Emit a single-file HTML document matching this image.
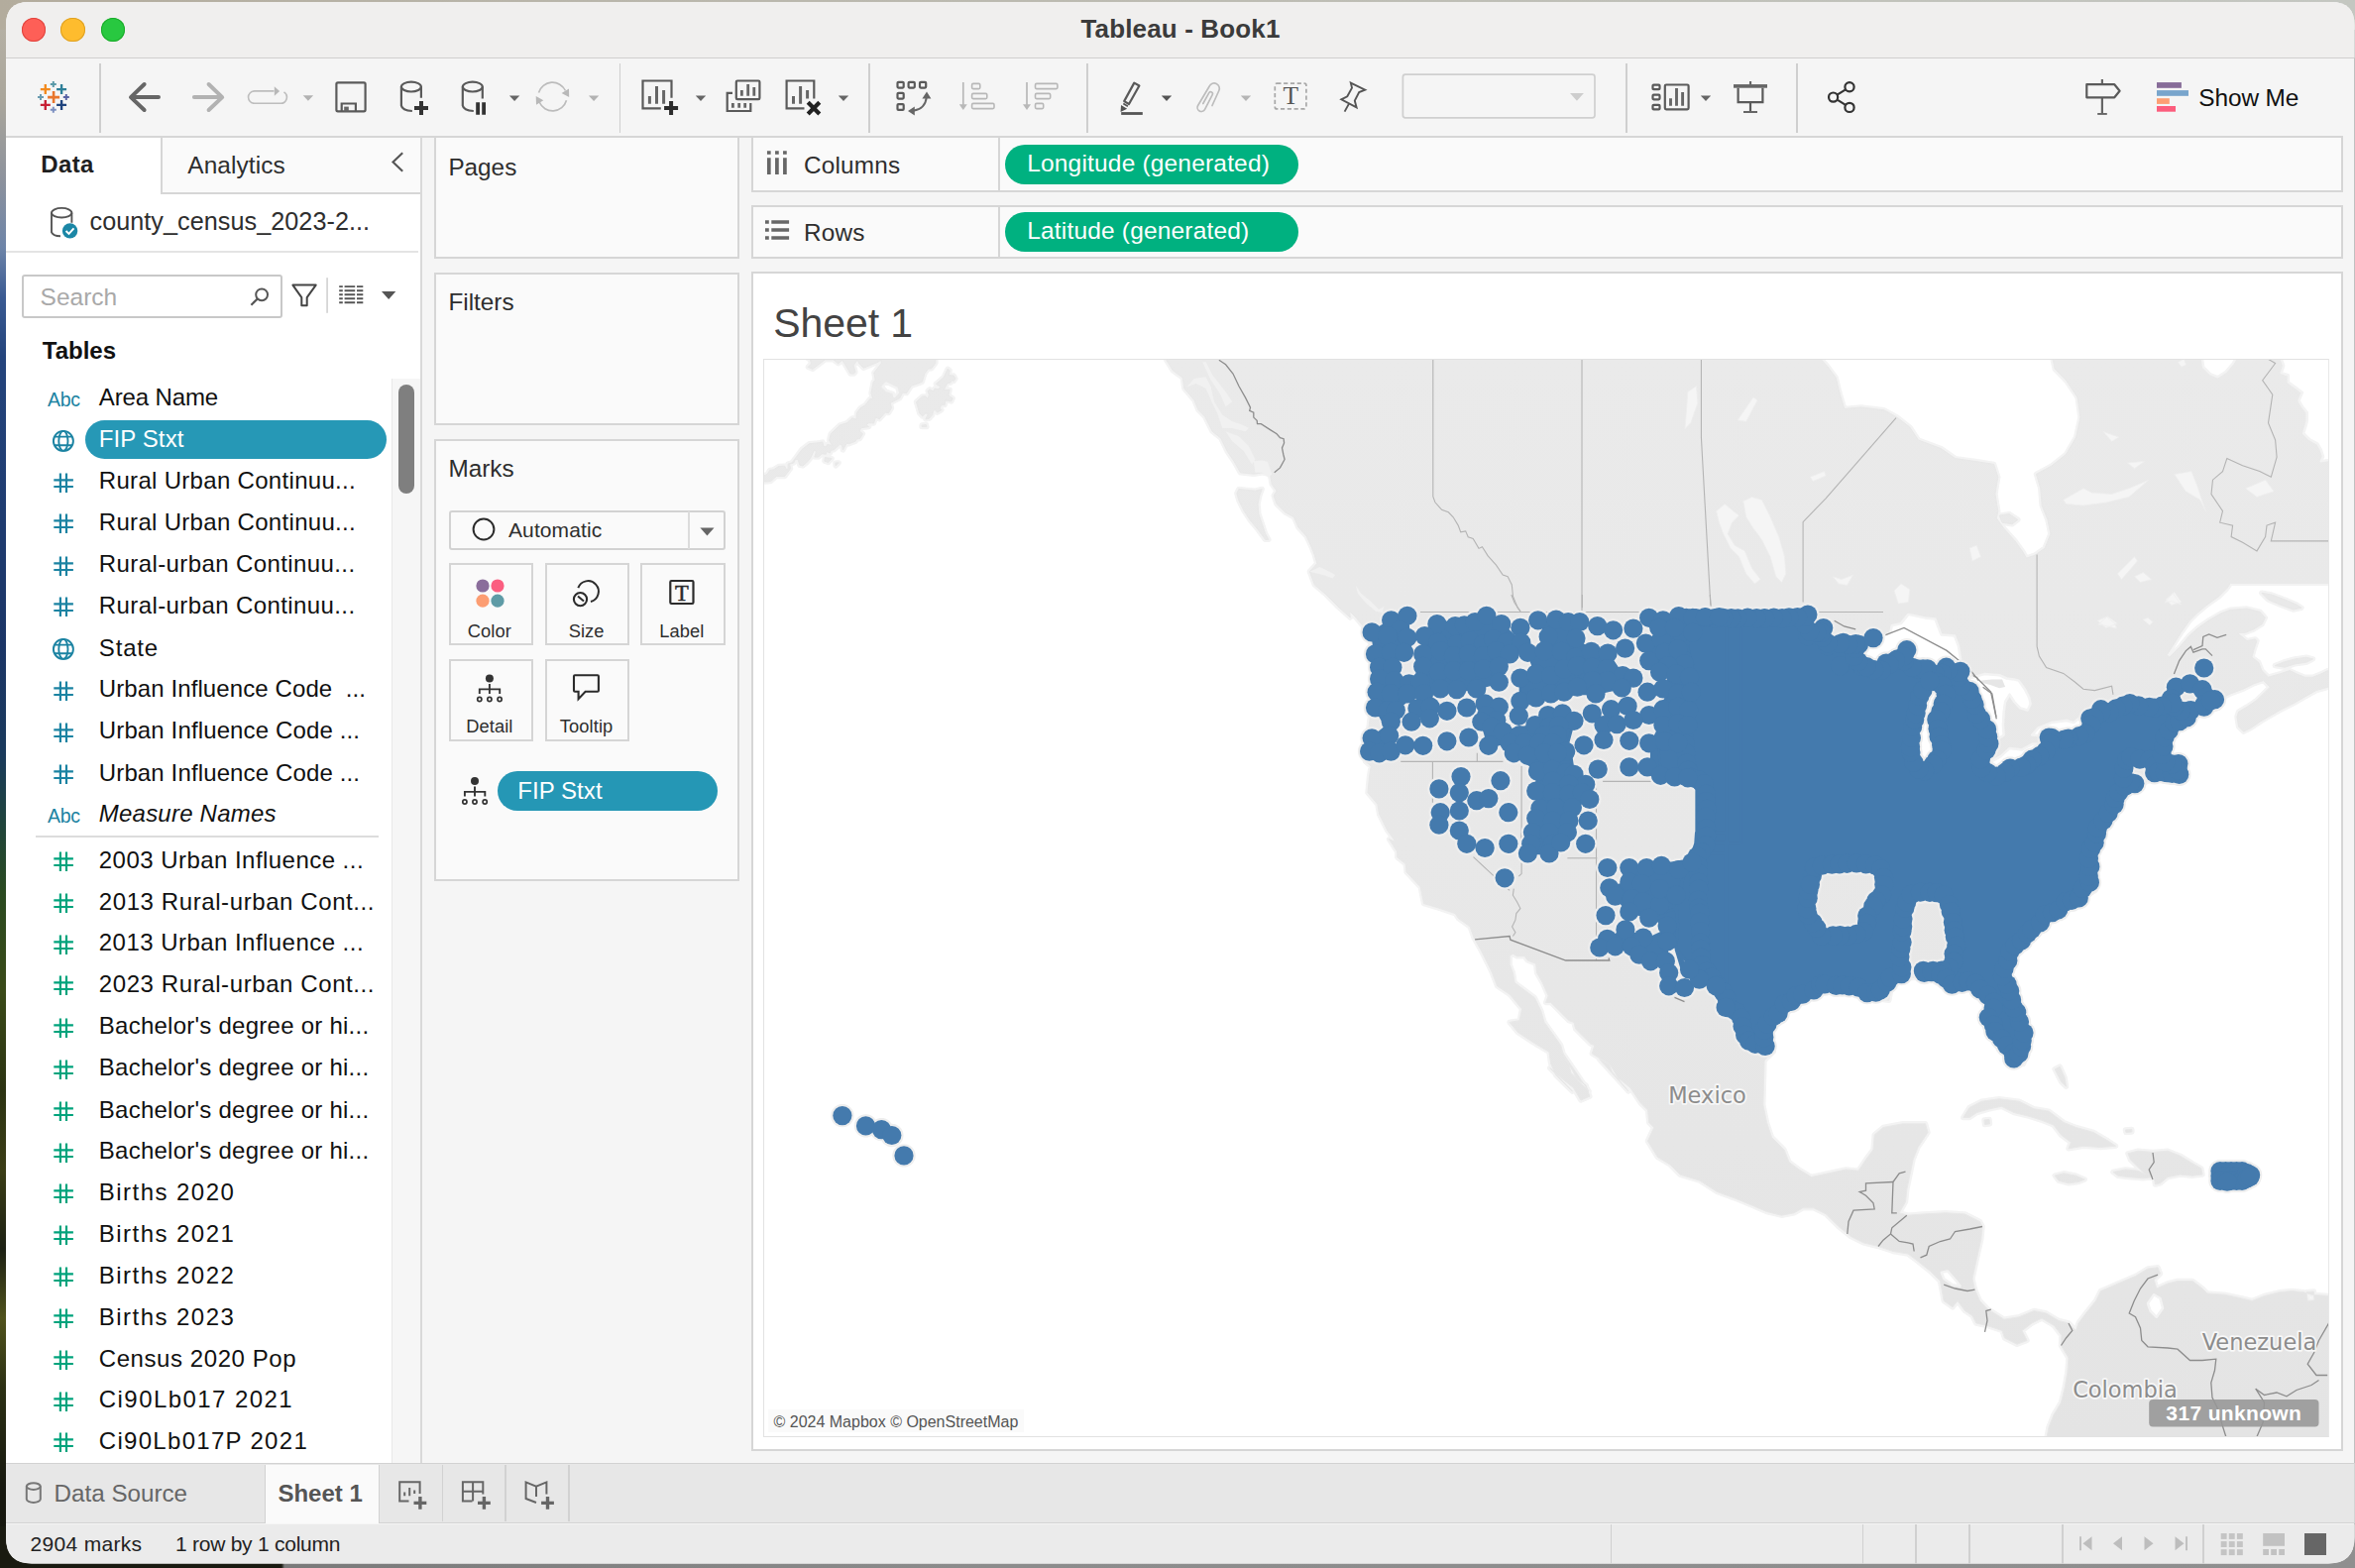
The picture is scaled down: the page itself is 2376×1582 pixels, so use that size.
<!DOCTYPE html>
<html lang="en">
<head>
<meta charset="utf-8">
<title>Tableau - Book1</title>
<style>
*{box-sizing:border-box;margin:0;padding:0}
html,body{width:2376px;height:1582px;overflow:hidden}
body{position:relative;font-family:"Liberation Sans",sans-serif;font-size:24px;color:#2e2e2e;background:#8a8a8a}
.abs,#win div,#win span{position:absolute}
#desk-left{left:0;top:0;width:40px;height:1582px;background:linear-gradient(to bottom,#b9b4a8 0px,#aaa69b 100px,#8d929c 180px,#6d84a8 250px,#3a5a92 300px,#24447c 360px,#1f3c70 520px,#1b3566 650px,#1a3a5c 760px,#20443c 830px,#2a4a20 900px,#3a4a18 1000px,#2c3312 1100px,#3b3d16 1180px,#1d2114 1260px,#50521c 1330px,#2c3014 1400px,#17180f 1500px,#15150e 1582px)}
#desk-top{left:0;top:0;width:2376px;height:30px;background:linear-gradient(to right,#b3ac9d 0,#b9b6ab 600px,#c4c7c1 2376px)}
#desk-bot{left:0;top:1540px;width:2376px;height:42px;background:linear-gradient(to right,#191a10 0,#191a10 284px,#7a7a7a 287px,#8c8c8c 1000px,#8f8f8f 2376px)}
#win{left:0;top:0;width:2376px;height:1582px;background:#f5f5f5;clip-path:path("M6 25 Q6 2 29 2 L2352 2 Q2375.5 2 2375.5 25 L2375.5 1551 Q2375.5 1577.5 2349 1577.5 L32 1577.5 Q6 1577.5 6 1551 Z")}
#titlebar{left:0;top:0;width:2376px;height:57.5px;background:#f0efee}
#tbline{left:0;top:57.5px;width:2376px;height:1.6px;background:#d0cfce}
#title{left:6px;top:2px;width:2370px;text-align:center;font-weight:bold;font-size:26px;line-height:55px;color:#3b3b3b;letter-spacing:.15px}
.tl{width:24.6px;height:24.6px;border-radius:50%;top:17.9px}
#tool-line{left:0;top:137px;width:2364px;height:1.8px;background:#d6d6d6}
.tsep{top:64px;width:1.6px;height:70px;background:#cfcfcf}
svg{position:absolute;overflow:visible}
.ic{fill:none;stroke:#5a5a5a;stroke-width:2.2}
.icl{fill:none;stroke:#b9b9b9;stroke-width:2.2}
.card{background:#fafafa;border:2px solid #d6d6d6}
.lbl{white-space:nowrap;line-height:30px}
.row{left:6px;width:388px;height:42px;line-height:42px;white-space:nowrap}
.row .t{left:93.8px;top:-.3px;letter-spacing:.16px;white-space:pre}
.row svg{left:40px;top:9px}
.row .abc{left:42px;top:1px;font-size:19.5px;color:#1b86a6;letter-spacing:-.3px}
.mbtn{background:#fafafa;border:2px solid #d5d5d5;width:85.5px;height:82.6px}
.mbtn .l{left:-1.2px;width:100%;text-align:center;top:51.2px;font-size:18.3px;line-height:30px;letter-spacing:.1px}
</style>
</head>
<body>
<div id="desk-left" class="abs"></div>
<div id="desk-top" class="abs"></div>
<div id="desk-bot" class="abs"></div>
<div id="win" class="abs">
<div id="titlebar"></div><div id="tbline"></div>
<div class="tl" style="left:21.7px;background:#fe5f57;box-shadow:inset 0 0 0 1px #e0443e"></div>
<div class="tl" style="left:61.4px;background:#febc2e;box-shadow:inset 0 0 0 1px #dea123"></div>
<div class="tl" style="left:101.5px;background:#28c840;box-shadow:inset 0 0 0 1px #1aab29"></div>
<div id="title">Tableau - Book1</div>
<div id="tool-line"></div>
<div class="tsep" style="left:100.4px"></div>
<div class="tsep" style="left:624.5px"></div>
<div class="tsep" style="left:876.4px"></div>
<div class="tsep" style="left:1096.4px"></div>
<div class="tsep" style="left:1640.4px"></div>
<div class="tsep" style="left:1812.0px"></div>
<svg width="2376" height="140" style="left:0;top:0" viewBox="0 0 2376 140">
<path d="M48.1 98.1h12M54.1 92.1v12" stroke="#e8762d" stroke-width="2.6" fill="none"/>
<path d="M40.8 90.1h10M45.8 85.1v10" stroke="#f28a1e" stroke-width="2.4" fill="none"/>
<path d="M57.1 90.1h10M62.1 85.1v10" stroke="#2e7f98" stroke-width="2.4" fill="none"/>
<path d="M40.8 105.9h10M45.8 100.9v10" stroke="#c72035" stroke-width="2.4" fill="none"/>
<path d="M57.1 105.9h10M62.1 100.9v10" stroke="#1f447e" stroke-width="2.4" fill="none"/>
<path d="M50.8 85h6M53.8 82v6" stroke="#5b9aa8" stroke-width="2" fill="none"/>
<path d="M50.8 110.8h6M53.8 107.8v6" stroke="#7b8fc0" stroke-width="2" fill="none"/>
<path d="M38 98.1h6M41 95.1v6" stroke="#6a9bb0" stroke-width="2" fill="none"/>
<path d="M63.8 98.1h6M66.8 95.1v6" stroke="#5a63a5" stroke-width="2" fill="none"/>
<path d="M160 98.1H132.5M145.6 85L132 98.1L145.6 111" fill="none" stroke="#666" stroke-width="4" stroke-linecap="round" stroke-linejoin="round"/>
<path d="M195.9 98.1H223.7M210.6 85L224.2 98.1L210.6 111" fill="none" stroke="#b2b2b2" stroke-width="4" stroke-linecap="round" stroke-linejoin="round"/>
<path d="M276.5 91.9H256.7a6.2 6.2 0 0 0 0 12.4H283a6.2 6.2 0 0 0 3.5-11.4" fill="none" stroke="#bdbdbd" stroke-width="1.6"/>
<path d="M276.8 87.2l5.3 4.7-5.3 4.9z" fill="#b8b8b8"/>
<path d="M305.7 96.2 h10.4 l-5.2 5.6z" fill="#b2b2b2"/>
<rect x="339.4" y="83.3" width="29.2" height="29" rx="1.5" class="ic" stroke="#666"/>
<path d="M344.7 112V104.5h14.2V112" class="ic" stroke="#666"/><rect x="347.2" y="107.6" width="4.6" height="5" fill="#666"/>
<ellipse cx="414.9" cy="87.6" rx="10" ry="4.9" class="ic" stroke="#666"/><path d="M404.9 87.6V106.5q1 5 11 5.5M424.9 87.6V98.8" class="ic" stroke="#666"/>
<path d="M418 109.1h14M425 102.1v14" stroke="#333" stroke-width="4" fill="none"/>
<ellipse cx="476.8" cy="87.6" rx="10" ry="4.9" class="ic" stroke="#666"/><path d="M466.8 87.6V106.5q1 5 11 5.5M486.8 87.6V99.5" class="ic" stroke="#666"/>
<path d="M482.1 103.2v12.6M488.1 103.2v12.6" stroke="#333" stroke-width="3.8" fill="none"/>
<path d="M513.9 96.4 h10.4 l-5.2 5.6z" fill="#666"/>
<path d="M543.5 93.5A14.5 14.5 0 0 1 570.5 91.5M571.5 101.3A14.5 14.5 0 0 1 544.2 103" fill="none" stroke="#bcbcbc" stroke-width="1.7"/>
<path d="M574 89.5l.2 8.6-7.6-4z M541 105.8l-.3-8.8 7.6 4.2z" fill="#b8b8b8"/>
<path d="M593.9 96.4 h10.4 l-5.2 5.6z" fill="#b2b2b2"/>
<path d="M677.5 98.8V81.5h-29V109.3H666.8" class="ic" stroke="#666"/>
<path d="M655.4 97v7.8M662.5 87.1v17.7M669.6 91v13.8" stroke="#666" stroke-width="3" fill="none"/>
<path d="M670.1 109.1h14M677.1 102.1v14" stroke="#2b2b2b" stroke-width="4" fill="none"/>
<path d="M701.8 96.4 h10.4 l-5.2 5.6z" fill="#666"/>
<rect x="742.8" y="81.5" width="23.6" height="18.6" rx="1.2" class="ic" stroke="#666"/>
<path d="M748.4 91v5.8M754.7 85.1v11.7M760.8 88.1v8.7" stroke="#666" stroke-width="2.8" fill="none"/>
<path d="M739 93.9h-5.3V112h23.6V104" class="ic" stroke="#666"/>
<path d="M739.4 104.1v4.7M745.7 104.1v4.7M751.7 104.1v4.7" stroke="#666" stroke-width="2.8" fill="none"/>
<path d="M821.3 99.5V81.5h-27.7V109.3H811.5" class="ic" stroke="#666"/>
<path d="M800.5 97v7.8M807.6 87.1v17.7M814.6 91v8.4" stroke="#666" stroke-width="3" fill="none"/>
<path d="M815.2 103.3l11.6 11.6M826.8 103.3l-11.6 11.6" stroke="#222" stroke-width="4.2" fill="none"/>
<path d="M845.8 96.4 h10.4 l-5.2 5.6z" fill="#666"/>
<rect x="905.5" y="82.8" width="6.2" height="5.8" rx="1" class="ic" stroke="#666" stroke-width="2"/>
<rect x="916.6" y="82.8" width="6.2" height="5.8" rx="1" class="ic" stroke="#666" stroke-width="2"/>
<rect x="928" y="82.8" width="6.2" height="5.8" rx="1" class="ic" stroke="#666" stroke-width="2"/>
<rect x="905.5" y="93.8" width="6.2" height="5.8" rx="1" class="ic" stroke="#666" stroke-width="2"/>
<rect x="905.5" y="105.1" width="6.2" height="5.8" rx="1" class="ic" stroke="#666" stroke-width="2"/>
<path d="M921.5 111.8Q933.5 110 934.8 98" fill="none" stroke="#666" stroke-width="2"/>
<path d="M930.4 99.6l4.6-7 4.4 7z M922.8 107.5l-6.8 4.4 6.8 4.6z" fill="#666"/>
<path d="M971.8 83.1V106" stroke="#b8b8b8" stroke-width="1.7" fill="none"/><path d="M967.8 105.3h8l-4 5.6z" fill="#b8b8b8"/><rect x="980.6" y="84.4" width="8.2" height="5.2" rx="1.3" fill="none" stroke="#b8b8b8" stroke-width="1.6"/><rect x="980.6" y="94.4" width="15.2" height="5.2" rx="1.3" fill="none" stroke="#b8b8b8" stroke-width="1.6"/><rect x="980.6" y="104.4" width="22.4" height="5.2" rx="1.3" fill="none" stroke="#b8b8b8" stroke-width="1.6"/>
<path d="M1036 83.1V106" stroke="#b8b8b8" stroke-width="1.7" fill="none"/><path d="M1032 105.3h8l-4 5.6z" fill="#b8b8b8"/><rect x="1044.5" y="84.4" width="22.4" height="5.2" rx="1.3" fill="none" stroke="#b8b8b8" stroke-width="1.6"/><rect x="1044.5" y="94.4" width="15.2" height="5.2" rx="1.3" fill="none" stroke="#b8b8b8" stroke-width="1.6"/><rect x="1044.5" y="104.4" width="8.2" height="5.2" rx="1.3" fill="none" stroke="#b8b8b8" stroke-width="1.6"/>
<path d="M1144.3 83.6L1149.4 86.5L1139 105L1134.2 102.1Z" class="ic" stroke="#555" stroke-width="1.9" stroke-linejoin="round"/>
<path d="M1133.3 104.5l4.6 2.7M1131.8 107.4l3.6 2.2-3.9 1.9z" stroke="#555" stroke-width="1.7" fill="#555"/>
<rect x="1131.2" y="113.1" width="21.6" height="2.8" fill="#555"/>
<path d="M1171.8 96.4 h10.4 l-5.2 5.6z" fill="#555"/>
<path d="M1223 106.5L1229.8 91.5A5.2 5.2 0 0 0 1220.2 87L1208.6 106.5A4 4 0 0 0 1215.6 110.4L1223.3 95.5A2 2 0 0 0 1219.8 93.6L1213.8 104.5" fill="none" stroke="#bdbdbd" stroke-width="1.7" stroke-linecap="round"/>
<path d="M1251.8 96.4 h10.4 l-5.2 5.6z" fill="#b5b5b5"/>
<rect x="1286.3" y="84.1" width="31.6" height="25.8" rx="2" fill="none" stroke="#a8a8a8" stroke-width="1.7" stroke-dasharray="4.2 2.6"/>
<text x="1302.2" y="105.3" text-anchor="middle" font-family="Liberation Serif,serif" font-size="25.5" fill="#555">T</text>
<path d="M1362.8 83.6L1377.2 90.6L1371.2 93L1366.8 101.6L1368.6 108.4L1353.3 100.3L1359.3 97.3L1364 88.6Z M1361 104.6L1356.6 112.6" fill="none" stroke="#555" stroke-width="1.9" stroke-linejoin="miter"/>
<rect x="1415.4" y="75.2" width="193.6" height="43.6" rx="2.5" fill="none" stroke="#cfcfcf" stroke-width="1.7"/>
<path d="M1584 94.1h13.9l-6.95 7.7z" fill="#cdcdcd"/>
<rect x="1667.5" y="85.6" width="7" height="4.6" rx="1" class="ic" stroke="#666" stroke-width="1.9"/>
<rect x="1667.5" y="95.7" width="7" height="4.6" rx="1" class="ic" stroke="#666" stroke-width="1.9"/>
<rect x="1667.5" y="105.8" width="7" height="4.6" rx="1" class="ic" stroke="#666" stroke-width="1.9"/>
<rect x="1679.8" y="85.5" width="23.8" height="24.8" rx="1.3" class="ic" stroke="#666" stroke-width="2.1"/>
<path d="M1685.5 99.2v7.6M1691.5 89v17.8M1697.6 93v13.8" stroke="#666" stroke-width="2.9" fill="none"/>
<path d="M1715.8 96.4 h10.4 l-5.2 5.6z" fill="#666"/>
<rect x="1749" y="85.1" width="34" height="3.6" fill="#666"/><rect x="1765" y="82" width="2.1" height="3.5" fill="#666"/>
<path d="M1753.6 88.7V103.1H1778.4V88.7M1766 103.1V112.8" class="ic" stroke="#666" stroke-width="2.1"/><rect x="1759" y="112" width="14" height="2" fill="#666"/>
<path d="M1854 95.4L1861.6 90.6M1854 100.9L1861.6 105.6" stroke="#333" stroke-width="2.2"/>
<circle cx="1866" cy="87.8" r="4.6" fill="none" stroke="#333" stroke-width="2.2"/>
<circle cx="1849.6" cy="98.1" r="4.6" fill="none" stroke="#333" stroke-width="2.2"/>
<circle cx="1866" cy="108.4" r="4.6" fill="none" stroke="#333" stroke-width="2.2"/>
<path d="M2120.9 80V84.7M2120.9 98.8V114.5" stroke="#666" stroke-width="2.2" fill="none"/>
<path d="M2105.3 85.2H2133.3L2138.6 91.8L2133.3 98.3H2105.3Z" class="ic" stroke="#666" stroke-width="2.1" stroke-linejoin="round"/>
<rect x="2116.2" y="114" width="9.6" height="1.9" fill="#666"/>
<rect x="2176" y="83.1" width="24.9" height="5.7" fill="#876c98"/>
<rect x="2176" y="91.1" width="32" height="5.7" fill="#78a5cc"/>
<rect x="2176" y="99.2" width="12.8" height="5.7" fill="#fd9e73"/>
<rect x="2176" y="107" width="19" height="5.7" fill="#fc5d7d"/>
</svg>
<div class="lbl" style="left:2218.3px;top:83.6px;font-size:24.4px;color:#111;letter-spacing:-.1px">Show Me</div>
<div style="left:6px;top:139px;width:418px;height:1338px;background:#fff"></div>
<div style="left:424px;top:139px;width:2px;height:1338px;background:#d9d9d9"></div>
<div style="left:162px;top:139px;width:262px;height:56.5px;background:#fafafa;border-left:2px solid #d6d6d6;border-bottom:2px solid #d6d6d6"></div>
<div class="lbl" style="left:41.3px;top:150.6px;font-weight:bold;color:#1f1f1f;font-size:24px;letter-spacing:.35px">Data</div>
<div class="lbl" style="left:189.3px;top:152px;font-size:24.4px;letter-spacing:.1px">Analytics</div>
<svg width="20" height="24" style="left:394px;top:152px"><path d="M12.2 2.2L2.5 11.5L12.2 20.8" fill="none" stroke="#555" stroke-width="2.1"/></svg>
<svg width="40" height="40" style="left:46px;top:204px"><ellipse cx="16.2" cy="10.7" rx="10.2" ry="4.8" fill="none" stroke="#555" stroke-width="1.9"/><path d="M6 10.7V30.3q1.5 3.6 9 4M26.4 10.7V20.8" fill="none" stroke="#555" stroke-width="1.9"/><circle cx="24.6" cy="28.9" r="7.7" fill="#1b87a6"/><path d="M20.6 29l2.9 2.9 5-5.6" fill="none" stroke="#fff" stroke-width="2"/></svg>
<div class="lbl" style="left:90.5px;top:208.3px;font-size:25.2px;letter-spacing:.05px">county_census_2023-2...</div>
<div style="left:6px;top:253px;width:416px;height:2px;background:#e4e4e4"></div>
<div style="left:22.4px;top:276.6px;width:263px;height:44.8px;border:2px solid #c8c8c8;border-radius:3px;background:#fff"></div>
<div class="lbl" style="left:40.6px;top:284.5px;color:#a9a9a9;font-size:24.5px">Search</div>
<svg width="420" height="60" style="left:0;top:270px" viewBox="0 270 420 60"><circle cx="264.1" cy="297.3" r="5.9" fill="none" stroke="#555" stroke-width="2"/><path d="M259.8 301.5L253.4 307.7" stroke="#555" stroke-width="2.2" fill="none"/><path d="M295.4 287.6H318.7L309.7 300.2V308.2H304.3V300.2Z" fill="none" stroke="#444" stroke-width="2" stroke-linejoin="round"/><rect x="329.2" y="280.2" width="1.8" height="35.6" fill="#d6d6d6"/><path d="M342.2 289.1h3.6M347.6 289.1h10.6M360 289.1h6.3" stroke="#555" stroke-width="1.9"/><path d="M342.2 293.3h3.6M347.6 293.3h10.6M360 293.3h6.3" stroke="#555" stroke-width="1.9"/><path d="M342.2 297.3h3.6M347.6 297.3h10.6M360 297.3h6.3" stroke="#555" stroke-width="1.9"/><path d="M342.2 301.3h3.6M347.6 301.3h10.6M360 301.3h6.3" stroke="#555" stroke-width="1.9"/><path d="M342.2 305.3h3.6M347.6 305.3h10.6M360 305.3h6.3" stroke="#555" stroke-width="1.9"/><path d="M385.0 294.1 h14.3 l-7.15 8z" fill="#555"/></svg>
<div class="lbl" style="left:42.8px;top:339px;font-weight:bold;color:#111;font-size:24px;letter-spacing:0px">Tables</div>
<div style="left:394.5px;top:382px;width:29.5px;height:1095px;background:#f6f6f6;border-left:1.5px solid #e9e9e9"></div>
<div style="left:402.3px;top:388.3px;width:15.4px;height:109.4px;border-radius:8px;background:#7f7f7f"></div>
<div class="row" style="top:380.6px"><span class="abc" style="color:#1b83a2">Abc</span><span class="t" style="letter-spacing:-0.12px;color:#111;">Area Name</span></div>
<div style="left:85.9px;top:423.8px;width:304.3px;height:39.7px;border-radius:20px;background:#2698b6"></div>
<div class="row" style="top:422.6px"><svg width="24" height="24"><g fill="none" stroke="#1b83a2" stroke-width="1.9"><circle cx="17.9" cy="12.9" r="10"/><ellipse cx="17.9" cy="12.9" rx="4.6" ry="10"/><path d="M9 8.6H26.8M9 17.2H26.8"/></g></svg><span class="t" style="letter-spacing:.1px;color:#fff;">FIP Stxt</span></div>
<div class="row" style="top:464.6px"><svg width="24" height="24"><path d="M14.9 3.6V23M21 3.6V23M8.3 10.3H27.9M8.3 17H27.9" stroke="#1b83a2" stroke-width="2.2" fill="none"/></svg><span class="t" style="letter-spacing:0.31px;color:#111;">Rural Urban Continuu...</span></div>
<div class="row" style="top:506.4px"><svg width="24" height="24"><path d="M14.9 3.6V23M21 3.6V23M8.3 10.3H27.9M8.3 17H27.9" stroke="#1b83a2" stroke-width="2.2" fill="none"/></svg><span class="t" style="letter-spacing:0.31px;color:#111;">Rural Urban Continuu...</span></div>
<div class="row" style="top:548.6px"><svg width="24" height="24"><path d="M14.9 3.6V23M21 3.6V23M8.3 10.3H27.9M8.3 17H27.9" stroke="#1b83a2" stroke-width="2.2" fill="none"/></svg><span class="t" style="letter-spacing:0.4px;color:#111;">Rural-urban Continuu...</span></div>
<div class="row" style="top:590.4px"><svg width="24" height="24"><path d="M14.9 3.6V23M21 3.6V23M8.3 10.3H27.9M8.3 17H27.9" stroke="#1b83a2" stroke-width="2.2" fill="none"/></svg><span class="t" style="letter-spacing:0.4px;color:#111;">Rural-urban Continuu...</span></div>
<div class="row" style="top:633.0px"><svg width="24" height="24"><g fill="none" stroke="#1b83a2" stroke-width="1.9"><circle cx="17.9" cy="12.9" r="10"/><ellipse cx="17.9" cy="12.9" rx="4.6" ry="10"/><path d="M9 8.6H26.8M9 17.2H26.8"/></g></svg><span class="t" style="letter-spacing:0.84px;color:#111;">State</span></div>
<div class="row" style="top:674.7px"><svg width="24" height="24"><path d="M14.9 3.6V23M21 3.6V23M8.3 10.3H27.9M8.3 17H27.9" stroke="#1b83a2" stroke-width="2.2" fill="none"/></svg><span class="t" style="letter-spacing:0.1px;color:#111;">Urban Influence Code  ...</span></div>
<div class="row" style="top:716.7px"><svg width="24" height="24"><path d="M14.9 3.6V23M21 3.6V23M8.3 10.3H27.9M8.3 17H27.9" stroke="#1b83a2" stroke-width="2.2" fill="none"/></svg><span class="t" style="letter-spacing:0.13px;color:#111;">Urban Influence Code ...</span></div>
<div class="row" style="top:758.8px"><svg width="24" height="24"><path d="M14.9 3.6V23M21 3.6V23M8.3 10.3H27.9M8.3 17H27.9" stroke="#1b83a2" stroke-width="2.2" fill="none"/></svg><span class="t" style="letter-spacing:0.13px;color:#111;">Urban Influence Code ...</span></div>
<div class="row" style="top:800.6px"><span class="abc" style="color:#1b83a2">Abc</span><span class="t" style="font-style:italic;letter-spacing:0.22px;color:#111;">Measure Names</span></div>
<div class="row" style="top:847.3px"><svg width="24" height="24"><path d="M14.9 3.6V23M21 3.6V23M8.3 10.3H27.9M8.3 17H27.9" stroke="#00a37c" stroke-width="2.2" fill="none"/></svg><span class="t" style="letter-spacing:0.46px;color:#111;">2003 Urban Influence ...</span></div>
<div class="row" style="top:889.0px"><svg width="24" height="24"><path d="M14.9 3.6V23M21 3.6V23M8.3 10.3H27.9M8.3 17H27.9" stroke="#00a37c" stroke-width="2.2" fill="none"/></svg><span class="t" style="letter-spacing:0.59px;color:#111;">2013 Rural-urban Cont...</span></div>
<div class="row" style="top:930.7px"><svg width="24" height="24"><path d="M14.9 3.6V23M21 3.6V23M8.3 10.3H27.9M8.3 17H27.9" stroke="#00a37c" stroke-width="2.2" fill="none"/></svg><span class="t" style="letter-spacing:0.46px;color:#111;">2013 Urban Influence ...</span></div>
<div class="row" style="top:972.4px"><svg width="24" height="24"><path d="M14.9 3.6V23M21 3.6V23M8.3 10.3H27.9M8.3 17H27.9" stroke="#00a37c" stroke-width="2.2" fill="none"/></svg><span class="t" style="letter-spacing:0.59px;color:#111;">2023 Rural-urban Cont...</span></div>
<div class="row" style="top:1014.6px"><svg width="24" height="24"><path d="M14.9 3.6V23M21 3.6V23M8.3 10.3H27.9M8.3 17H27.9" stroke="#00a37c" stroke-width="2.2" fill="none"/></svg><span class="t" style="letter-spacing:0.25px;color:#111;">Bachelor's degree or hi...</span></div>
<div class="row" style="top:1056.6px"><svg width="24" height="24"><path d="M14.9 3.6V23M21 3.6V23M8.3 10.3H27.9M8.3 17H27.9" stroke="#00a37c" stroke-width="2.2" fill="none"/></svg><span class="t" style="letter-spacing:0.25px;color:#111;">Bachelor's degree or hi...</span></div>
<div class="row" style="top:1098.8px"><svg width="24" height="24"><path d="M14.9 3.6V23M21 3.6V23M8.3 10.3H27.9M8.3 17H27.9" stroke="#00a37c" stroke-width="2.2" fill="none"/></svg><span class="t" style="letter-spacing:0.25px;color:#111;">Bachelor's degree or hi...</span></div>
<div class="row" style="top:1140.6px"><svg width="24" height="24"><path d="M14.9 3.6V23M21 3.6V23M8.3 10.3H27.9M8.3 17H27.9" stroke="#00a37c" stroke-width="2.2" fill="none"/></svg><span class="t" style="letter-spacing:0.25px;color:#111;">Bachelor's degree or hi...</span></div>
<div class="row" style="top:1182.4px"><svg width="24" height="24"><path d="M14.9 3.6V23M21 3.6V23M8.3 10.3H27.9M8.3 17H27.9" stroke="#00a37c" stroke-width="2.2" fill="none"/></svg><span class="t" style="letter-spacing:1.46px;color:#111;">Births 2020</span></div>
<div class="row" style="top:1224.2px"><svg width="24" height="24"><path d="M14.9 3.6V23M21 3.6V23M8.3 10.3H27.9M8.3 17H27.9" stroke="#00a37c" stroke-width="2.2" fill="none"/></svg><span class="t" style="letter-spacing:1.46px;color:#111;">Births 2021</span></div>
<div class="row" style="top:1266.0px"><svg width="24" height="24"><path d="M14.9 3.6V23M21 3.6V23M8.3 10.3H27.9M8.3 17H27.9" stroke="#00a37c" stroke-width="2.2" fill="none"/></svg><span class="t" style="letter-spacing:1.46px;color:#111;">Births 2022</span></div>
<div class="row" style="top:1308.0px"><svg width="24" height="24"><path d="M14.9 3.6V23M21 3.6V23M8.3 10.3H27.9M8.3 17H27.9" stroke="#00a37c" stroke-width="2.2" fill="none"/></svg><span class="t" style="letter-spacing:1.46px;color:#111;">Births 2023</span></div>
<div class="row" style="top:1349.8px"><svg width="24" height="24"><path d="M14.9 3.6V23M21 3.6V23M8.3 10.3H27.9M8.3 17H27.9" stroke="#00a37c" stroke-width="2.2" fill="none"/></svg><span class="t" style="letter-spacing:0.57px;color:#111;">Census 2020 Pop</span></div>
<div class="row" style="top:1391.6px"><svg width="24" height="24"><path d="M14.9 3.6V23M21 3.6V23M8.3 10.3H27.9M8.3 17H27.9" stroke="#00a37c" stroke-width="2.2" fill="none"/></svg><span class="t" style="letter-spacing:1.44px;color:#111;">Ci90Lb017 2021</span></div>
<div class="row" style="top:1433.4px"><svg width="24" height="24"><path d="M14.9 3.6V23M21 3.6V23M8.3 10.3H27.9M8.3 17H27.9" stroke="#00a37c" stroke-width="2.2" fill="none"/></svg><span class="t" style="letter-spacing:1.3px;color:#111;">Ci90Lb017P 2021</span></div>
<div style="left:36px;top:843.4px;width:346px;height:2px;background:#dcdcdc"></div>
<div class="card" style="left:438.4px;top:137.4px;width:307.4px;height:124px"></div>
<div class="lbl" style="left:452.4px;top:154px;font-size:24.3px">Pages</div>
<div class="card" style="left:438.4px;top:275px;width:307.4px;height:154.4px"></div>
<div class="lbl" style="left:452.4px;top:289.5px;font-size:24.3px">Filters</div>
<div class="card" style="left:438.4px;top:442.8px;width:307.4px;height:446px"></div>
<div class="lbl" style="left:452.4px;top:457.5px;font-size:24.3px">Marks</div>
<div style="left:452.5px;top:514.5px;width:279.2px;height:40.8px;border:2px solid #d2d2d2;border-radius:3px;background:#fafafa"></div>
<div style="left:694px;top:516px;width:2px;height:38px;background:#dcdcdc"></div>
<svg width="40" height="40" style="left:470px;top:516px"><circle cx="18" cy="18" r="10.4" fill="none" stroke="#2b2b2b" stroke-width="2"/></svg>
<div class="lbl" style="left:513px;top:520.4px;font-size:21px;letter-spacing:.1px">Automatic</div>
<svg width="20" height="12" style="left:705.5px;top:531.5px"><path d="M.4 .5h14.1l-7.05 7.9z" fill="#666"/></svg>
<div class="mbtn" style="left:452.5px;top:568.4px;width:85px;height:83px"><svg width="40" height="40" style="left:22.2px;top:10.5px"><circle cx="10" cy="10" r="6.6" fill="#8a6d9b"/><circle cx="25" cy="10" r="6.6" fill="#fb5e80"/><circle cx="10" cy="25.2" r="6.6" fill="#fc9d72"/><circle cx="25" cy="25.2" r="6.6" fill="#5e9ba6"/></svg><span class="l">Color</span></div>
<div class="mbtn" style="left:550.3px;top:568.4px;width:85px;height:83px"><svg width="40" height="40" style="left:22.2px;top:10.5px"><path d="M9.3 12.2A10.6 10.6 0 1 1 22 26" fill="none" stroke="#2b2b2b" stroke-width="2"/><circle cx="11.5" cy="23.6" r="6.6" fill="none" stroke="#2b2b2b" stroke-width="2.1"/><path d="M9 20.6l6 4.9" stroke="#2b2b2b" stroke-width="2"/></svg><span class="l">Size</span></div>
<div class="mbtn" style="left:646.4px;top:568.4px;width:85.3px;height:83px"><svg width="40" height="40" style="left:22.2px;top:10.5px"><rect x="5.3" y="5" width="23.2" height="23" rx="1.2" fill="none" stroke="#2b2b2b" stroke-width="2.2"/><text x="16.9" y="24.6" text-anchor="middle" font-family="Liberation Serif,serif" font-size="22.5" stroke="#2b2b2b" stroke-width=".5" fill="#2b2b2b">T</text></svg><span class="l">Label</span></div>
<div class="mbtn" style="left:452.5px;top:664.5px;width:85px;height:83px"><svg width="60" height="50" style="left:-2px;top:-1.5px"><circle cx="40.9" cy="19.4" r="4" fill="#333"/><path d="M40.9 24.9V34.9M30.799999999999997 34.9V30.4H51.2V34.9" fill="none" stroke="#333" stroke-width="1.9"/><circle cx="30.799999999999997" cy="40.5" r="2.1" fill="none" stroke="#333" stroke-width="1.7"/><circle cx="40.9" cy="40.5" r="2.1" fill="none" stroke="#333" stroke-width="1.7"/><circle cx="51.099999999999994" cy="40.5" r="2.1" fill="none" stroke="#333" stroke-width="1.7"/></svg><span class="l">Detail</span></div>
<div class="mbtn" style="left:550.3px;top:664.5px;width:85px;height:83px"><svg width="60" height="50" style="left:-2.2px;top:-1.6px"><path d="M30 16.2H52.9a1 1 0 0 1 1 1V31.8a1 1 0 0 1-1 1H40.6L33.6 40.2V32.8H30a1 1 0 0 1-1-1V17.2a1 1 0 0 1 1-1Z" fill="none" stroke="#2b2b2b" stroke-width="2.1" stroke-linejoin="miter"/></svg><span class="l">Tooltip</span></div>
<svg width="40" height="40" style="left:460px;top:770px"><circle cx="19" cy="17.9" r="4" fill="#333"/><path d="M19 23.4V33.4M8.9 33.4V28.9H29.3V33.4" fill="none" stroke="#333" stroke-width="1.9"/><circle cx="8.9" cy="39.0" r="2.1" fill="none" stroke="#333" stroke-width="1.7"/><circle cx="19" cy="39.0" r="2.1" fill="none" stroke="#333" stroke-width="1.7"/><circle cx="29.2" cy="39.0" r="2.1" fill="none" stroke="#333" stroke-width="1.7"/></svg>
<div style="left:501.9px;top:778.1px;width:222.2px;height:39.6px;border-radius:20px;background:#2597b5"></div>
<div class="lbl" style="left:522.3px;top:782.6px;color:#fff;letter-spacing:.05px">FIP Stxt</div>
<div class="card" style="left:758.2px;top:137.4px;width:1606.2px;height:56.2px"></div>
<div style="left:1006.7px;top:139.4px;width:2px;height:52.2px;background:#d6d6d6"></div>
<div class="lbl" style="left:811px;top:151.8px;font-size:24.3px;letter-spacing:.2px">Columns</div>
<div style="left:1013.9px;top:145.8px;width:296.4px;height:40.2px;border-radius:20.1px;background:#00b180"></div>
<div class="lbl" style="left:1036.2px;top:150.2px;color:#fff;font-size:24.5px;letter-spacing:.18px">Longitude (generated)</div>
<div class="card" style="left:758.2px;top:206.7px;width:1606.2px;height:54.8px"></div>
<div style="left:1006.7px;top:208.7px;width:2px;height:50.8px;background:#d6d6d6"></div>
<div class="lbl" style="left:811px;top:219.9px;font-size:24.3px;letter-spacing:.2px">Rows</div>
<div style="left:1013.9px;top:213.9px;width:296.4px;height:40.2px;border-radius:20.1px;background:#00b180"></div>
<div class="lbl" style="left:1036.2px;top:218.3px;color:#fff;font-size:24.5px;letter-spacing:.18px">Latitude (generated)</div>
<svg width="30" height="30" style="left:770px;top:150px"><path d="M5.8 2.2v3.5M13.9 2.2v3.5M21.9 2.2v3.5M5.8 9.3v16.6M13.9 9.3v16.6M21.9 9.3v16.6" stroke="#666" stroke-width="3.7" fill="none"/></svg>
<svg width="30" height="30" style="left:770px;top:218px"><path d="M2 5.9h3.8M8.3 5.9h17.8M2 14.1h3.8M8.3 14.1h17.8M2 22.1h3.8M8.3 22.1h17.8" stroke="#666" stroke-width="3.5" fill="none"/></svg>
<div style="left:758.2px;top:274.2px;width:1606.2px;height:1189.6px;background:#fff;border:2px solid #d6d6d6"></div>
<div class="lbl" style="left:780.3px;top:302px;font-size:41px;line-height:48px;color:#434343;letter-spacing:-.1px">Sheet 1</div>
<svg width="1580" height="1088" viewBox="770 362 1580 1088" style="left:770px;top:362px;overflow:hidden;background:#fff">
<defs><filter id="sb" x="-5%" y="-5%" width="110%" height="110%"><feGaussianBlur stdDeviation="0.7"/></filter><linearGradient id="lg" gradientUnits="userSpaceOnUse" x1="0" y1="362" x2="0" y2="1450"><stop offset="0" stop-color="#eaeaea"/><stop offset=".45" stop-color="#e8e8e8"/><stop offset="1" stop-color="#e4e4e4"/></linearGradient></defs>
<g filter="url(#sb)"><path d="M813.3 360.3L943.9 360.3L943.9 366.2L939.8 371.7L936.4 372.0L932.8 377.0L930.3 385.3L919.5 389.1L914.5 396.6L910.6 396.1L907.8 401.6L898.2 406.6L899.5 411.6L896.5 416.6L893.2 416.1L887.3 422.8L883.5 421.1L881.5 426.9L876.5 426.6L874.0 428.6L876.5 430.6L869.0 431.6L867.0 434.9L870.4 437.7L867.4 442.7L864.5 442.7L863.2 445.2L856.6 447.7L854.1 447.2L850.4 453.9L849.6 449.4L847.4 448.2L841.6 453.5L838.2 454.4L837.4 456.9L834.1 455.5L833.2 458.2L829.1 457.7L825.8 461.0L821.9 461.0L823.6 455.2L821.3 454.4L817.4 462.7L813.6 466.9L809.9 469.9L807.0 469.4L805.0 463.5L802.5 463.5L800.8 466.9L796.6 468.2L797.5 472.7L791.6 480.5L783.3 480.5L777.5 485.5L772.5 486.0L768.3 484.3L768.3 481.0L774.2 478.5L776.7 474.4L780.3 473.9L785.8 470.5L791.6 470.2L793.6 473.9L795.0 473.2L795.0 468.2L799.1 466.9L804.1 460.2L809.1 453.5L816.6 447.7L824.9 446.9L829.9 446.1L830.8 450.2L833.2 451.0L834.6 448.6L839.6 449.4L836.6 444.4L838.2 437.7L847.4 429.1L854.9 426.6L859.9 421.9L864.0 423.3L864.5 416.6L868.2 411.6L872.9 408.9L877.9 402.4L880.7 402.8L879.0 396.6L881.2 385.3L883.2 383.6L881.9 376.1L889.5 366.2L888.5 362.8L886.5 365.0L871.2 371.2L866.5 366.2L865.2 362.8L861.2 368.7L862.9 375.3L861.5 377.0L858.2 377.0L849.9 363.3L845.7 366.7L840.7 362.8L832.4 362.8L819.9 372.3L815.3 370.3L818.6 367.0L817.4 362.8ZM924.5 405.6L930.6 399.9L933.9 399.9L936.1 402.8L937.3 398.3L936.1 394.5L938.1 392.8L941.4 395.0L943.1 392.0L946.4 392.8L948.9 390.3L944.4 387.3L952.3 380.6L956.1 372.3L958.1 373.7L957.3 378.6L962.2 379.0L963.9 382.0L962.2 384.5L960.6 383.6L958.9 386.1L955.6 386.6L952.3 393.6L958.1 393.3L956.8 399.0L961.1 401.9L959.7 404.9L953.9 403.9L953.1 408.6L949.8 408.3L948.1 411.9L949.8 413.6L945.6 416.1L943.1 413.3L941.4 414.9L940.6 418.6L937.3 422.3L933.9 422.8L936.4 417.8L933.9 416.9L930.6 419.9L927.8 416.9ZM832.4 461.5L839.1 462.7L835.7 466.5L831.9 465.2ZM842.9 467.2L846.2 466.9L843.2 469.9ZM930.1 429.1L934.4 428.6L934.8 430.6L930.1 430.6ZM1249.9 493.5L1256.5 494.3L1266.5 495.2L1273.2 493.5L1270.7 500.1L1269.0 508.5L1269.8 518.5L1273.2 528.4L1276.5 538.4L1279.8 544.3L1276.5 544.3L1269.8 535.1L1261.5 525.1L1254.9 515.1L1249.9 505.1L1247.9 497.7ZM1175.0 360.3L1183.3 373.7L1193.3 381.1L1194.9 392.0L1204.9 403.6L1209.1 413.6L1215.7 420.3L1223.2 435.2L1231.6 441.9L1238.2 455.2L1244.9 465.2L1251.5 476.8L1264.8 478.2L1274.0 476.8L1281.5 478.5L1283.2 488.5L1288.1 495.2L1285.2 500.1L1288.1 508.5L1296.5 516.8L1305.6 521.8L1309.8 531.8L1318.1 540.9L1323.1 551.7L1326.4 560.1L1328.9 568.4L1321.4 576.7L1326.4 590.0L1338.1 600.0L1349.7 611.7L1362.2 623.0L1361.7 616.6L1368.3 623.3L1376.6 633.3L1383.3 649.9L1385.0 683.2L1383.3 716.5L1380.0 741.5L1376.6 759.8L1377.5 768.1L1383.3 773.1L1381.6 783.1L1380.0 799.7L1389.9 811.4L1391.6 821.4L1399.9 838.0L1408.3 849.7L1410.8 861.0L1401.6 846.7L1409.1 850.0L1409.9 865.0L1418.2 871.6L1419.1 879.9L1433.2 894.9L1436.6 911.6L1453.2 916.6L1468.2 921.6L1471.5 926.6L1483.2 934.9L1487.3 946.5L1494.8 959.8L1504.8 979.8L1510.6 994.8L1523.1 1003.1L1535.6 1018.1L1533.1 1029.7L1523.1 1031.4L1531.4 1041.4L1546.4 1051.4L1563.0 1061.4L1564.7 1073.0L1569.7 1084.7L1586.4 1101.0L1563.8 1077.5L1575.0 1087.5L1587.5 1097.5L1595.0 1110.0L1603.8 1106.2L1600.0 1095.0L1592.5 1090.0L1585.0 1082.5L1582.5 1072.5L1575.0 1060.0L1603.0 1101.0L1591.3 1089.7L1586.4 1079.7L1578.0 1066.4L1574.7 1054.7L1566.4 1043.1L1558.1 1031.4L1554.7 1019.8L1548.1 1006.4L1541.4 1001.5L1528.1 991.5L1526.4 981.5L1523.1 973.2L1523.1 964.0L1526.4 962.3L1530.6 964.8L1538.1 964.5L1541.4 969.0L1549.7 972.3L1550.6 981.5L1556.4 991.5L1562.2 1004.8L1559.7 1011.4L1564.7 1011.4L1583.0 1029.7L1588.0 1031.4L1589.7 1038.1L1604.7 1053.0L1608.8 1054.7L1606.3 1063.0L1623.0 1073.0L1626.3 1081.3L1642.9 1101.0L1613.8 1068.8L1625.0 1075.0L1632.5 1087.5L1645.0 1097.5L1655.0 1112.5L1662.5 1120.0L1663.8 1132.5L1668.8 1137.5L1662.5 1151.2L1672.5 1167.5L1685.0 1175.0L1695.0 1185.0L1715.0 1191.2L1732.5 1202.5L1750.0 1208.8L1765.0 1215.0L1782.5 1222.5L1797.5 1226.2L1810.0 1223.8L1818.8 1218.8L1830.0 1218.8L1842.5 1225.0L1855.0 1237.5L1867.5 1247.5L1880.0 1253.8L1895.0 1257.5L1910.0 1262.5L1925.0 1265.0L1935.0 1272.5L1947.5 1282.5L1957.5 1292.5L1961.2 1312.5L1970.0 1318.8L1975.0 1312.5L1982.5 1322.5L1990.0 1327.5L1993.8 1335.0L2005.0 1337.5L2020.0 1342.5L2022.5 1350.0L2035.0 1356.2L2045.0 1352.5L2040.0 1342.5L2050.0 1335.0L2060.0 1330.0L2072.5 1337.5L2080.0 1347.5L2079.5 1357.5L2087.0 1370.0L2085.8 1385.0L2083.2 1400.0L2079.5 1415.0L2072.0 1427.5L2067.0 1440.0L2063.2 1460.0L2362.0 1460.0L2362.0 1310.0L2350.0 1307.5L2332.0 1306.2L2324.5 1303.8L2312.0 1302.5L2299.5 1303.8L2284.5 1307.5L2272.0 1312.5L2262.0 1310.0L2244.5 1306.2L2227.0 1305.0L2222.0 1300.0L2212.0 1292.5L2197.0 1292.5L2187.0 1295.0L2175.8 1300.0L2173.2 1291.2L2179.5 1285.0L2177.0 1278.8L2167.0 1280.0L2154.5 1287.5L2137.0 1295.0L2119.5 1302.5L2114.5 1312.5L2104.5 1325.0L2097.0 1335.0L2094.5 1342.5L2087.0 1335.0L2077.0 1332.5L2064.5 1325.0L2052.0 1322.5L2037.0 1328.8L2022.0 1331.2L2004.5 1320.0L1997.5 1312.5L1992.5 1301.2L1990.0 1290.0L1993.8 1272.5L1998.8 1250.0L2000.0 1237.5L1997.5 1232.5L1982.5 1225.0L1962.5 1223.8L1940.0 1225.0L1925.0 1226.2L1916.2 1223.8L1922.5 1212.5L1923.8 1200.0L1927.5 1182.5L1930.0 1170.0L1935.0 1157.5L1945.0 1142.5L1942.5 1133.8L1920.0 1133.8L1900.0 1137.5L1891.2 1145.0L1890.0 1160.0L1882.5 1170.0L1875.0 1181.2L1862.5 1180.0L1845.0 1183.8L1827.5 1187.5L1815.0 1180.0L1805.0 1172.5L1800.0 1160.0L1787.5 1147.5L1782.5 1132.5L1778.8 1115.0L1780.0 1070.0L1789.3 1061.1L1787.0 1043.4L1788.5 1031.6L1800.5 1019.6L1818.6 1009.3L1826.1 1002.5L1838.9 997.3L1857.7 999.0L1869.7 1000.7L1878.8 1005.9L1892.3 1007.6L1905.8 1009.3L1907.3 1000.7L1901.3 990.3L1908.8 986.0L1925.4 986.8L1938.9 986.0L1954.0 985.1L1966.0 997.3L1982.5 991.2L1993.1 997.3L2005.1 1009.3L2005.8 1028.2L2014.1 1046.8L2020.1 1058.5L2030.7 1074.4L2041.2 1073.6L2045.7 1063.6L2046.4 1046.8L2038.2 1019.6L2029.2 997.3L2026.1 979.9L2030.7 962.3L2035.2 955.2L2048.7 944.5L2062.2 930.1L2077.3 922.9L2096.8 908.3L2114.1 898.3L2108.9 875.1L2107.4 866.6L2101.3 860.0L2102.8 846.7L2099.8 829.4L2105.9 819.7L2108.9 837.1L2108.9 856.2L2113.4 848.6L2120.9 839.1L2120.9 831.4L2114.9 819.7L2123.9 828.5L2135.9 811.9L2137.4 799.1L2140.4 796.2L2160.0 791.2L2169.0 787.2L2160.0 788.2L2145.0 787.2L2167.5 782.2L2175.0 780.2L2181.1 778.2L2187.8 777.2L2197.6 775.2L2198.4 769.2L2194.6 767.1L2196.8 772.2L2190.1 772.2L2187.1 764.1L2182.6 761.0L2188.6 754.9L2185.6 750.8L2188.6 745.7L2194.6 734.3L2208.1 728.1L2218.7 720.7L2238.2 714.4L2242.7 709.1L2243.7 703.2L2250.3 699.9L2263.6 694.9L2273.6 689.9L2283.6 686.5L2290.3 693.2L2283.6 699.9L2276.9 706.5L2267.0 713.2L2258.6 718.2L2257.0 723.2L2258.6 733.1L2263.6 738.1L2270.3 734.8L2280.3 728.1L2288.6 723.2L2300.2 716.5L2313.6 709.8L2325.2 703.2L2336.9 696.5L2366.8 688.2L2366.8 676.6L2348.5 676.6L2341.9 679.9L2333.5 683.2L2325.2 683.2L2316.9 679.9L2310.2 676.6L2300.2 679.9L2288.6 683.2L2281.9 676.6L2278.6 668.2L2271.9 663.2L2273.6 656.6L2276.9 646.6L2275.3 644.9L2267.0 646.6L2257.0 638.3L2265.3 638.3L2273.6 634.9L2281.9 629.9L2285.3 623.3L2280.3 617.5L2267.0 614.1L2250.3 615.3L2240.3 619.1L2228.7 625.8L2217.0 634.1L2208.7 641.6L2198.7 653.2L2188.7 663.2L2186.2 660.7L2192.1 651.6L2200.4 638.3L2208.7 626.6L2217.0 618.3L2227.0 610.0L2238.7 601.7L2247.0 593.3L2250.3 588.3L2366.8 588.3L2380.0 340.0L2068.9 352.1L2073.2 372.2L2084.6 383.7L2096.1 400.9L2099.0 421.0L2094.7 441.1L2084.6 458.3L2070.3 469.8L2054.5 478.4L2058.8 492.8L2060.2 510.0L2066.0 524.4L2068.9 538.7L2063.1 553.1L2053.1 560.2L2044.5 563.1L2040.2 555.9L2033.0 545.9L2021.5 533.0L2014.3 522.9L2015.8 515.7L2012.9 498.5L2015.8 481.3L2011.5 468.4L1992.8 465.5L1972.7 462.6L1958.3 452.6L1935.4 444.0L1926.8 431.1L1913.9 421.0L1900.9 413.8L1878.0 411.0L1860.7 412.4L1856.4 398.1L1852.1 380.8L1843.5 369.4L1827.7 352.1ZM2295.3 671.6L2303.6 668.2L2315.2 664.9L2326.9 663.2L2333.5 664.9L2326.9 668.2L2315.2 669.9L2305.2 673.2ZM2281.9 598.3L2291.9 600.0L2305.2 605.0L2316.9 610.0L2321.9 613.3L2313.6 615.0L2300.2 610.0L2288.6 605.0ZM2017.2 520.1L2027.2 518.6L2035.8 524.4L2030.1 528.7L2020.1 527.2ZM1980.8 1127.5L1987.0 1117.5L1999.5 1111.2L2017.0 1108.8L2037.0 1111.2L2052.0 1118.8L2067.0 1121.2L2082.0 1132.5L2094.5 1137.5L2112.0 1142.5L2127.0 1151.2L2134.5 1156.2L2119.5 1157.5L2102.0 1156.2L2087.0 1158.8L2089.5 1152.5L2079.5 1145.0L2072.0 1135.0L2059.5 1130.0L2047.0 1126.2L2032.0 1122.5L2019.5 1116.2L2007.0 1118.8L1994.5 1122.5L1987.0 1127.5ZM2002.0 1130.0L2007.0 1129.5L2007.5 1133.8L2002.5 1134.5ZM2073.2 1186.2L2082.0 1183.8L2094.5 1186.2L2103.2 1190.0L2097.0 1192.5L2087.0 1193.8L2077.0 1191.2ZM2132.0 1182.5L2144.5 1180.0L2157.0 1181.2L2164.5 1185.0L2157.0 1177.5L2149.5 1170.0L2147.0 1163.8L2157.0 1161.2L2172.0 1162.5L2187.0 1161.2L2199.5 1166.2L2212.0 1173.8L2220.8 1178.8L2222.0 1185.0L2212.0 1186.2L2199.5 1185.0L2187.0 1187.5L2179.5 1193.8L2174.5 1195.0L2173.2 1187.5L2162.0 1188.8L2147.0 1187.5L2137.0 1186.2ZM2232.0 1177.5L2249.5 1175.5L2269.5 1177.0L2278.2 1182.5L2274.5 1190.0L2257.0 1195.0L2237.0 1193.8L2230.8 1186.2ZM2073.2 1078.8L2078.2 1076.2L2083.2 1087.5L2084.5 1096.2L2079.5 1091.2ZM2144.5 1140.0L2150.8 1139.5L2150.8 1142.0L2145.0 1142.5ZM2327.0 1303.8L2334.5 1303.0L2335.0 1312.0L2328.2 1312.5ZM1999.1 686.6L2009.6 685.5L2020.1 685.5L2023.1 693.1L2017.1 694.2L2008.1 690.9L1999.1 688.8Z" fill="#f3f3f3" stroke="#f3f3f3" stroke-width="5.5" stroke-linejoin="round"/>
<path d="M813.3 360.3L943.9 360.3L943.9 366.2L939.8 371.7L936.4 372.0L932.8 377.0L930.3 385.3L919.5 389.1L914.5 396.6L910.6 396.1L907.8 401.6L898.2 406.6L899.5 411.6L896.5 416.6L893.2 416.1L887.3 422.8L883.5 421.1L881.5 426.9L876.5 426.6L874.0 428.6L876.5 430.6L869.0 431.6L867.0 434.9L870.4 437.7L867.4 442.7L864.5 442.7L863.2 445.2L856.6 447.7L854.1 447.2L850.4 453.9L849.6 449.4L847.4 448.2L841.6 453.5L838.2 454.4L837.4 456.9L834.1 455.5L833.2 458.2L829.1 457.7L825.8 461.0L821.9 461.0L823.6 455.2L821.3 454.4L817.4 462.7L813.6 466.9L809.9 469.9L807.0 469.4L805.0 463.5L802.5 463.5L800.8 466.9L796.6 468.2L797.5 472.7L791.6 480.5L783.3 480.5L777.5 485.5L772.5 486.0L768.3 484.3L768.3 481.0L774.2 478.5L776.7 474.4L780.3 473.9L785.8 470.5L791.6 470.2L793.6 473.9L795.0 473.2L795.0 468.2L799.1 466.9L804.1 460.2L809.1 453.5L816.6 447.7L824.9 446.9L829.9 446.1L830.8 450.2L833.2 451.0L834.6 448.6L839.6 449.4L836.6 444.4L838.2 437.7L847.4 429.1L854.9 426.6L859.9 421.9L864.0 423.3L864.5 416.6L868.2 411.6L872.9 408.9L877.9 402.4L880.7 402.8L879.0 396.6L881.2 385.3L883.2 383.6L881.9 376.1L889.5 366.2L888.5 362.8L886.5 365.0L871.2 371.2L866.5 366.2L865.2 362.8L861.2 368.7L862.9 375.3L861.5 377.0L858.2 377.0L849.9 363.3L845.7 366.7L840.7 362.8L832.4 362.8L819.9 372.3L815.3 370.3L818.6 367.0L817.4 362.8ZM924.5 405.6L930.6 399.9L933.9 399.9L936.1 402.8L937.3 398.3L936.1 394.5L938.1 392.8L941.4 395.0L943.1 392.0L946.4 392.8L948.9 390.3L944.4 387.3L952.3 380.6L956.1 372.3L958.1 373.7L957.3 378.6L962.2 379.0L963.9 382.0L962.2 384.5L960.6 383.6L958.9 386.1L955.6 386.6L952.3 393.6L958.1 393.3L956.8 399.0L961.1 401.9L959.7 404.9L953.9 403.9L953.1 408.6L949.8 408.3L948.1 411.9L949.8 413.6L945.6 416.1L943.1 413.3L941.4 414.9L940.6 418.6L937.3 422.3L933.9 422.8L936.4 417.8L933.9 416.9L930.6 419.9L927.8 416.9ZM832.4 461.5L839.1 462.7L835.7 466.5L831.9 465.2ZM842.9 467.2L846.2 466.9L843.2 469.9ZM930.1 429.1L934.4 428.6L934.8 430.6L930.1 430.6ZM1249.9 493.5L1256.5 494.3L1266.5 495.2L1273.2 493.5L1270.7 500.1L1269.0 508.5L1269.8 518.5L1273.2 528.4L1276.5 538.4L1279.8 544.3L1276.5 544.3L1269.8 535.1L1261.5 525.1L1254.9 515.1L1249.9 505.1L1247.9 497.7ZM1175.0 360.3L1183.3 373.7L1193.3 381.1L1194.9 392.0L1204.9 403.6L1209.1 413.6L1215.7 420.3L1223.2 435.2L1231.6 441.9L1238.2 455.2L1244.9 465.2L1251.5 476.8L1264.8 478.2L1274.0 476.8L1281.5 478.5L1283.2 488.5L1288.1 495.2L1285.2 500.1L1288.1 508.5L1296.5 516.8L1305.6 521.8L1309.8 531.8L1318.1 540.9L1323.1 551.7L1326.4 560.1L1328.9 568.4L1321.4 576.7L1326.4 590.0L1338.1 600.0L1349.7 611.7L1362.2 623.0L1361.7 616.6L1368.3 623.3L1376.6 633.3L1383.3 649.9L1385.0 683.2L1383.3 716.5L1380.0 741.5L1376.6 759.8L1377.5 768.1L1383.3 773.1L1381.6 783.1L1380.0 799.7L1389.9 811.4L1391.6 821.4L1399.9 838.0L1408.3 849.7L1410.8 861.0L1401.6 846.7L1409.1 850.0L1409.9 865.0L1418.2 871.6L1419.1 879.9L1433.2 894.9L1436.6 911.6L1453.2 916.6L1468.2 921.6L1471.5 926.6L1483.2 934.9L1487.3 946.5L1494.8 959.8L1504.8 979.8L1510.6 994.8L1523.1 1003.1L1535.6 1018.1L1533.1 1029.7L1523.1 1031.4L1531.4 1041.4L1546.4 1051.4L1563.0 1061.4L1564.7 1073.0L1569.7 1084.7L1586.4 1101.0L1563.8 1077.5L1575.0 1087.5L1587.5 1097.5L1595.0 1110.0L1603.8 1106.2L1600.0 1095.0L1592.5 1090.0L1585.0 1082.5L1582.5 1072.5L1575.0 1060.0L1603.0 1101.0L1591.3 1089.7L1586.4 1079.7L1578.0 1066.4L1574.7 1054.7L1566.4 1043.1L1558.1 1031.4L1554.7 1019.8L1548.1 1006.4L1541.4 1001.5L1528.1 991.5L1526.4 981.5L1523.1 973.2L1523.1 964.0L1526.4 962.3L1530.6 964.8L1538.1 964.5L1541.4 969.0L1549.7 972.3L1550.6 981.5L1556.4 991.5L1562.2 1004.8L1559.7 1011.4L1564.7 1011.4L1583.0 1029.7L1588.0 1031.4L1589.7 1038.1L1604.7 1053.0L1608.8 1054.7L1606.3 1063.0L1623.0 1073.0L1626.3 1081.3L1642.9 1101.0L1613.8 1068.8L1625.0 1075.0L1632.5 1087.5L1645.0 1097.5L1655.0 1112.5L1662.5 1120.0L1663.8 1132.5L1668.8 1137.5L1662.5 1151.2L1672.5 1167.5L1685.0 1175.0L1695.0 1185.0L1715.0 1191.2L1732.5 1202.5L1750.0 1208.8L1765.0 1215.0L1782.5 1222.5L1797.5 1226.2L1810.0 1223.8L1818.8 1218.8L1830.0 1218.8L1842.5 1225.0L1855.0 1237.5L1867.5 1247.5L1880.0 1253.8L1895.0 1257.5L1910.0 1262.5L1925.0 1265.0L1935.0 1272.5L1947.5 1282.5L1957.5 1292.5L1961.2 1312.5L1970.0 1318.8L1975.0 1312.5L1982.5 1322.5L1990.0 1327.5L1993.8 1335.0L2005.0 1337.5L2020.0 1342.5L2022.5 1350.0L2035.0 1356.2L2045.0 1352.5L2040.0 1342.5L2050.0 1335.0L2060.0 1330.0L2072.5 1337.5L2080.0 1347.5L2079.5 1357.5L2087.0 1370.0L2085.8 1385.0L2083.2 1400.0L2079.5 1415.0L2072.0 1427.5L2067.0 1440.0L2063.2 1460.0L2362.0 1460.0L2362.0 1310.0L2350.0 1307.5L2332.0 1306.2L2324.5 1303.8L2312.0 1302.5L2299.5 1303.8L2284.5 1307.5L2272.0 1312.5L2262.0 1310.0L2244.5 1306.2L2227.0 1305.0L2222.0 1300.0L2212.0 1292.5L2197.0 1292.5L2187.0 1295.0L2175.8 1300.0L2173.2 1291.2L2179.5 1285.0L2177.0 1278.8L2167.0 1280.0L2154.5 1287.5L2137.0 1295.0L2119.5 1302.5L2114.5 1312.5L2104.5 1325.0L2097.0 1335.0L2094.5 1342.5L2087.0 1335.0L2077.0 1332.5L2064.5 1325.0L2052.0 1322.5L2037.0 1328.8L2022.0 1331.2L2004.5 1320.0L1997.5 1312.5L1992.5 1301.2L1990.0 1290.0L1993.8 1272.5L1998.8 1250.0L2000.0 1237.5L1997.5 1232.5L1982.5 1225.0L1962.5 1223.8L1940.0 1225.0L1925.0 1226.2L1916.2 1223.8L1922.5 1212.5L1923.8 1200.0L1927.5 1182.5L1930.0 1170.0L1935.0 1157.5L1945.0 1142.5L1942.5 1133.8L1920.0 1133.8L1900.0 1137.5L1891.2 1145.0L1890.0 1160.0L1882.5 1170.0L1875.0 1181.2L1862.5 1180.0L1845.0 1183.8L1827.5 1187.5L1815.0 1180.0L1805.0 1172.5L1800.0 1160.0L1787.5 1147.5L1782.5 1132.5L1778.8 1115.0L1780.0 1070.0L1789.3 1061.1L1787.0 1043.4L1788.5 1031.6L1800.5 1019.6L1818.6 1009.3L1826.1 1002.5L1838.9 997.3L1857.7 999.0L1869.7 1000.7L1878.8 1005.9L1892.3 1007.6L1905.8 1009.3L1907.3 1000.7L1901.3 990.3L1908.8 986.0L1925.4 986.8L1938.9 986.0L1954.0 985.1L1966.0 997.3L1982.5 991.2L1993.1 997.3L2005.1 1009.3L2005.8 1028.2L2014.1 1046.8L2020.1 1058.5L2030.7 1074.4L2041.2 1073.6L2045.7 1063.6L2046.4 1046.8L2038.2 1019.6L2029.2 997.3L2026.1 979.9L2030.7 962.3L2035.2 955.2L2048.7 944.5L2062.2 930.1L2077.3 922.9L2096.8 908.3L2114.1 898.3L2108.9 875.1L2107.4 866.6L2101.3 860.0L2102.8 846.7L2099.8 829.4L2105.9 819.7L2108.9 837.1L2108.9 856.2L2113.4 848.6L2120.9 839.1L2120.9 831.4L2114.9 819.7L2123.9 828.5L2135.9 811.9L2137.4 799.1L2140.4 796.2L2160.0 791.2L2169.0 787.2L2160.0 788.2L2145.0 787.2L2167.5 782.2L2175.0 780.2L2181.1 778.2L2187.8 777.2L2197.6 775.2L2198.4 769.2L2194.6 767.1L2196.8 772.2L2190.1 772.2L2187.1 764.1L2182.6 761.0L2188.6 754.9L2185.6 750.8L2188.6 745.7L2194.6 734.3L2208.1 728.1L2218.7 720.7L2238.2 714.4L2242.7 709.1L2243.7 703.2L2250.3 699.9L2263.6 694.9L2273.6 689.9L2283.6 686.5L2290.3 693.2L2283.6 699.9L2276.9 706.5L2267.0 713.2L2258.6 718.2L2257.0 723.2L2258.6 733.1L2263.6 738.1L2270.3 734.8L2280.3 728.1L2288.6 723.2L2300.2 716.5L2313.6 709.8L2325.2 703.2L2336.9 696.5L2366.8 688.2L2366.8 676.6L2348.5 676.6L2341.9 679.9L2333.5 683.2L2325.2 683.2L2316.9 679.9L2310.2 676.6L2300.2 679.9L2288.6 683.2L2281.9 676.6L2278.6 668.2L2271.9 663.2L2273.6 656.6L2276.9 646.6L2275.3 644.9L2267.0 646.6L2257.0 638.3L2265.3 638.3L2273.6 634.9L2281.9 629.9L2285.3 623.3L2280.3 617.5L2267.0 614.1L2250.3 615.3L2240.3 619.1L2228.7 625.8L2217.0 634.1L2208.7 641.6L2198.7 653.2L2188.7 663.2L2186.2 660.7L2192.1 651.6L2200.4 638.3L2208.7 626.6L2217.0 618.3L2227.0 610.0L2238.7 601.7L2247.0 593.3L2250.3 588.3L2366.8 588.3L2380.0 340.0L2068.9 352.1L2073.2 372.2L2084.6 383.7L2096.1 400.9L2099.0 421.0L2094.7 441.1L2084.6 458.3L2070.3 469.8L2054.5 478.4L2058.8 492.8L2060.2 510.0L2066.0 524.4L2068.9 538.7L2063.1 553.1L2053.1 560.2L2044.5 563.1L2040.2 555.9L2033.0 545.9L2021.5 533.0L2014.3 522.9L2015.8 515.7L2012.9 498.5L2015.8 481.3L2011.5 468.4L1992.8 465.5L1972.7 462.6L1958.3 452.6L1935.4 444.0L1926.8 431.1L1913.9 421.0L1900.9 413.8L1878.0 411.0L1860.7 412.4L1856.4 398.1L1852.1 380.8L1843.5 369.4L1827.7 352.1ZM2295.3 671.6L2303.6 668.2L2315.2 664.9L2326.9 663.2L2333.5 664.9L2326.9 668.2L2315.2 669.9L2305.2 673.2ZM2281.9 598.3L2291.9 600.0L2305.2 605.0L2316.9 610.0L2321.9 613.3L2313.6 615.0L2300.2 610.0L2288.6 605.0ZM2017.2 520.1L2027.2 518.6L2035.8 524.4L2030.1 528.7L2020.1 527.2ZM1980.8 1127.5L1987.0 1117.5L1999.5 1111.2L2017.0 1108.8L2037.0 1111.2L2052.0 1118.8L2067.0 1121.2L2082.0 1132.5L2094.5 1137.5L2112.0 1142.5L2127.0 1151.2L2134.5 1156.2L2119.5 1157.5L2102.0 1156.2L2087.0 1158.8L2089.5 1152.5L2079.5 1145.0L2072.0 1135.0L2059.5 1130.0L2047.0 1126.2L2032.0 1122.5L2019.5 1116.2L2007.0 1118.8L1994.5 1122.5L1987.0 1127.5ZM2002.0 1130.0L2007.0 1129.5L2007.5 1133.8L2002.5 1134.5ZM2073.2 1186.2L2082.0 1183.8L2094.5 1186.2L2103.2 1190.0L2097.0 1192.5L2087.0 1193.8L2077.0 1191.2ZM2132.0 1182.5L2144.5 1180.0L2157.0 1181.2L2164.5 1185.0L2157.0 1177.5L2149.5 1170.0L2147.0 1163.8L2157.0 1161.2L2172.0 1162.5L2187.0 1161.2L2199.5 1166.2L2212.0 1173.8L2220.8 1178.8L2222.0 1185.0L2212.0 1186.2L2199.5 1185.0L2187.0 1187.5L2179.5 1193.8L2174.5 1195.0L2173.2 1187.5L2162.0 1188.8L2147.0 1187.5L2137.0 1186.2ZM2232.0 1177.5L2249.5 1175.5L2269.5 1177.0L2278.2 1182.5L2274.5 1190.0L2257.0 1195.0L2237.0 1193.8L2230.8 1186.2ZM2073.2 1078.8L2078.2 1076.2L2083.2 1087.5L2084.5 1096.2L2079.5 1091.2ZM2144.5 1140.0L2150.8 1139.5L2150.8 1142.0L2145.0 1142.5ZM2327.0 1303.8L2334.5 1303.0L2335.0 1312.0L2328.2 1312.5ZM1999.1 686.6L2009.6 685.5L2020.1 685.5L2023.1 693.1L2017.1 694.2L2008.1 690.9L1999.1 688.8Z" fill="url(#lg)" stroke="#e8e8e8" stroke-width="1" stroke-linejoin="round"/>
<path d="M1368.0 590.9L1373.0 598.4L1383.0 606.7L1391.3 615.0L1396.3 611.7L1394.7 618.3L1388.0 616.7L1378.0 608.3L1369.7 598.4ZM1321.4 576.7L1331.4 572.1L1341.4 576.7L1347.2 580.0L1344.7 583.4L1334.8 580.0ZM1197.4 390.3L1204.9 382.0L1216.6 380.3L1221.6 390.3L1224.9 405.3L1233.2 418.6L1243.2 425.2L1253.2 428.6L1259.9 431.9L1256.5 435.2L1243.2 431.9L1233.2 431.9L1228.2 416.9L1223.2 406.9L1216.6 392.0L1206.6 387.0ZM1216.6 365.3L1223.2 378.6L1236.6 395.3L1243.2 405.3L1236.6 410.3L1231.6 398.6L1221.6 383.6L1213.2 365.3ZM1264.8 465.2L1273.2 464.4L1279.0 466.0L1283.2 478.5L1279.8 481.8L1273.2 476.8L1266.5 476.8ZM1236.6 435.2L1249.9 440.2L1259.9 450.2L1266.5 463.5L1263.2 468.5L1254.9 455.2L1243.2 445.2Z" fill="#f1f1f1"/>
<path d="M890.7 390.0L894.0 386.6L904.5 391.6L905.7 396.1L902.3 399.9L901.5 396.1L894.8 394.0ZM1958.8 1283.8L1965.0 1282.5L1973.8 1292.5L1977.5 1297.5L1970.0 1296.2L1961.2 1290.0ZM2167.0 1315.0L2173.2 1306.2L2179.5 1310.0L2182.0 1320.0L2175.8 1328.8L2169.5 1322.5ZM1865.2 669.2L1883.3 663.7L1889.3 671.4L1899.8 667.0L1913.3 662.6L1920.9 654.9L1928.4 652.6L1923.9 658.2L1920.1 663.7L1932.9 665.9L1935.9 673.6L1947.9 674.7L1958.5 669.2L1972.0 668.1L1973.5 673.6L1979.5 673.6L1978.0 664.8L1975.8 651.5L1972.0 641.5L1958.5 640.4L1952.4 624.5L1941.9 623.4L1925.4 619.9L1917.9 629.1L1908.8 631.3L1907.3 638.1L1902.8 640.4L1890.8 647.1L1878.8 656.0ZM1976.5 688.8L1987.0 684.5L1994.6 682.3L2002.1 680.1L2017.1 681.2L2024.6 684.5L2032.2 685.5L2036.7 686.6L2042.7 695.2L2047.2 703.8L2048.7 710.2L2045.7 716.5L2038.2 714.4L2032.2 708.0L2027.6 700.6L2023.1 708.0L2021.6 718.6L2020.9 731.2L2021.6 741.6L2015.6 745.7L2011.1 747.7L2009.6 739.5L2008.1 729.1L2002.1 726.0L1996.1 729.1L1988.5 734.3L1991.6 727.0L1997.6 720.7L1997.6 708.0L1995.3 699.5L1985.5 694.2ZM1937.4 775.2L1944.9 772.2L1952.4 760.0L1954.0 747.7L1949.4 733.3L1950.2 722.8L1954.0 712.3L1963.0 705.9L1966.0 699.5L1972.0 690.9L1975.0 688.8L1964.5 683.4L1952.4 686.6L1944.9 688.8L1941.9 690.9L1932.9 703.8L1926.9 715.5L1934.4 709.1L1941.9 699.5L1936.7 710.2L1934.4 718.6L1931.4 729.1L1928.4 743.6L1929.9 755.9L1929.9 764.1L1932.9 771.2L1934.4 775.2ZM1994.6 774.2L2000.6 767.1L2009.6 768.1L2018.6 763.1L2027.6 754.9L2039.7 756.6L2050.2 750.8L2062.2 750.8L2060.7 753.9L2050.2 763.1L2039.7 768.5L2027.6 773.2L2021.6 778.2L2009.6 780.2L2002.1 779.2ZM2050.2 741.6L2056.2 734.7L2069.8 729.1L2084.8 727.0L2092.3 729.1L2099.8 722.8L2104.4 729.1L2104.4 736.4L2095.3 741.6L2083.3 742.6L2069.8 740.1L2060.7 742.6ZM2299.5 355.0L2304.2 369.1L2301.9 376.1L2308.9 378.5L2308.9 385.5L2317.1 391.4L2323.0 396.1L2319.5 404.3L2323.0 410.2L2327.7 416.0L2327.7 425.4L2324.2 437.2L2330.0 443.0L2338.3 447.7L2341.8 453.6L2344.1 460.6L2341.8 465.3L2370.0 460.6L2370.0 355.0ZM2220.9 355.0L2223.2 370.3L2230.3 377.3L2237.3 380.2L2245.5 375.0L2252.6 366.7L2259.6 355.0Z" fill="#fff" stroke="#f3f3f3" stroke-width="2.5" stroke-linejoin="round"/>
<path d="M2197.4 365.6L2203.3 362.0L2205.6 367.9L2200.9 370.3ZM1758.8 505.7L1767.5 501.4L1777.5 504.3L1786.1 521.5L1794.7 541.6L1800.5 561.7L1801.9 578.9L1797.6 587.5L1791.9 581.8L1786.1 561.7L1777.5 544.5L1768.9 533.0L1761.7 521.5ZM1731.6 515.7L1740.2 508.6L1748.8 515.7L1754.5 520.1L1747.4 527.2L1743.1 538.7L1750.2 550.2L1760.3 555.9L1767.5 573.2L1776.1 584.6L1770.3 588.9L1761.7 578.9L1754.5 561.7L1745.9 553.1L1738.8 538.7L1734.4 527.2ZM1911.0 596.1L1918.2 588.9L1926.8 594.7L1925.3 607.6L1915.3 609.0ZM1702.9 395.2L1711.5 389.4L1712.9 406.7L1705.7 426.8L1700.0 432.5ZM1753.1 423.9L1768.9 400.9L1773.2 403.8L1761.7 425.3ZM1826.3 481.3L1840.7 475.6L1842.1 479.9L1829.2 485.6ZM2081.8 504.3L2101.9 492.8L2110.5 497.1L2130.6 498.5L2147.8 492.8L2167.9 484.2L2147.8 501.4L2124.8 507.1L2101.9 510.0L2084.6 508.6ZM2193.7 478.4L2211.0 475.6L2216.7 489.9L2225.3 515.7L2219.6 504.3L2205.2 495.7ZM2265.5 492.8L2285.6 484.2L2294.2 495.7L2277.0 501.4ZM2136.3 578.9L2153.5 561.7L2156.4 566.0L2140.6 584.6ZM2146.4 466.9L2163.6 465.5L2153.5 472.7ZM2122.0 435.4L2137.8 441.1L2130.6 445.4ZM1849.3 581.8L1857.9 584.6L1869.4 580.3L1863.6 590.4L1855.0 588.9ZM1987.1 553.1L1994.2 550.2L1998.5 561.7L1989.9 566.0ZM2116.2 626.3L2126.3 622.0L2136.3 629.1L2124.8 633.4ZM2185.1 604.7L2193.7 597.6L2200.9 607.6L2190.9 610.5ZM2153.5 581.8L2162.2 577.5L2170.8 584.6L2159.3 587.5ZM2117.2 629.9L2125.5 622.5L2133.8 629.1L2135.5 634.1L2125.5 631.6ZM2162.1 625.0L2167.1 623.3L2172.1 627.5L2168.8 630.8ZM2183.7 608.3L2192.1 598.3L2200.4 610.0L2190.4 606.6Z" fill="#f5f5f5" stroke="#eeeeee" stroke-width=".8" stroke-linejoin="round"/>
<path d="M1999.1 686.6L2009.6 685.5L2020.1 685.5L2023.1 693.1L2017.1 694.2L2008.1 690.9L1999.1 688.8Z" fill="#e6e6e6"/></g>
<g fill="none" stroke="#b4b4b4" stroke-width="1.1"><path d="M1445.8 361.2L1445.8 501.0L1447.9 506.8L1454.6 514.3L1461.3 516.8L1466.2 521.8L1471.2 530.1L1473.7 536.8L1478.7 535.9L1481.2 541.8L1486.2 543.4L1492.0 553.4L1495.4 551.7L1501.2 560.9L1509.5 570.1L1516.2 580.0L1521.2 581.7L1525.3 590.0L1526.5 601.7L1531.2 613.3L1534.5 617.5"/><path d="M1433.0 617.5L1900.0 617.5"/><path d="M1596.0 355.0L1596.0 617.5"/><path d="M1716.4 353.6L1716.4 441.1L1725.8 610.5"/><path d="M1913.0 421.6L1842.1 502.8L1819.1 526.7L1819.1 607.6"/><path d="M2055.1 559.4L2055.1 652.1L2057.4 662.1L2064.6 673.6L2081.8 679.4L2093.3 688.0L2101.9 695.2L2113.4 696.6L2130.6 692.3L2132.0 700.9"/><path d="M2285.6 360.7L2295.6 366.5L2282.7 383.7L2292.8 398.1L2288.5 426.8L2295.6 444.0L2297.1 461.2L2291.3 481.3L2279.8 475.6L2262.6 469.8L2246.8 462.6L2242.5 475.6L2232.5 484.2L2231.0 498.5L2242.5 515.7L2239.7 527.2L2252.6 530.1L2251.1 541.6L2262.6 547.3L2277.0 555.9L2285.6 541.6L2287.0 530.1L2295.6 527.2L2291.3 545.9L2351.6 545.9"/><path d="M1413.2 768.4L1516.4 768.4"/><path d="M1445.4 768.4L1445.4 809.7"/><path d="M1490.3 759.8L1490.3 768.4"/><path d="M1535.1 773.1L1535.1 861.0"/><path d="M1617.1 788.4L1712.8 788.4"/><path d="M1610.5 788.4L1610.5 861.0"/><path d="M1596.3 600.0L1596.3 613.3"/><path d="M1725.3 600.0L1726.2 611.7"/><path d="M1524.8 600.0L1528.1 608.3L1533.9 616.6"/><path d="M1486.5 864.6L1505.6 882.4L1523.1 898.3"/><path d="M1527.3 896.6L1526.4 903.2L1530.6 909.9L1533.9 916.6L1529.8 921.6L1528.9 928.2L1525.6 934.9L1528.9 940.7L1526.4 944.5"/><path d="M1535.1 840.0L1535.1 881.6L1532.3 884.1"/><path d="M1610.5 840.0L1610.5 969.0"/><path d="M1581.4 865.8L1611.3 865.8"/></g>
<g fill="none" stroke="#8d8d8d" stroke-width="1.3"><path d="M1229.9 363.3L1236.6 367.8L1244.0 377.0L1249.9 389.5L1256.5 401.1L1261.5 411.1L1260.7 414.4L1264.8 416.1L1264.8 421.1L1268.2 424.4L1268.5 427.7L1272.3 427.7L1281.5 433.6L1288.1 437.7L1291.5 441.6L1295.1 442.7L1295.6 446.9L1293.5 451.9L1294.8 458.5L1296.1 463.5L1291.5 471.9L1285.7 476.8"/><path d="M1850.7 626.3L1860.7 632.0L1872.2 634.9"/><path d="M1902.4 640.6L1921.0 633.4L1964.1 656.4L1987.1 675.1L1992.8 682.2L2008.6 698.0L2014.3 725.3"/><path d="M2193.4 679.9L2198.7 666.6L2205.4 656.6L2210.4 652.4L2212.9 658.2L2222.0 654.9L2225.3 654.9L2232.0 661.6"/><path d="M2212.9 655.7L2222.0 651.6L2222.8 642.4L2228.7 639.9L2237.0 643.3L2246.2 640.3"/><path d="M1990.7 681.5L1994.8 684.0L1995.7 686.5"/><path d="M2000.6 693.2L2009.8 699.9L2014.0 723.2"/><path d="M1488.1 947.9L1523.1 944.5L1523.9 948.2L1579.7 969.0L1623.8 969.0L1623.0 966.5"/><path d="M1689.5 1006.4L1699.5 1010.6"/><path d="M1863.8 1245.0L1865.0 1232.5L1870.0 1221.2L1891.2 1220.0L1890.0 1213.8L1882.5 1206.2L1876.2 1202.5L1882.5 1201.2L1882.5 1193.8L1910.0 1192.5"/><path d="M1910.0 1192.5L1908.8 1223.8L1913.8 1223.8"/><path d="M1910.0 1192.5L1916.2 1183.8L1922.5 1182.0"/><path d="M1923.8 1226.2L1908.8 1238.8L1907.5 1245.0L1900.0 1251.2L1895.0 1257.5"/><path d="M1907.5 1245.0L1916.2 1252.5L1925.0 1253.8L1930.0 1255.0L1931.2 1262.5"/><path d="M1937.5 1268.8L1943.8 1266.2L1946.2 1257.5L1957.5 1252.5L1967.5 1250.0L1972.5 1242.5L1987.5 1240.0L2000.0 1237.5"/><path d="M1961.2 1296.2L1972.5 1300.0L1985.0 1302.5L1992.5 1301.2"/><path d="M2008.8 1321.2L2003.8 1322.5L2005.0 1332.5L2002.5 1343.8"/><path d="M2087.0 1335.0L2090.8 1342.5L2084.5 1350.0L2079.5 1357.5"/><path d="M2177.0 1286.2L2167.0 1290.0L2159.5 1300.0L2153.2 1312.5L2148.2 1325.0L2154.5 1328.8L2159.5 1340.0L2160.8 1352.5L2167.0 1358.8L2187.0 1360.0L2197.0 1361.2L2209.5 1372.5L2222.0 1372.5L2235.8 1371.2L2234.5 1382.5L2230.8 1395.0L2232.0 1410.0L2237.0 1420.0L2242.0 1437.5L2245.8 1449.5"/><path d="M2349.5 1335.0L2339.5 1352.5L2334.5 1365.0L2328.2 1376.2L2337.0 1387.5L2348.2 1387.5"/><path d="M2275.8 1401.2L2284.5 1407.5L2297.0 1405.0L2307.0 1408.8L2317.0 1402.5L2332.0 1397.5L2339.5 1392.5"/><path d="M2275.8 1401.2L2284.5 1415.0L2283.2 1435.0L2277.0 1449.5"/><path d="M2172.0 1163.0L2173.2 1172.5L2168.2 1180.0L2172.0 1190.0"/></g>
<text x="1722.5" y="1113" text-anchor="middle" font-family="DejaVu Sans,Liberation Sans,sans-serif" font-size="22.5" fill="#8c8c8c" stroke="#f7f7f7" stroke-width="3.5" paint-order="stroke" stroke-linejoin="round">Mexico</text>
<text x="2279.5" y="1362" text-anchor="middle" font-family="DejaVu Sans,Liberation Sans,sans-serif" font-size="22.5" fill="#8c8c8c" stroke="#f7f7f7" stroke-width="3.5" paint-order="stroke" stroke-linejoin="round">Venezuela</text>
<text x="2144" y="1409.5" text-anchor="middle" font-family="DejaVu Sans,Liberation Sans,sans-serif" font-size="22.5" fill="#8c8c8c" stroke="#f7f7f7" stroke-width="3.5" paint-order="stroke" stroke-linejoin="round">Colombia</text>
<path d="M2228.6 1184.0L2228.5 1184.2L2228.5 1184.4L2228.3 1186.3L2228.3 1186.5L2228.3 1186.7L2228.5 1188.6L2228.5 1188.8L2228.6 1189.0L2228.5 1189.1L2228.5 1189.3L2228.3 1191.2L2228.3 1191.4L2228.3 1191.6L2228.5 1193.5L2228.5 1193.7L2228.6 1193.9L2229.1 1195.7L2229.2 1195.9L2229.3 1196.1L2230.2 1197.7L2230.3 1197.9L2230.4 1198.1L2231.6 1199.5L2231.7 1199.7L2231.9 1199.8L2233.3 1201.0L2233.5 1201.1L2233.7 1201.2L2235.3 1202.1L2235.5 1202.2L2235.7 1202.3L2237.5 1202.8L2237.7 1202.9L2237.9 1202.9L2239.8 1203.1L2240.0 1203.1L2240.2 1203.1L2242.1 1202.9L2242.3 1202.9L2242.3 1202.9L2242.5 1203.0L2242.7 1203.1L2244.5 1203.6L2244.7 1203.7L2244.9 1203.7L2246.8 1203.9L2247.0 1203.9L2247.2 1203.9L2249.1 1203.7L2249.3 1203.7L2249.5 1203.6L2251.3 1203.1L2253.1 1202.9L2253.3 1202.9L2253.5 1202.8L2253.8 1202.7L2254.0 1202.8L2254.2 1202.9L2254.4 1202.9L2256.3 1203.1L2256.5 1203.1L2256.7 1203.1L2258.6 1202.9L2258.8 1202.9L2259.0 1202.8L2259.2 1202.7L2259.5 1202.8L2259.7 1202.9L2259.9 1202.9L2261.8 1203.1L2262.0 1203.1L2262.2 1203.1L2264.1 1202.9L2264.3 1202.9L2264.5 1202.8L2266.3 1202.3L2266.5 1202.2L2266.7 1202.1L2268.3 1201.2L2268.5 1201.1L2268.7 1201.0L2269.3 1200.5L2269.5 1200.4L2271.3 1199.9L2271.5 1199.8L2271.7 1199.7L2273.3 1198.8L2273.5 1198.7L2273.7 1198.6L2273.7 1198.5L2274.3 1198.4L2274.5 1198.3L2274.7 1198.2L2276.3 1197.3L2276.5 1197.2L2276.7 1197.1L2278.1 1195.9L2278.3 1195.8L2278.4 1195.6L2279.6 1194.2L2279.7 1194.0L2279.8 1193.8L2280.7 1192.2L2280.8 1192.0L2280.9 1191.8L2281.4 1190.0L2281.5 1189.8L2281.5 1189.8L2282.0 1188.0L2282.1 1187.8L2282.1 1187.6L2282.3 1185.7L2282.3 1185.5L2282.3 1185.3L2282.1 1183.4L2282.1 1183.2L2282.0 1183.0L2281.5 1181.2L2281.4 1181.0L2281.3 1180.8L2280.4 1179.2L2280.3 1179.0L2280.2 1178.8L2279.0 1177.4L2278.9 1177.2L2278.7 1177.1L2277.3 1175.9L2277.1 1175.8L2276.9 1175.7L2275.3 1174.8L2275.1 1174.7L2274.9 1174.6L2274.4 1174.5L2273.7 1173.9L2273.5 1173.8L2273.3 1173.7L2271.7 1172.8L2271.5 1172.7L2271.3 1172.6L2269.5 1172.1L2269.3 1172.0L2269.1 1172.0L2268.6 1171.9L2268.5 1171.9L2268.3 1171.8L2266.7 1170.9L2266.5 1170.8L2266.3 1170.7L2264.5 1170.2L2264.3 1170.1L2264.1 1170.1L2262.2 1169.9L2262.0 1169.9L2261.8 1169.9L2259.9 1170.1L2259.7 1170.1L2259.5 1170.2L2259.2 1170.3L2259.0 1170.2L2258.8 1170.1L2258.6 1170.1L2256.7 1169.9L2256.5 1169.9L2256.3 1169.9L2254.4 1170.1L2254.2 1170.1L2254.0 1170.2L2253.8 1170.3L2253.5 1170.2L2253.3 1170.1L2253.1 1170.1L2251.2 1169.9L2251.0 1169.9L2250.8 1169.9L2248.9 1170.1L2248.7 1170.1L2248.5 1170.2L2248.2 1170.3L2248.0 1170.2L2247.8 1170.1L2247.6 1170.1L2245.7 1169.9L2245.5 1169.9L2245.3 1169.9L2243.4 1170.1L2243.2 1170.1L2243.0 1170.2L2242.8 1170.3L2242.5 1170.2L2242.3 1170.1L2242.1 1170.1L2240.2 1169.9L2240.0 1169.9L2239.8 1169.9L2237.9 1170.1L2237.7 1170.1L2237.5 1170.2L2235.7 1170.7L2235.5 1170.8L2235.3 1170.9L2233.7 1171.8L2233.5 1171.9L2233.3 1172.0L2231.9 1173.2L2231.7 1173.3L2231.6 1173.5L2230.4 1174.9L2230.3 1175.1L2230.2 1175.3L2229.3 1176.9L2229.2 1177.1L2229.1 1177.3L2228.6 1179.1L2228.5 1179.3L2228.5 1179.5L2228.3 1181.4L2228.3 1181.6L2228.3 1181.8L2228.5 1183.7L2228.5 1183.9ZM1373.5 749.7L1373.5 749.7L1373.4 749.8L1373.2 750.0L1372.0 751.5L1371.9 751.6L1371.8 751.8L1370.9 753.5L1370.8 753.6L1370.7 753.8L1370.2 755.6L1370.1 755.8L1370.1 756.0L1369.9 757.9L1369.9 758.1L1369.9 758.3L1370.1 760.2L1370.1 760.4L1370.2 760.6L1370.7 762.4L1370.8 762.6L1370.9 762.8L1371.8 764.4L1371.9 764.6L1372.0 764.8L1373.2 766.2L1373.4 766.4L1373.5 766.5L1375.0 767.7L1375.1 767.9L1375.3 768.0L1377.0 768.8L1377.1 768.9L1377.3 769.0L1379.1 769.5L1379.3 769.6L1379.5 769.6L1381.4 769.8L1381.6 769.8L1381.8 769.8L1383.7 769.6L1383.9 769.6L1384.1 769.5L1384.9 769.3L1384.9 769.4L1385.1 769.5L1385.3 769.6L1386.9 770.5L1387.1 770.6L1387.3 770.7L1389.1 771.2L1389.3 771.3L1389.5 771.3L1391.4 771.5L1391.6 771.5L1391.8 771.5L1393.7 771.3L1393.9 771.3L1394.1 771.2L1395.9 770.7L1396.1 770.6L1396.3 770.5L1397.9 769.6L1398.1 769.5L1398.3 769.4L1398.8 768.9L1399.0 769.0L1400.8 769.5L1401.0 769.6L1401.2 769.6L1403.1 769.8L1403.3 769.8L1403.5 769.8L1405.3 769.6L1405.5 769.6L1405.7 769.5L1407.5 769.0L1407.7 768.9L1407.9 768.8L1409.6 768.0L1409.8 767.9L1409.9 767.7L1411.4 766.5L1411.5 766.4L1411.7 766.2L1412.9 764.8L1413.0 764.6L1413.1 764.4L1414.0 762.8L1414.0 762.8L1415.4 763.2L1415.6 763.3L1415.8 763.3L1417.7 763.5L1417.9 763.5L1418.1 763.5L1420.0 763.3L1420.2 763.3L1420.4 763.2L1422.2 762.7L1422.4 762.6L1422.6 762.5L1424.2 761.6L1424.4 761.5L1424.6 761.4L1426.0 760.2L1426.2 760.1L1426.3 759.9L1426.6 759.6L1427.3 760.4L1427.4 760.6L1427.6 760.7L1429.1 761.9L1429.2 762.0L1429.4 762.1L1431.1 763.0L1431.2 763.1L1431.4 763.2L1433.2 763.7L1433.4 763.8L1433.6 763.8L1435.5 764.0L1435.7 764.0L1435.9 764.0L1437.8 763.8L1438.0 763.8L1438.2 763.7L1440.0 763.2L1440.2 763.1L1440.4 763.0L1442.0 762.1L1442.2 762.0L1442.4 761.9L1443.8 760.7L1444.0 760.6L1444.1 760.4L1445.3 759.0L1445.4 758.8L1445.6 758.6L1446.4 757.0L1446.5 756.8L1446.6 756.6L1447.1 754.8L1447.2 754.6L1447.2 754.4L1447.4 752.5L1447.4 752.3L1447.4 752.1L1447.2 750.2L1447.2 750.0L1447.1 749.8L1446.6 748.0L1446.5 747.8L1446.4 747.6L1445.6 746.0L1445.4 745.8L1445.3 745.6L1444.1 744.2L1444.0 744.0L1443.8 743.9L1442.4 742.7L1442.2 742.6L1442.0 742.5L1440.4 741.6L1440.2 741.5L1440.0 741.4L1438.2 740.9L1438.0 740.8L1437.8 740.8L1435.9 740.6L1435.7 740.6L1435.5 740.6L1433.6 740.8L1433.4 740.8L1433.2 740.9L1431.4 741.4L1431.2 741.5L1431.1 741.6L1429.4 742.5L1429.2 742.6L1429.1 742.7L1427.6 743.9L1427.4 744.0L1427.3 744.2L1427.0 744.5L1426.3 743.7L1426.2 743.5L1426.0 743.4L1424.6 742.2L1424.4 742.1L1424.2 742.0L1422.6 741.1L1422.4 741.0L1422.2 740.9L1420.4 740.4L1420.2 740.3L1420.0 740.3L1418.1 740.1L1417.9 740.1L1417.7 740.1L1415.8 740.3L1415.6 740.3L1415.4 740.4L1413.6 740.9L1413.4 741.0L1413.2 741.1L1413.2 741.1L1413.1 740.2L1413.1 740.0L1413.0 739.8L1412.5 738.0L1412.4 737.8L1412.3 737.6L1411.6 736.3L1411.7 736.3L1412.9 734.8L1413.0 734.7L1413.1 734.5L1413.7 733.4L1414.2 734.5L1414.3 734.7L1414.5 734.8L1415.7 736.3L1415.8 736.4L1415.9 736.6L1417.4 737.8L1417.6 737.9L1417.7 738.0L1419.4 738.9L1419.6 739.0L1419.8 739.0L1421.6 739.6L1421.8 739.6L1422.0 739.7L1423.9 739.9L1424.1 739.9L1424.3 739.9L1426.1 739.7L1426.4 739.6L1426.6 739.6L1428.4 739.0L1428.5 739.0L1428.7 738.9L1430.4 738.0L1430.6 737.9L1430.7 737.8L1432.2 736.6L1432.3 736.4L1432.5 736.3L1433.7 734.8L1433.8 734.7L1433.9 734.5L1434.5 733.4L1435.7 734.4L1435.9 734.6L1436.1 734.7L1437.7 735.6L1437.9 735.6L1438.1 735.7L1439.9 736.3L1440.1 736.3L1440.3 736.3L1442.2 736.5L1442.4 736.5L1442.6 736.5L1444.5 736.3L1444.7 736.3L1444.9 736.3L1446.7 735.7L1446.9 735.6L1447.0 735.6L1448.7 734.7L1448.9 734.6L1449.0 734.4L1450.5 733.2L1450.6 733.1L1450.8 733.0L1452.0 731.5L1452.1 731.3L1452.2 731.2L1453.1 729.5L1453.2 729.3L1453.3 729.1L1453.8 727.3L1455.2 728.1L1455.4 728.2L1455.6 728.2L1457.4 728.8L1457.6 728.8L1457.8 728.8L1459.6 729.0L1459.9 729.0L1460.1 729.0L1461.9 728.8L1462.1 728.8L1462.3 728.8L1464.1 728.2L1464.3 728.2L1464.5 728.1L1466.2 727.2L1466.4 727.1L1466.5 726.9L1468.0 725.8L1468.1 725.6L1468.3 725.5L1469.5 724.0L1469.6 723.8L1469.7 723.7L1470.6 722.0L1470.7 721.8L1470.7 721.6L1470.8 721.4L1471.4 722.1L1471.6 722.3L1471.7 722.4L1473.2 723.6L1473.3 723.7L1473.5 723.8L1475.2 724.7L1475.3 724.8L1475.5 724.9L1477.3 725.4L1477.5 725.5L1477.7 725.5L1479.6 725.7L1479.8 725.7L1480.0 725.7L1481.9 725.5L1482.1 725.5L1482.3 725.4L1483.6 725.1L1483.4 725.7L1483.3 725.9L1483.3 726.1L1483.1 728.0L1483.1 728.2L1483.1 728.4L1483.3 730.2L1483.3 730.4L1483.4 730.6L1483.9 732.4L1483.9 732.5L1483.9 732.5L1482.0 732.3L1481.8 732.3L1481.6 732.3L1479.7 732.5L1479.5 732.5L1479.3 732.5L1477.5 733.1L1477.3 733.2L1477.2 733.3L1475.5 734.1L1475.3 734.2L1475.2 734.4L1473.7 735.6L1473.6 735.7L1473.4 735.9L1472.2 737.3L1472.1 737.5L1472.0 737.7L1471.1 739.3L1471.0 739.5L1470.9 739.7L1470.4 741.5L1470.3 741.7L1470.3 741.9L1470.3 742.5L1469.7 741.5L1469.6 741.3L1469.5 741.1L1468.3 739.7L1468.1 739.5L1468.0 739.4L1466.5 738.2L1466.4 738.1L1466.2 738.0L1464.5 737.1L1464.3 737.0L1464.1 736.9L1462.3 736.4L1462.1 736.3L1461.9 736.3L1460.1 736.1L1459.9 736.1L1459.6 736.1L1457.8 736.3L1457.6 736.3L1457.4 736.4L1455.6 736.9L1455.4 737.0L1455.2 737.1L1453.5 738.0L1453.4 738.1L1453.2 738.2L1451.7 739.4L1451.6 739.5L1451.4 739.7L1450.2 741.1L1450.1 741.3L1450.0 741.5L1449.1 743.1L1449.0 743.3L1449.0 743.5L1448.4 745.3L1448.4 745.5L1448.3 745.7L1448.2 747.6L1448.2 747.8L1448.2 748.0L1448.3 749.9L1448.4 750.1L1448.4 750.3L1449.0 752.1L1449.0 752.3L1449.1 752.5L1450.0 754.1L1450.1 754.3L1450.2 754.5L1451.4 755.9L1451.6 756.1L1451.7 756.2L1453.2 757.4L1453.4 757.5L1453.5 757.6L1455.2 758.5L1455.4 758.6L1455.6 758.7L1457.4 759.2L1457.6 759.3L1457.8 759.3L1459.6 759.5L1459.9 759.5L1460.1 759.5L1461.9 759.3L1462.1 759.3L1462.3 759.2L1464.1 758.7L1464.3 758.6L1464.5 758.5L1466.2 757.6L1466.4 757.5L1466.5 757.4L1468.0 756.2L1468.1 756.1L1468.3 755.9L1469.5 754.5L1469.6 754.3L1469.7 754.1L1470.6 752.5L1470.7 752.3L1470.7 752.1L1471.3 750.3L1471.3 750.1L1471.4 749.9L1471.4 749.2L1472.0 750.3L1472.1 750.5L1472.2 750.6L1473.4 752.1L1473.6 752.2L1473.7 752.4L1475.2 753.6L1475.3 753.7L1475.5 753.8L1477.2 754.7L1477.3 754.8L1477.5 754.9L1479.3 755.4L1479.5 755.4L1479.7 755.5L1481.6 755.7L1481.8 755.7L1482.0 755.7L1483.9 755.5L1484.1 755.4L1484.3 755.4L1486.1 754.9L1486.3 754.8L1486.5 754.7L1488.1 753.8L1488.3 753.7L1488.5 753.6L1489.9 752.4L1490.1 752.2L1490.1 752.2L1490.1 752.3L1490.1 752.5L1490.3 754.4L1490.3 754.6L1490.4 754.8L1490.9 756.6L1491.0 756.8L1491.1 757.0L1492.0 758.6L1492.1 758.8L1492.2 759.0L1493.4 760.4L1493.5 760.6L1493.7 760.7L1495.1 761.9L1495.3 762.0L1495.5 762.1L1497.1 763.0L1497.3 763.1L1497.5 763.2L1499.3 763.7L1499.5 763.8L1499.7 763.8L1501.6 764.0L1501.8 764.0L1502.0 764.0L1503.9 763.8L1504.1 763.8L1504.3 763.7L1506.1 763.2L1506.3 763.1L1506.5 763.0L1508.1 762.1L1508.3 762.0L1508.5 761.9L1509.9 760.7L1510.1 760.6L1510.2 760.4L1511.4 759.0L1511.5 758.8L1511.6 758.6L1512.5 757.0L1512.6 756.8L1512.7 756.6L1513.0 755.6L1513.3 756.1L1513.4 756.3L1513.5 756.5L1514.7 757.9L1514.8 758.1L1515.0 758.2L1515.7 758.8L1515.6 759.6L1515.6 759.8L1515.6 760.0L1515.8 761.9L1515.8 762.1L1515.8 762.3L1516.4 764.1L1516.5 764.3L1516.5 764.5L1517.4 766.1L1517.5 766.3L1517.7 766.5L1518.9 767.9L1519.0 768.1L1519.1 768.2L1520.6 769.4L1520.8 769.5L1520.9 769.6L1522.6 770.5L1522.8 770.6L1523.0 770.7L1524.8 771.2L1525.0 771.3L1525.2 771.3L1527.1 771.5L1527.3 771.5L1527.5 771.5L1529.3 771.3L1529.5 771.3L1529.7 771.2L1531.5 770.7L1531.7 770.6L1531.9 770.5L1532.7 770.1L1533.0 770.4L1533.1 770.6L1533.3 770.7L1534.7 771.9L1534.9 772.0L1535.1 772.1L1536.7 773.0L1536.9 773.1L1537.1 773.2L1538.9 773.7L1539.1 773.8L1539.3 773.8L1540.5 773.9L1540.0 775.6L1539.9 775.8L1539.9 776.0L1539.7 777.9L1539.7 778.1L1539.7 778.3L1539.9 780.2L1539.9 780.4L1540.0 780.6L1540.5 782.4L1540.6 782.6L1540.7 782.8L1541.6 784.4L1541.7 784.6L1541.8 784.8L1543.0 786.2L1543.1 786.4L1543.3 786.5L1544.6 787.6L1543.4 788.2L1543.2 788.3L1543.1 788.5L1541.6 789.7L1541.5 789.8L1541.3 789.9L1540.1 791.4L1540.0 791.6L1539.9 791.7L1539.0 793.4L1538.9 793.6L1538.9 793.8L1538.3 795.6L1538.3 795.8L1538.2 796.0L1538.0 797.9L1538.0 798.1L1538.0 798.3L1538.2 800.1L1538.3 800.4L1538.3 800.6L1538.9 802.4L1538.9 802.5L1539.0 802.7L1539.9 804.4L1540.0 804.6L1540.1 804.7L1541.3 806.2L1541.5 806.3L1541.6 806.5L1543.1 807.7L1543.2 807.8L1543.4 807.9L1544.6 808.5L1544.3 808.9L1544.2 809.0L1544.1 809.2L1543.2 810.9L1543.1 811.1L1543.0 811.3L1542.5 813.1L1542.4 813.3L1542.4 813.5L1542.2 815.3L1542.2 815.5L1542.2 815.8L1542.3 816.6L1541.6 817.1L1541.5 817.3L1541.3 817.4L1540.1 818.9L1540.0 819.0L1539.9 819.2L1539.0 820.9L1538.9 821.1L1538.9 821.2L1538.3 823.1L1538.3 823.3L1538.2 823.5L1538.0 825.3L1538.0 825.5L1538.0 825.7L1538.2 827.6L1538.3 827.8L1538.3 828.0L1538.9 829.8L1538.9 830.0L1539.0 830.2L1539.2 830.5L1538.3 831.3L1538.1 831.4L1538.0 831.6L1536.8 833.0L1536.7 833.2L1536.6 833.4L1535.7 835.0L1535.6 835.2L1535.5 835.4L1535.0 837.2L1534.9 837.4L1534.9 837.6L1534.7 839.5L1534.7 839.7L1534.7 839.9L1534.9 841.8L1534.9 842.0L1535.0 842.2L1535.5 844.0L1535.6 844.1L1535.1 844.7L1535.0 844.8L1534.9 845.0L1534.0 846.7L1533.9 846.9L1533.9 847.0L1533.3 848.8L1533.3 849.0L1533.3 849.1L1533.2 849.0L1533.2 848.8L1532.6 847.0L1532.6 846.9L1532.5 846.7L1531.6 845.0L1531.5 844.8L1531.4 844.7L1530.2 843.2L1530.0 843.1L1529.9 842.9L1528.4 841.7L1528.3 841.6L1528.1 841.5L1526.4 840.6L1526.2 840.5L1526.1 840.5L1524.3 839.9L1524.1 839.9L1523.8 839.8L1522.0 839.6L1521.8 839.6L1521.6 839.6L1519.7 839.8L1519.5 839.9L1519.3 839.9L1517.5 840.5L1517.3 840.5L1517.1 840.6L1515.4 841.5L1515.3 841.6L1515.1 841.7L1513.7 842.9L1513.5 843.1L1513.4 843.2L1512.2 844.7L1512.0 844.8L1511.9 845.0L1511.0 846.7L1511.0 846.9L1510.9 847.0L1510.3 848.8L1510.3 849.0L1510.3 849.3L1510.1 851.1L1510.1 851.3L1510.1 851.5L1510.3 853.4L1510.3 853.6L1510.3 853.8L1510.9 855.6L1511.0 855.8L1511.0 856.0L1511.9 857.7L1512.0 857.8L1512.2 858.0L1513.4 859.5L1513.5 859.6L1513.7 859.7L1515.1 860.9L1515.3 861.1L1515.4 861.2L1517.1 862.1L1517.3 862.1L1517.5 862.2L1519.3 862.8L1519.5 862.8L1519.7 862.8L1521.6 863.0L1521.8 863.0L1522.0 863.0L1523.8 862.8L1524.1 862.8L1524.3 862.8L1526.1 862.2L1526.2 862.1L1526.4 862.1L1528.1 861.2L1528.3 861.1L1528.4 860.9L1529.8 859.8L1529.7 860.8L1529.7 861.0L1529.7 861.2L1529.9 863.1L1529.9 863.3L1530.0 863.5L1530.5 865.3L1530.6 865.5L1530.7 865.6L1531.6 867.3L1531.7 867.5L1531.8 867.7L1533.0 869.1L1533.1 869.3L1533.3 869.4L1534.7 870.6L1534.9 870.7L1535.1 870.8L1536.7 871.7L1536.9 871.8L1537.1 871.9L1538.9 872.4L1539.1 872.5L1539.3 872.5L1541.2 872.7L1541.4 872.7L1541.6 872.7L1543.5 872.5L1543.7 872.5L1543.9 872.4L1545.7 871.9L1545.9 871.8L1546.1 871.7L1547.7 870.8L1547.9 870.7L1548.1 870.6L1549.5 869.4L1549.7 869.3L1549.8 869.1L1551.0 867.7L1551.1 867.5L1551.2 867.3L1552.1 865.6L1552.2 865.5L1552.2 865.4L1552.2 865.5L1552.3 865.6L1553.2 867.3L1553.3 867.5L1553.4 867.7L1554.6 869.1L1554.8 869.3L1554.9 869.4L1556.4 870.6L1556.5 870.7L1556.7 870.8L1558.4 871.7L1558.6 871.8L1558.8 871.9L1560.6 872.4L1560.8 872.5L1561.0 872.5L1562.8 872.7L1563.0 872.7L1563.3 872.7L1565.1 872.5L1565.3 872.5L1565.5 872.4L1567.3 871.9L1567.5 871.8L1567.7 871.7L1569.4 870.8L1569.5 870.7L1569.7 870.6L1571.2 869.4L1571.3 869.3L1571.5 869.1L1572.7 867.7L1572.8 867.5L1572.9 867.3L1573.8 865.6L1573.9 865.5L1573.9 865.3L1574.5 863.5L1574.5 863.3L1574.6 863.1L1574.7 861.7L1574.7 861.7L1574.9 861.7L1576.8 861.5L1577.0 861.5L1577.2 861.4L1579.0 860.9L1579.2 860.8L1579.4 860.7L1581.0 859.8L1581.2 859.7L1581.4 859.6L1582.8 858.4L1583.0 858.3L1583.1 858.1L1584.3 856.7L1584.4 856.5L1584.5 856.3L1585.4 854.7L1585.5 854.5L1585.6 854.3L1586.1 852.5L1586.2 852.3L1586.2 852.1L1586.4 850.2L1587.7 849.5L1587.9 849.4L1588.0 849.3L1588.2 849.2L1588.2 849.3L1588.0 851.1L1588.0 851.3L1588.0 851.5L1588.2 853.4L1588.2 853.6L1588.2 853.8L1588.8 855.6L1588.9 855.8L1588.9 856.0L1589.8 857.7L1589.9 857.8L1590.1 858.0L1591.3 859.5L1591.4 859.6L1591.5 859.7L1593.0 860.9L1593.2 861.1L1593.3 861.2L1595.0 862.1L1595.2 862.1L1595.4 862.2L1597.2 862.8L1597.4 862.8L1597.6 862.8L1599.5 863.0L1599.7 863.0L1599.9 863.0L1601.7 862.8L1601.9 862.8L1602.1 862.8L1604.0 862.2L1604.1 862.1L1604.3 862.1L1606.0 861.2L1606.2 861.1L1606.3 860.9L1607.8 859.7L1607.9 859.6L1608.1 859.5L1609.3 858.0L1609.4 857.8L1609.5 857.7L1610.4 856.0L1610.5 855.8L1610.5 855.6L1611.1 853.8L1611.1 853.6L1611.2 853.4L1611.4 851.5L1611.4 851.3L1611.4 851.1L1611.2 849.3L1611.1 849.0L1611.1 848.8L1610.5 847.0L1610.5 846.9L1610.4 846.7L1609.5 845.0L1609.4 844.8L1609.3 844.7L1608.1 843.2L1607.9 843.1L1607.8 842.9L1606.3 841.7L1606.2 841.6L1606.0 841.5L1604.3 840.6L1604.1 840.5L1604.0 840.5L1602.1 839.9L1601.9 839.9L1601.7 839.8L1599.9 839.6L1599.7 839.6L1599.5 839.6L1597.6 839.8L1597.4 839.9L1597.2 839.9L1595.4 840.5L1595.2 840.5L1595.0 840.6L1593.3 841.5L1593.2 841.6L1593.0 841.7L1592.9 841.9L1592.9 841.8L1593.0 839.9L1593.1 839.7L1593.0 839.5L1592.9 837.6L1592.8 837.4L1592.8 837.2L1592.2 835.4L1592.2 835.2L1592.6 834.7L1593.8 836.1L1593.9 836.3L1594.0 836.4L1595.5 837.6L1595.7 837.8L1595.8 837.9L1597.5 838.8L1597.7 838.8L1597.9 838.9L1599.7 839.5L1599.9 839.5L1600.1 839.5L1602.0 839.7L1602.2 839.7L1602.4 839.7L1604.2 839.5L1604.4 839.5L1604.6 839.5L1606.4 838.9L1606.6 838.8L1606.8 838.8L1608.5 837.9L1608.7 837.8L1608.8 837.6L1610.3 836.4L1610.4 836.3L1610.6 836.1L1611.8 834.7L1611.9 834.5L1612.0 834.4L1612.9 832.7L1613.0 832.5L1613.0 832.3L1613.6 830.5L1613.6 830.3L1613.7 830.1L1613.9 828.2L1613.9 828.0L1613.9 827.8L1613.7 826.0L1613.6 825.7L1613.6 825.5L1613.0 823.7L1613.0 823.6L1612.9 823.4L1612.0 821.7L1611.9 821.5L1611.8 821.4L1610.6 819.9L1610.4 819.8L1610.3 819.6L1608.8 818.4L1608.7 818.3L1608.5 818.2L1607.2 817.5L1608.1 817.3L1608.3 817.2L1608.5 817.1L1610.2 816.2L1610.3 816.1L1610.5 816.0L1611.9 814.8L1612.1 814.7L1612.2 814.5L1613.4 813.1L1613.6 812.9L1613.7 812.7L1614.5 811.1L1614.6 810.9L1614.7 810.7L1615.3 808.9L1615.3 808.7L1615.3 808.5L1615.5 806.6L1615.5 806.4L1615.5 806.2L1615.3 804.3L1615.3 804.1L1615.3 803.9L1614.7 802.1L1614.6 801.9L1614.5 801.7L1613.7 800.1L1613.6 799.9L1613.4 799.7L1612.2 798.3L1612.1 798.1L1611.9 798.0L1610.5 796.8L1610.3 796.7L1610.2 796.6L1610.1 796.5L1610.4 796.1L1610.5 795.9L1610.5 795.7L1611.1 793.9L1611.1 793.7L1611.2 793.5L1611.4 791.6L1611.4 791.4L1611.4 791.2L1611.2 789.3L1611.1 789.1L1611.1 788.9L1610.7 787.7L1611.9 787.8L1612.2 787.8L1612.4 787.8L1614.2 787.6L1614.4 787.6L1614.6 787.5L1616.4 787.0L1616.6 786.9L1616.8 786.8L1618.5 785.9L1618.7 785.8L1618.8 785.7L1620.3 784.5L1620.4 784.4L1620.6 784.2L1621.8 782.8L1621.9 782.6L1622.0 782.4L1622.9 780.8L1623.0 780.6L1623.0 780.4L1623.6 778.6L1623.6 778.4L1623.7 778.2L1623.8 776.3L1623.9 776.1L1623.8 775.9L1623.7 774.0L1623.6 773.8L1623.6 773.6L1623.0 771.8L1623.0 771.6L1622.9 771.4L1622.0 769.8L1621.9 769.6L1621.8 769.4L1620.6 768.0L1620.4 767.8L1620.3 767.7L1618.8 766.5L1618.7 766.4L1618.5 766.3L1616.8 765.4L1616.6 765.3L1616.4 765.2L1614.6 764.7L1614.4 764.6L1614.2 764.6L1612.4 764.4L1612.2 764.4L1611.9 764.4L1610.1 764.6L1609.9 764.6L1609.7 764.7L1607.9 765.2L1607.7 765.3L1607.5 765.4L1605.8 766.3L1605.7 766.4L1605.5 766.5L1604.0 767.7L1603.9 767.8L1603.7 768.0L1602.5 769.4L1602.4 769.6L1602.3 769.8L1601.4 771.4L1601.3 771.6L1601.3 771.8L1600.7 773.6L1600.7 773.8L1600.6 774.0L1600.5 775.9L1600.5 776.1L1600.5 776.3L1600.6 778.2L1600.7 778.4L1600.7 778.6L1601.1 779.8L1599.9 779.7L1599.7 779.7L1599.6 779.7L1599.5 779.3L1599.5 779.1L1599.4 778.9L1598.9 777.1L1598.8 776.9L1598.7 776.8L1597.9 775.1L1597.7 774.9L1597.6 774.8L1596.4 773.3L1596.3 773.2L1596.1 773.0L1594.7 771.8L1594.5 771.7L1594.3 771.6L1592.7 770.7L1592.5 770.6L1592.3 770.5L1590.5 770.0L1590.3 769.9L1590.1 769.9L1588.3 769.7L1587.8 766.5L1588.0 766.4L1588.1 766.2L1589.3 764.8L1589.4 764.6L1589.5 764.4L1590.4 762.8L1590.5 762.6L1590.6 762.4L1591.0 761.1L1591.3 761.4L1591.5 761.5L1591.7 761.6L1593.3 762.5L1593.5 762.6L1593.7 762.7L1595.5 763.2L1595.7 763.3L1595.9 763.3L1597.8 763.5L1598.0 763.5L1598.2 763.5L1600.1 763.3L1600.3 763.3L1600.5 763.2L1602.3 762.7L1602.5 762.6L1602.7 762.5L1604.3 761.6L1604.5 761.5L1604.7 761.4L1606.1 760.2L1606.3 760.1L1606.4 759.9L1607.6 758.5L1607.7 758.3L1607.8 758.1L1608.7 756.5L1608.8 756.3L1608.9 756.1L1609.4 754.4L1609.6 754.6L1609.7 754.7L1609.9 754.9L1611.3 756.1L1611.5 756.2L1611.7 756.3L1613.3 757.2L1613.5 757.3L1613.7 757.4L1615.5 757.9L1615.7 757.9L1615.9 758.0L1617.8 758.2L1618.0 758.2L1618.2 758.2L1620.1 758.0L1620.3 757.9L1620.5 757.9L1622.3 757.4L1622.5 757.3L1622.6 757.2L1624.3 756.3L1624.5 756.2L1624.6 756.1L1626.1 754.9L1626.2 754.7L1626.4 754.6L1627.6 753.1L1627.7 753.0L1627.8 752.8L1628.7 751.1L1628.8 750.9L1628.9 750.8L1629.4 749.0L1629.5 748.8L1629.5 748.6L1629.7 746.7L1629.7 746.5L1629.7 746.3L1629.5 744.4L1629.5 744.2L1629.4 744.0L1628.9 742.2L1628.8 742.1L1629.0 742.1L1629.2 742.2L1631.1 742.3L1631.3 742.4L1631.5 742.3L1633.3 742.2L1633.1 742.6L1633.0 742.8L1632.9 743.0L1632.3 744.8L1632.3 745.0L1632.3 745.2L1632.1 747.1L1632.1 747.3L1632.1 747.5L1632.3 749.4L1632.3 749.6L1632.3 749.8L1632.9 751.6L1633.0 751.8L1633.1 752.0L1633.9 753.6L1634.0 753.8L1634.2 754.0L1635.4 755.4L1635.5 755.6L1635.7 755.7L1637.1 756.9L1637.3 757.0L1637.5 757.1L1639.1 758.0L1639.3 758.1L1639.5 758.2L1641.3 758.7L1641.5 758.8L1641.7 758.8L1643.6 759.0L1643.8 759.0L1644.0 759.0L1645.9 758.8L1646.1 758.8L1646.3 758.7L1648.1 758.2L1648.3 758.1L1648.4 758.0L1650.1 757.1L1650.3 757.0L1650.4 756.9L1651.9 755.7L1652.0 755.6L1652.2 755.4L1653.0 754.4L1653.0 754.5L1653.9 756.1L1654.0 756.3L1654.1 756.5L1655.3 757.9L1655.5 758.1L1655.6 758.2L1657.1 759.4L1657.2 759.5L1657.4 759.6L1659.1 760.5L1659.3 760.6L1659.5 760.7L1661.3 761.2L1661.5 761.3L1661.7 761.3L1663.5 761.5L1663.7 761.5L1664.0 761.5L1664.1 761.5L1664.1 762.4L1662.3 762.2L1662.1 762.2L1661.9 762.2L1660.0 762.4L1659.8 762.5L1659.6 762.5L1657.8 763.1L1657.6 763.1L1657.4 763.2L1655.8 764.1L1655.6 764.2L1655.4 764.3L1654.0 765.5L1653.8 765.7L1653.7 765.8L1652.9 766.7L1652.2 765.8L1652.0 765.7L1651.9 765.5L1650.4 764.3L1650.3 764.2L1650.1 764.1L1648.4 763.2L1648.3 763.1L1648.1 763.1L1646.3 762.5L1646.1 762.5L1645.9 762.4L1644.0 762.2L1643.8 762.2L1643.6 762.2L1641.7 762.4L1641.5 762.5L1641.3 762.5L1639.5 763.1L1639.3 763.1L1639.1 763.2L1637.5 764.1L1637.3 764.2L1637.1 764.3L1635.7 765.5L1635.5 765.7L1635.4 765.8L1634.2 767.3L1634.0 767.4L1633.9 767.6L1633.1 769.3L1633.0 769.5L1632.9 769.7L1632.3 771.5L1632.3 771.7L1632.3 771.9L1632.1 773.7L1632.1 773.9L1632.1 774.1L1632.3 776.0L1632.3 776.2L1632.3 776.4L1632.9 778.2L1633.0 778.4L1633.1 778.6L1633.9 780.3L1634.0 780.4L1634.2 780.6L1635.4 782.1L1635.5 782.2L1635.7 782.3L1637.1 783.5L1637.3 783.7L1637.5 783.8L1639.1 784.7L1639.3 784.7L1639.5 784.8L1641.3 785.4L1641.5 785.4L1641.7 785.4L1643.6 785.6L1643.8 785.6L1644.0 785.6L1645.9 785.4L1646.1 785.4L1646.3 785.4L1648.1 784.8L1648.3 784.7L1648.4 784.7L1650.1 783.8L1650.3 783.7L1650.4 783.5L1651.9 782.3L1652.0 782.2L1652.2 782.1L1652.9 781.1L1653.7 782.1L1653.8 782.2L1654.0 782.3L1655.4 783.5L1655.6 783.7L1655.8 783.8L1657.4 784.7L1657.6 784.7L1657.8 784.8L1659.6 785.4L1659.8 785.4L1660.0 785.4L1661.9 785.6L1662.1 785.6L1662.3 785.6L1664.2 785.4L1664.2 785.4L1664.5 786.5L1664.6 786.7L1664.7 786.9L1665.6 788.6L1665.7 788.8L1665.8 788.9L1667.0 790.4L1667.1 790.5L1667.3 790.7L1668.7 791.9L1668.9 792.0L1669.1 792.1L1670.7 793.0L1670.9 793.1L1671.1 793.1L1672.9 793.7L1673.1 793.7L1673.3 793.8L1675.2 793.9L1675.4 794.0L1675.6 793.9L1677.5 793.8L1677.7 793.7L1677.9 793.7L1679.7 793.1L1679.9 793.1L1680.1 793.0L1681.4 792.3L1681.4 792.3L1682.9 793.5L1683.0 793.6L1683.2 793.8L1684.9 794.6L1685.1 794.7L1685.3 794.8L1687.1 795.3L1687.3 795.4L1687.5 795.4L1689.3 795.6L1689.5 795.6L1689.8 795.6L1691.6 795.4L1691.8 795.4L1692.0 795.3L1693.8 794.8L1694.0 794.7L1694.2 794.6L1695.6 793.9L1696.2 794.4L1696.4 794.5L1696.5 794.6L1698.2 795.5L1698.4 795.6L1698.6 795.6L1700.4 796.2L1700.6 796.2L1700.8 796.3L1702.7 796.4L1702.9 796.5L1703.1 796.4L1704.9 796.3L1705.1 796.2L1705.3 796.2L1705.7 796.1L1706.0 796.1L1706.3 796.1L1706.5 796.1L1706.7 796.1L1707.1 796.5L1707.3 796.6L1707.5 796.7L1709.2 797.6L1709.3 797.7L1709.5 797.7L1709.5 822.6L1709.3 823.9L1709.3 824.1L1709.3 824.3L1709.5 825.6L1709.5 838.8L1709.4 838.9L1709.3 839.1L1709.2 839.2L1709.2 839.4L1709.1 839.7L1709.1 839.9L1708.4 850.8L1708.3 850.9L1708.1 851.1L1708.0 851.2L1707.8 851.3L1706.7 852.8L1706.5 853.0L1706.4 853.1L1705.8 854.3L1705.7 854.4L1705.5 854.5L1704.0 855.7L1703.9 855.9L1703.8 856.0L1702.6 857.5L1702.4 857.6L1702.3 857.8L1701.4 859.5L1701.4 859.7L1701.3 859.8L1700.7 860.1L1700.5 860.2L1700.4 860.4L1698.9 861.5L1698.8 861.7L1698.6 861.8L1697.4 863.3L1697.3 863.5L1697.2 863.6L1696.3 865.3L1696.2 865.5L1696.1 865.7L1696.1 866.0L1696.0 866.0L1695.8 865.9L1693.9 865.8L1693.7 865.8L1693.5 865.8L1691.6 865.9L1691.4 866.0L1691.2 866.0L1689.4 866.6L1689.2 866.6L1689.0 866.7L1687.4 867.6L1687.2 867.7L1687.0 867.8L1686.7 868.1L1686.1 867.0L1686.0 866.8L1685.8 866.6L1684.6 865.2L1684.5 865.0L1684.4 864.9L1682.9 863.7L1682.7 863.6L1682.6 863.5L1680.9 862.6L1680.7 862.5L1680.5 862.4L1678.7 861.9L1678.5 861.8L1678.3 861.8L1676.4 861.6L1676.2 861.6L1676.0 861.6L1674.2 861.8L1673.9 861.8L1673.7 861.9L1671.9 862.4L1671.8 862.5L1671.6 862.6L1669.9 863.5L1669.7 863.6L1669.6 863.7L1668.1 864.9L1668.0 865.0L1667.8 865.2L1667.5 865.6L1665.9 864.7L1665.7 864.6L1665.5 864.6L1663.7 864.0L1663.5 864.0L1663.3 863.9L1661.5 863.8L1661.3 863.8L1661.0 863.8L1659.2 863.9L1659.0 864.0L1658.8 864.0L1657.0 864.6L1656.8 864.6L1656.6 864.7L1654.9 865.6L1654.8 865.7L1654.6 865.8L1653.1 867.0L1653.0 867.2L1652.8 867.3L1652.5 867.7L1652.2 867.3L1652.0 867.2L1651.9 867.0L1650.4 865.8L1650.3 865.7L1650.1 865.6L1648.4 864.7L1648.3 864.6L1648.1 864.6L1646.3 864.0L1646.1 864.0L1645.9 863.9L1644.0 863.8L1643.8 863.8L1643.6 863.8L1641.7 863.9L1641.5 864.0L1641.3 864.0L1639.5 864.6L1639.3 864.6L1639.1 864.7L1637.5 865.6L1637.3 865.7L1637.1 865.8L1635.7 867.0L1635.5 867.2L1635.4 867.3L1634.2 868.8L1634.0 869.0L1633.9 869.1L1633.1 870.8L1633.0 871.0L1632.9 871.2L1632.8 871.5L1632.7 871.2L1632.6 871.0L1632.5 870.8L1631.6 869.1L1631.5 869.0L1631.4 868.8L1630.2 867.3L1630.1 867.2L1629.9 867.0L1628.5 865.8L1628.3 865.7L1628.1 865.6L1626.5 864.7L1626.3 864.6L1626.1 864.6L1624.3 864.0L1624.1 864.0L1623.9 863.9L1622.0 863.8L1621.8 863.8L1621.6 863.8L1619.7 863.9L1619.5 864.0L1619.3 864.0L1617.5 864.6L1617.3 864.6L1617.1 864.7L1615.5 865.6L1615.3 865.7L1615.1 865.8L1613.7 867.0L1613.5 867.2L1613.4 867.3L1612.2 868.8L1612.1 869.0L1612.0 869.1L1611.1 870.8L1611.0 871.0L1610.9 871.2L1610.4 873.0L1610.3 873.2L1610.3 873.4L1610.1 875.2L1610.1 875.5L1610.1 875.7L1610.3 877.5L1610.3 877.7L1610.4 877.9L1610.9 879.7L1611.0 879.9L1611.1 880.1L1612.0 881.8L1612.1 882.0L1612.2 882.1L1613.4 883.6L1613.5 883.7L1613.7 883.9L1615.1 885.1L1615.3 885.2L1615.5 885.3L1617.1 886.2L1615.7 887.3L1615.5 887.5L1615.4 887.6L1614.2 889.1L1614.1 889.3L1614.0 889.4L1613.1 891.1L1613.0 891.3L1612.9 891.5L1612.4 893.3L1612.3 893.5L1612.3 893.7L1612.1 895.6L1612.1 895.8L1612.1 896.0L1612.3 897.8L1612.3 898.0L1612.4 898.2L1612.9 900.0L1613.0 900.2L1613.1 900.4L1614.0 902.1L1614.1 902.3L1614.2 902.4L1615.4 903.9L1615.5 904.0L1615.7 904.2L1617.1 905.4L1617.3 905.5L1617.5 905.6L1618.1 905.9L1618.1 906.2L1618.2 906.4L1618.2 906.6L1618.7 908.4L1618.8 908.6L1618.9 908.7L1619.8 910.4L1619.9 910.6L1620.0 910.7L1621.0 911.9L1620.2 911.9L1620.0 911.9L1619.8 911.9L1617.9 912.0L1617.7 912.1L1617.5 912.1L1615.7 912.7L1615.5 912.7L1615.3 912.8L1613.6 913.7L1613.5 913.8L1613.3 913.9L1611.9 915.1L1611.7 915.3L1611.6 915.4L1610.4 916.9L1610.2 917.1L1610.1 917.2L1609.3 918.9L1609.2 919.1L1609.1 919.3L1608.5 921.1L1608.5 921.3L1608.5 921.5L1608.3 923.3L1608.3 923.6L1608.3 923.8L1608.5 925.6L1608.5 925.8L1608.5 926.0L1609.1 927.8L1609.2 928.0L1609.3 928.2L1610.1 929.9L1610.2 930.1L1610.4 930.2L1611.6 931.7L1611.7 931.8L1611.9 932.0L1613.3 933.2L1613.5 933.3L1613.6 933.4L1615.3 934.3L1615.5 934.4L1615.7 934.4L1617.5 935.0L1617.7 935.0L1617.9 935.1L1619.8 935.2L1620.0 935.3L1620.2 935.2L1622.1 935.1L1622.3 935.0L1622.5 935.0L1624.3 934.4L1624.5 934.4L1624.6 934.3L1626.3 933.4L1626.5 933.3L1626.6 933.2L1628.1 932.0L1628.2 931.8L1628.4 931.7L1629.6 930.2L1629.7 930.1L1629.8 929.9L1630.7 928.2L1630.8 928.0L1630.9 927.8L1631.4 926.0L1631.4 925.8L1631.5 925.6L1631.7 923.8L1631.7 923.6L1631.7 923.3L1631.5 921.5L1631.4 921.3L1631.4 921.1L1630.9 919.3L1630.8 919.1L1630.7 918.9L1629.8 917.2L1629.7 917.1L1629.6 916.9L1628.6 915.7L1629.4 915.8L1629.6 915.8L1629.8 915.8L1631.7 915.6L1631.9 915.6L1632.1 915.5L1633.1 915.2L1633.1 915.2L1633.0 915.4L1632.9 915.6L1632.3 917.4L1632.3 917.6L1632.3 917.8L1632.1 919.7L1632.1 919.9L1632.1 920.1L1632.3 922.0L1632.3 922.2L1632.3 922.4L1632.9 924.2L1633.0 924.4L1633.1 924.6L1633.9 926.2L1634.0 926.4L1634.2 926.6L1634.8 927.4L1633.6 928.0L1633.4 928.1L1633.3 928.3L1631.8 929.5L1631.7 929.6L1631.5 929.7L1630.3 931.2L1630.2 931.4L1630.1 931.5L1629.2 933.2L1629.1 933.4L1629.1 933.6L1628.5 935.4L1628.5 935.6L1628.4 935.8L1628.3 937.7L1628.3 937.7L1628.1 937.6L1628.0 937.5L1626.3 936.6L1626.1 936.5L1625.9 936.5L1624.1 935.9L1623.9 935.9L1623.7 935.9L1621.8 935.7L1621.6 935.7L1621.4 935.7L1619.6 935.9L1619.4 935.9L1619.2 935.9L1617.4 936.5L1617.2 936.5L1617.0 936.6L1615.3 937.5L1615.1 937.6L1615.0 937.8L1613.5 938.9L1613.4 939.1L1613.2 939.2L1612.0 940.7L1611.9 940.9L1611.8 941.0L1610.9 942.7L1610.8 942.9L1610.8 943.1L1610.2 944.9L1610.2 944.9L1609.5 945.1L1609.3 945.2L1609.2 945.3L1607.5 946.2L1607.3 946.3L1607.1 946.4L1605.7 947.6L1605.5 947.7L1605.4 947.9L1604.2 949.3L1604.1 949.5L1604.0 949.7L1603.1 951.3L1603.0 951.5L1602.9 951.7L1602.4 953.5L1602.3 953.7L1602.3 953.9L1602.1 955.8L1602.1 956.0L1602.1 956.2L1602.3 958.1L1602.3 958.3L1602.4 958.5L1602.9 960.3L1603.0 960.5L1603.1 960.7L1604.0 962.3L1604.1 962.5L1604.2 962.7L1605.4 964.1L1605.5 964.3L1605.7 964.4L1607.1 965.6L1607.3 965.7L1607.5 965.8L1609.2 966.7L1609.3 966.8L1609.5 966.9L1611.3 967.4L1611.5 967.5L1611.7 967.5L1613.6 967.7L1613.8 967.7L1614.0 967.7L1615.9 967.5L1616.1 967.5L1616.3 967.4L1618.1 966.9L1618.3 966.8L1618.5 966.7L1620.1 965.8L1620.3 965.7L1620.5 965.6L1621.9 964.4L1622.1 964.3L1622.2 964.1L1622.4 964.0L1623.0 964.5L1623.1 964.6L1623.3 964.7L1625.0 965.6L1625.1 965.7L1625.3 965.7L1627.1 966.3L1627.3 966.3L1627.5 966.4L1629.4 966.5L1629.6 966.5L1629.8 966.5L1631.7 966.4L1631.9 966.3L1632.1 966.3L1633.9 965.7L1634.1 965.7L1634.3 965.6L1636.0 964.7L1636.1 964.6L1636.3 964.5L1637.7 963.3L1637.9 963.1L1637.9 963.1L1638.0 963.1L1638.2 963.3L1639.6 964.5L1639.8 964.6L1639.9 964.7L1641.6 965.6L1641.8 965.7L1642.0 965.7L1642.4 965.8L1642.9 967.5L1643.0 967.6L1643.0 967.8L1643.9 969.5L1644.0 969.7L1644.2 969.8L1645.4 971.3L1645.5 971.4L1645.6 971.6L1647.1 972.8L1647.3 972.9L1647.4 973.0L1649.1 973.9L1649.3 974.0L1649.5 974.0L1651.3 974.6L1651.5 974.6L1651.7 974.7L1653.6 974.9L1653.8 974.9L1654.0 974.9L1654.8 974.8L1655.6 976.2L1655.7 976.3L1655.8 976.5L1657.0 977.9L1657.1 978.1L1657.3 978.2L1658.7 979.4L1658.9 979.6L1659.1 979.7L1660.7 980.5L1660.9 980.6L1661.1 980.7L1662.9 981.3L1663.1 981.3L1663.3 981.3L1665.2 981.5L1665.4 981.5L1665.6 981.5L1667.5 981.3L1667.7 981.3L1667.9 981.3L1669.7 980.7L1669.9 980.6L1670.1 980.5L1671.7 979.7L1671.9 979.6L1672.1 979.4L1672.2 979.3L1672.2 979.4L1672.0 981.3L1672.0 981.5L1672.0 981.7L1672.2 983.6L1672.2 983.8L1672.3 984.0L1672.8 985.8L1672.9 986.0L1673.0 986.1L1673.9 987.8L1674.0 988.0L1674.1 988.1L1674.0 988.3L1673.9 988.5L1673.0 990.1L1672.9 990.3L1672.8 990.5L1672.3 992.3L1672.2 992.5L1672.2 992.7L1672.0 994.6L1672.0 994.8L1672.0 995.0L1672.2 996.9L1672.2 997.1L1672.3 997.3L1672.8 999.1L1672.9 999.3L1673.0 999.5L1673.9 1001.1L1674.0 1001.3L1674.1 1001.5L1675.3 1002.9L1675.4 1003.1L1675.6 1003.2L1677.1 1004.4L1677.2 1004.5L1677.4 1004.6L1679.1 1005.5L1679.2 1005.6L1679.4 1005.7L1681.2 1006.2L1681.4 1006.3L1681.6 1006.3L1683.5 1006.5L1683.7 1006.5L1683.9 1006.5L1685.8 1006.3L1686.0 1006.3L1686.2 1006.2L1688.0 1005.7L1688.2 1005.6L1688.4 1005.5L1690.0 1004.6L1690.2 1004.5L1690.4 1004.4L1690.7 1004.1L1691.1 1004.6L1691.3 1004.7L1691.4 1004.9L1692.9 1006.1L1693.0 1006.2L1693.2 1006.3L1694.9 1007.2L1695.1 1007.3L1695.3 1007.3L1697.1 1007.9L1697.3 1007.9L1697.5 1008.0L1699.3 1008.1L1699.5 1008.2L1699.7 1008.1L1701.6 1008.0L1701.8 1007.9L1702.0 1007.9L1703.8 1007.3L1704.0 1007.3L1704.2 1007.2L1705.9 1006.3L1706.0 1006.2L1706.2 1006.1L1707.7 1004.9L1707.8 1004.7L1707.9 1004.6L1709.1 1003.1L1709.3 1003.0L1709.4 1002.8L1710.3 1001.1L1710.3 1000.9L1710.4 1000.7L1710.9 999.2L1712.0 999.6L1712.2 999.6L1712.4 999.6L1714.3 999.8L1714.5 999.8L1714.7 999.8L1716.6 999.6L1716.8 999.6L1717.0 999.6L1718.8 999.0L1719.0 998.9L1719.2 998.9L1720.1 998.4L1720.3 999.1L1720.3 999.3L1720.4 999.5L1721.3 1001.1L1721.4 1001.3L1721.6 1001.5L1722.7 1002.9L1722.9 1003.1L1723.0 1003.2L1724.5 1004.4L1724.7 1004.5L1724.8 1004.6L1726.5 1005.5L1726.7 1005.6L1726.9 1005.7L1728.0 1006.0L1728.4 1006.9L1728.6 1007.1L1728.7 1007.2L1729.9 1008.7L1730.0 1008.9L1730.2 1009.0L1730.7 1009.5L1730.7 1009.7L1730.8 1009.9L1730.8 1010.1L1731.0 1010.7L1730.4 1011.8L1730.3 1012.0L1730.3 1012.1L1729.7 1013.9L1729.7 1014.1L1729.6 1014.4L1729.5 1016.2L1729.4 1016.4L1729.5 1016.6L1729.6 1018.5L1729.7 1018.7L1729.7 1018.9L1730.3 1020.7L1730.3 1020.9L1730.4 1021.1L1731.3 1022.8L1731.4 1022.9L1731.5 1023.1L1732.7 1024.6L1732.9 1024.7L1733.0 1024.8L1734.5 1026.0L1734.6 1026.2L1734.8 1026.3L1736.5 1027.2L1736.7 1027.2L1736.9 1027.3L1738.7 1027.9L1738.9 1027.9L1739.1 1027.9L1740.9 1028.1L1741.1 1028.1L1741.4 1028.1L1741.5 1028.1L1742.2 1028.3L1742.4 1028.3L1742.6 1028.4L1742.8 1028.4L1742.9 1028.4L1743.0 1028.6L1743.2 1028.7L1744.6 1029.9L1744.8 1030.0L1745.0 1030.2L1745.5 1030.4L1745.8 1031.4L1745.9 1031.6L1746.0 1031.8L1746.6 1033.0L1746.6 1033.0L1746.5 1033.2L1746.5 1033.4L1746.3 1035.3L1746.3 1035.5L1746.3 1035.7L1746.5 1037.5L1746.5 1037.7L1746.6 1037.9L1747.1 1039.7L1747.2 1039.9L1747.3 1040.1L1748.1 1041.8L1748.2 1042.0L1748.4 1042.1L1749.0 1042.9L1748.9 1043.9L1748.9 1044.1L1748.9 1044.3L1749.1 1046.2L1749.1 1046.4L1749.2 1046.6L1749.7 1048.4L1749.8 1048.6L1749.9 1048.8L1750.8 1050.4L1750.9 1050.6L1751.0 1050.8L1752.2 1052.2L1752.3 1052.4L1752.5 1052.5L1753.2 1053.1L1753.6 1054.4L1753.7 1054.6L1753.8 1054.8L1754.7 1056.5L1754.8 1056.6L1754.9 1056.8L1756.1 1058.3L1756.2 1058.4L1756.4 1058.6L1757.8 1059.7L1758.0 1059.9L1758.2 1060.0L1759.8 1060.9L1760.0 1060.9L1760.2 1061.0L1762.0 1061.6L1762.2 1061.6L1762.4 1061.6L1762.8 1061.7L1764.2 1062.9L1764.4 1063.0L1764.6 1063.1L1766.2 1064.0L1766.4 1064.1L1766.6 1064.1L1768.4 1064.7L1768.6 1064.7L1768.8 1064.8L1770.7 1065.0L1770.9 1065.0L1771.1 1065.0L1773.0 1064.8L1773.2 1064.7L1773.4 1064.7L1773.7 1064.6L1774.5 1065.2L1774.6 1065.3L1774.8 1065.4L1776.5 1066.3L1776.6 1066.4L1776.8 1066.4L1778.6 1067.0L1778.8 1067.0L1779.0 1067.1L1780.9 1067.2L1781.1 1067.2L1781.3 1067.2L1783.2 1067.1L1783.4 1067.0L1783.6 1067.0L1785.4 1066.4L1785.6 1066.4L1785.8 1066.3L1787.4 1065.4L1787.6 1065.3L1787.8 1065.2L1789.2 1064.0L1789.4 1063.8L1789.5 1063.7L1790.7 1062.2L1790.8 1062.0L1791.0 1061.9L1791.8 1060.2L1791.9 1060.0L1792.0 1059.8L1792.5 1058.0L1792.6 1057.8L1792.6 1057.6L1792.8 1055.8L1792.8 1055.5L1792.8 1055.3L1792.6 1053.5L1792.6 1053.3L1792.5 1053.1L1792.0 1051.3L1791.9 1051.1L1791.8 1050.9L1791.1 1049.5L1791.3 1049.1L1791.3 1048.9L1791.3 1048.7L1791.5 1046.8L1791.5 1046.6L1791.5 1046.4L1791.3 1044.5L1791.3 1044.3L1791.3 1044.1L1790.8 1042.7L1791.2 1041.6L1791.2 1041.5L1791.4 1041.4L1791.5 1041.3L1792.7 1039.8L1792.8 1039.6L1792.9 1039.5L1793.8 1037.8L1793.9 1037.6L1794.0 1037.4L1794.4 1036.0L1795.6 1035.3L1795.8 1035.2L1796.0 1035.1L1797.4 1033.9L1797.6 1033.8L1797.7 1033.6L1797.8 1033.5L1798.4 1033.3L1798.6 1033.3L1798.8 1033.2L1800.4 1032.3L1800.6 1032.2L1800.8 1032.1L1802.2 1030.9L1802.4 1030.7L1802.5 1030.6L1803.7 1029.1L1803.8 1029.0L1803.9 1028.8L1804.8 1027.1L1804.9 1026.9L1805.0 1026.7L1805.5 1024.9L1805.6 1024.7L1805.6 1024.5L1805.8 1022.9L1806.6 1022.4L1806.8 1022.3L1807.0 1022.2L1807.3 1022.0L1807.3 1022.0L1807.5 1022.0L1809.4 1021.8L1809.6 1021.8L1809.8 1021.7L1811.6 1021.2L1811.8 1021.1L1812.0 1021.0L1813.7 1020.1L1813.8 1020.0L1814.0 1019.9L1815.5 1018.7L1815.6 1018.6L1815.7 1018.4L1816.9 1016.9L1817.1 1016.8L1817.2 1016.6L1818.1 1014.9L1818.1 1014.8L1818.4 1014.8L1818.6 1014.8L1818.8 1014.8L1820.7 1014.6L1820.9 1014.6L1821.1 1014.5L1822.9 1014.0L1823.1 1013.9L1823.3 1013.8L1824.9 1012.9L1825.1 1012.8L1825.3 1012.7L1826.7 1011.5L1826.9 1011.4L1827.0 1011.2L1827.7 1010.5L1827.8 1010.5L1829.7 1010.7L1829.9 1010.7L1830.1 1010.7L1832.0 1010.5L1832.2 1010.4L1832.4 1010.4L1834.2 1009.9L1834.3 1009.8L1834.5 1009.7L1836.2 1008.8L1836.4 1008.7L1836.5 1008.6L1838.0 1007.4L1838.1 1007.2L1838.3 1007.1L1839.5 1005.6L1839.6 1005.5L1839.7 1005.3L1840.0 1004.7L1840.8 1004.7L1841.0 1004.7L1841.2 1004.7L1843.0 1004.6L1843.3 1004.5L1843.5 1004.5L1845.3 1003.9L1845.4 1003.9L1845.6 1003.8L1845.8 1004.0L1846.0 1004.1L1846.2 1004.2L1847.8 1005.1L1848.0 1005.2L1848.2 1005.3L1850.0 1005.8L1850.2 1005.9L1850.4 1005.9L1852.3 1006.1L1852.5 1006.1L1852.7 1006.1L1854.6 1005.9L1854.8 1005.9L1855.0 1005.8L1856.3 1005.4L1856.3 1005.4L1856.5 1005.5L1856.7 1005.5L1858.6 1005.7L1858.8 1005.7L1859.0 1005.7L1860.9 1005.5L1861.0 1005.5L1861.1 1005.6L1861.3 1005.6L1863.1 1006.2L1863.3 1006.2L1863.5 1006.3L1865.4 1006.5L1865.6 1006.5L1865.8 1006.5L1867.6 1006.3L1867.8 1006.2L1868.0 1006.2L1868.8 1006.0L1868.9 1006.0L1870.6 1006.9L1870.8 1007.0L1871.0 1007.1L1872.8 1007.6L1873.0 1007.6L1873.2 1007.7L1873.8 1007.7L1873.9 1007.9L1874.1 1008.1L1874.2 1008.3L1875.4 1009.7L1875.5 1009.9L1875.7 1010.0L1877.1 1011.2L1877.3 1011.3L1877.5 1011.4L1879.1 1012.3L1879.3 1012.4L1879.5 1012.5L1881.3 1013.0L1881.5 1013.1L1881.7 1013.1L1883.6 1013.3L1883.8 1013.3L1884.0 1013.3L1885.9 1013.1L1886.1 1013.1L1886.3 1013.0L1888.1 1012.5L1888.3 1012.4L1888.4 1012.3L1888.8 1012.1L1890.1 1012.5L1890.3 1012.6L1890.5 1012.6L1892.4 1012.8L1892.6 1012.8L1892.8 1012.8L1894.6 1012.6L1894.8 1012.6L1895.0 1012.5L1896.8 1012.0L1897.0 1011.9L1897.2 1011.8L1898.9 1010.9L1899.1 1010.8L1899.2 1010.7L1899.8 1010.3L1899.8 1010.3L1901.6 1009.7L1901.8 1009.6L1902.0 1009.5L1903.6 1008.7L1903.8 1008.6L1904.0 1008.4L1905.4 1007.2L1905.6 1007.1L1905.7 1006.9L1906.9 1005.5L1907.0 1005.3L1907.1 1005.1L1908.0 1003.5L1908.1 1003.3L1908.2 1003.1L1908.6 1001.8L1908.6 1001.8L1910.3 1000.9L1910.4 1000.8L1910.6 1000.7L1912.1 999.5L1912.2 999.3L1912.4 999.2L1913.6 997.7L1913.7 997.6L1913.8 997.4L1914.7 995.7L1914.8 995.5L1914.8 995.3L1914.9 995.0L1915.4 994.7L1915.5 994.5L1915.6 994.4L1915.9 994.0L1915.9 994.0L1916.1 994.1L1916.3 994.1L1918.2 994.3L1918.4 994.3L1918.6 994.3L1920.5 994.1L1920.7 994.1L1920.9 994.0L1922.7 993.5L1922.9 993.4L1923.1 993.3L1924.8 992.5L1924.9 992.3L1925.1 992.2L1926.5 991.0L1926.7 990.9L1926.8 990.7L1928.0 989.3L1928.2 989.1L1928.3 988.9L1929.1 987.3L1929.2 987.1L1929.3 986.9L1929.9 985.1L1929.9 984.9L1929.9 984.7L1930.0 984.5L1930.5 985.4L1930.6 985.8L1930.6 986.0L1930.7 986.1L1931.6 987.8L1931.7 988.0L1931.8 988.1L1933.0 989.6L1933.2 989.8L1933.3 989.9L1934.8 991.1L1934.9 991.2L1935.1 991.3L1936.8 992.2L1937.0 992.3L1937.2 992.4L1939.0 992.9L1939.2 993.0L1939.4 993.0L1941.2 993.2L1941.4 993.2L1941.6 993.2L1943.5 993.0L1943.7 993.0L1943.9 992.9L1945.7 992.4L1945.9 992.3L1946.1 992.2L1946.5 992.0L1946.5 992.0L1946.7 992.1L1948.6 992.2L1948.8 992.3L1949.0 992.2L1950.0 992.1L1951.0 993.0L1951.2 993.1L1951.4 993.2L1953.0 994.1L1953.2 994.2L1953.4 994.2L1954.5 994.6L1955.2 995.5L1955.4 995.6L1955.5 995.7L1957.0 996.9L1957.1 997.1L1957.3 997.2L1958.8 998.0L1959.6 999.5L1959.7 999.6L1959.8 999.8L1961.0 1001.3L1961.2 1001.4L1961.3 1001.5L1962.8 1002.7L1962.9 1002.9L1963.1 1003.0L1964.8 1003.9L1965.0 1003.9L1965.1 1004.0L1966.9 1004.6L1967.1 1004.6L1967.4 1004.6L1969.2 1004.8L1969.4 1004.8L1969.6 1004.8L1971.5 1004.6L1971.7 1004.6L1971.9 1004.6L1973.7 1004.0L1973.9 1003.9L1974.1 1003.9L1975.8 1003.0L1975.9 1002.9L1976.1 1002.7L1976.4 1002.5L1977.1 1002.7L1977.3 1002.7L1977.5 1002.8L1979.3 1003.0L1979.5 1003.0L1979.8 1003.0L1981.6 1002.8L1981.8 1002.7L1982.0 1002.7L1983.8 1002.1L1984.0 1002.1L1984.2 1002.0L1985.1 1001.5L1985.3 1001.5L1985.6 1001.5L1985.8 1001.5L1986.4 1001.5L1986.8 1001.8L1986.8 1001.8L1987.0 1002.3L1987.0 1002.5L1987.1 1002.7L1988.0 1004.3L1988.1 1004.5L1988.2 1004.7L1989.4 1006.1L1989.6 1006.3L1989.7 1006.4L1991.2 1007.6L1991.3 1007.7L1991.5 1007.8L1993.2 1008.7L1993.4 1008.8L1993.6 1008.9L1995.1 1009.4L1995.7 1010.5L1995.8 1010.6L1996.0 1010.8L1997.2 1012.3L1997.3 1012.4L1997.4 1012.6L1998.9 1013.7L1999.1 1013.9L1999.2 1014.0L1999.8 1014.3L1999.7 1014.6L1999.7 1014.8L1999.6 1015.0L1999.4 1016.9L1999.4 1017.1L1998.2 1018.1L1998.1 1018.3L1997.9 1018.4L1996.7 1019.9L1996.6 1020.0L1996.5 1020.2L1995.6 1021.9L1995.5 1022.1L1995.5 1022.2L1994.9 1024.0L1994.9 1024.2L1994.8 1024.5L1994.6 1026.3L1994.6 1026.5L1994.6 1026.7L1994.8 1028.6L1994.9 1028.8L1994.9 1029.0L1995.5 1030.8L1995.5 1031.0L1995.6 1031.2L1996.5 1032.9L1996.6 1033.0L1996.7 1033.2L1997.9 1034.7L1998.1 1034.8L1998.2 1034.9L1999.7 1036.1L1999.8 1036.3L1999.8 1036.3L1999.9 1036.5L2000.4 1038.3L2000.5 1038.5L2000.6 1038.7L2001.2 1039.9L2001.2 1040.5L2001.2 1040.7L2001.2 1040.9L2001.4 1042.8L2001.4 1043.0L2001.5 1043.2L2002.0 1045.0L2002.1 1045.2L2002.2 1045.4L2003.0 1047.0L2003.1 1047.2L2003.3 1047.4L2004.5 1048.8L2004.6 1049.0L2004.8 1049.1L2006.2 1050.3L2006.4 1050.5L2006.6 1050.6L2008.2 1051.4L2008.4 1051.5L2008.5 1051.6L2008.7 1052.3L2008.8 1052.5L2008.9 1052.7L2009.8 1054.4L2009.9 1054.5L2010.0 1054.7L2011.2 1056.1L2011.3 1056.3L2011.5 1056.4L2012.9 1057.6L2013.1 1057.8L2013.3 1057.9L2013.4 1057.9L2013.7 1058.9L2013.8 1059.1L2013.8 1059.3L2014.7 1060.9L2014.8 1061.1L2015.0 1061.3L2016.2 1062.7L2016.3 1062.9L2016.5 1063.0L2017.9 1064.2L2018.1 1064.3L2018.2 1064.4L2019.7 1065.2L2020.1 1066.5L2020.0 1067.8L2020.0 1068.0L2020.0 1068.2L2020.2 1070.0L2020.2 1070.2L2020.2 1070.4L2020.8 1072.2L2020.9 1072.4L2021.0 1072.6L2021.8 1074.3L2021.9 1074.5L2022.1 1074.6L2023.3 1076.1L2023.4 1076.2L2023.6 1076.4L2025.0 1077.6L2025.2 1077.7L2025.4 1077.8L2027.0 1078.7L2027.2 1078.8L2027.4 1078.8L2029.2 1079.4L2029.4 1079.4L2029.6 1079.5L2031.5 1079.7L2031.7 1079.7L2031.9 1079.7L2033.8 1079.5L2034.0 1079.4L2034.2 1079.4L2036.0 1078.8L2036.2 1078.8L2036.3 1078.7L2038.0 1077.8L2038.2 1077.7L2038.3 1077.6L2039.8 1076.4L2039.9 1076.2L2040.1 1076.1L2041.3 1074.6L2041.4 1074.5L2041.5 1074.3L2042.0 1073.3L2043.2 1072.7L2043.4 1072.6L2043.6 1072.5L2045.0 1071.3L2045.2 1071.1L2045.3 1071.0L2046.5 1069.5L2046.6 1069.4L2046.7 1069.2L2047.6 1067.5L2047.7 1067.3L2047.8 1067.1L2048.3 1065.3L2048.4 1065.1L2048.4 1064.9L2048.6 1063.2L2049.2 1062.4L2049.4 1062.3L2049.5 1062.1L2050.3 1060.4L2050.4 1060.3L2050.5 1060.1L2051.0 1058.3L2051.1 1058.1L2051.1 1057.9L2051.3 1056.0L2051.3 1055.8L2051.3 1055.6L2051.1 1053.9L2051.6 1052.2L2051.7 1052.0L2051.7 1051.8L2051.9 1049.9L2051.9 1049.7L2051.9 1049.5L2051.8 1048.3L2052.7 1046.7L2052.8 1046.5L2052.8 1046.3L2053.4 1044.5L2053.4 1044.3L2053.5 1044.1L2053.6 1042.2L2053.7 1042.0L2053.6 1041.8L2053.5 1039.9L2053.4 1039.7L2053.4 1039.5L2052.8 1037.7L2052.8 1037.5L2052.7 1037.3L2051.8 1035.7L2051.7 1035.5L2051.6 1035.3L2050.4 1033.9L2050.2 1033.7L2050.1 1033.6L2049.1 1032.8L2049.2 1031.2L2049.2 1031.0L2049.2 1030.8L2049.0 1028.9L2049.0 1028.7L2049.0 1028.5L2048.4 1026.7L2048.4 1026.5L2048.3 1026.3L2047.4 1024.7L2047.3 1024.5L2047.1 1024.3L2046.2 1023.2L2046.4 1021.6L2046.4 1021.4L2046.4 1021.2L2046.2 1019.3L2046.2 1019.1L2046.1 1018.9L2045.6 1017.1L2045.5 1016.9L2045.4 1016.7L2044.5 1015.0L2044.4 1014.9L2044.3 1014.7L2043.1 1013.2L2043.0 1013.1L2042.8 1013.0L2042.4 1012.6L2042.4 1012.5L2042.3 1012.3L2041.4 1010.7L2041.3 1010.5L2041.2 1010.3L2041.2 1010.3L2041.3 1009.1L2041.3 1008.9L2041.3 1008.6L2041.1 1006.8L2041.1 1006.6L2041.0 1006.4L2040.5 1004.6L2040.4 1004.4L2040.3 1004.2L2039.4 1002.5L2039.3 1002.4L2039.2 1002.2L2039.1 1002.1L2039.2 1002.0L2039.2 1001.8L2039.4 999.9L2039.4 999.7L2039.4 999.5L2039.2 997.6L2039.2 997.4L2039.1 997.2L2038.6 995.4L2038.5 995.2L2038.4 995.0L2037.5 993.4L2037.4 993.2L2037.3 993.0L2036.6 992.2L2036.5 991.0L2036.4 990.8L2036.4 990.6L2035.9 988.8L2035.8 988.6L2035.7 988.5L2034.8 986.8L2034.7 986.6L2034.6 986.5L2033.4 985.0L2033.2 984.9L2033.1 984.7L2032.0 983.8L2031.9 983.2L2031.9 983.2L2032.8 981.5L2032.9 981.3L2033.0 981.1L2033.5 979.3L2033.6 979.1L2033.6 978.9L2033.7 977.9L2033.9 977.7L2034.1 977.6L2034.2 977.4L2035.4 976.0L2035.5 975.8L2035.6 975.6L2036.5 973.9L2036.6 973.8L2036.7 973.6L2037.2 971.8L2037.3 971.6L2037.3 971.4L2037.5 969.5L2037.5 969.3L2037.5 969.1L2037.3 967.2L2037.3 967.0L2037.2 966.8L2037.2 966.7L2037.3 966.6L2037.4 966.4L2037.5 966.3L2038.4 964.6L2038.5 964.4L2038.6 964.2L2038.6 964.1L2039.3 963.8L2039.4 963.6L2039.6 963.5L2041.1 962.3L2041.2 962.2L2041.4 962.0L2042.6 960.6L2042.7 960.4L2042.8 960.2L2042.9 960.0L2043.8 959.7L2044.0 959.7L2044.2 959.6L2045.9 958.7L2046.0 958.6L2046.2 958.5L2047.7 957.3L2047.8 957.1L2048.0 957.0L2049.2 955.5L2049.3 955.4L2049.4 955.2L2050.3 953.5L2050.4 953.3L2050.4 953.1L2050.7 952.1L2052.0 951.4L2052.2 951.3L2052.4 951.2L2053.8 950.0L2054.0 949.9L2054.1 949.7L2055.3 948.2L2055.4 948.1L2055.5 947.9L2055.8 947.4L2056.2 947.2L2056.3 947.1L2056.5 947.0L2058.0 945.8L2058.1 945.6L2058.3 945.5L2059.5 944.0L2059.6 943.9L2059.7 943.7L2060.4 942.4L2060.6 942.4L2060.8 942.3L2061.0 942.3L2062.8 941.7L2063.0 941.7L2063.2 941.6L2064.8 940.7L2065.0 940.6L2065.2 940.5L2066.6 939.3L2066.8 939.1L2066.9 939.0L2068.1 937.5L2068.2 937.3L2068.3 937.2L2069.2 935.5L2069.3 935.3L2069.4 935.1L2069.9 933.3L2070.0 933.1L2070.0 932.9L2070.0 932.4L2070.2 932.4L2070.4 932.4L2070.6 932.4L2072.5 932.2L2072.7 932.2L2072.9 932.1L2074.7 931.6L2074.9 931.5L2075.0 931.4L2076.7 930.5L2076.9 930.4L2077.0 930.3L2078.2 929.3L2078.9 929.3L2079.1 929.3L2079.3 929.2L2081.1 928.7L2081.3 928.6L2081.5 928.5L2083.1 927.6L2083.3 927.5L2083.5 927.4L2084.9 926.2L2085.1 926.0L2085.2 925.9L2086.4 924.4L2086.5 924.3L2086.6 924.1L2087.5 922.4L2087.6 922.3L2087.7 922.1L2088.1 920.7L2088.2 920.6L2088.4 920.5L2088.6 920.5L2089.6 919.9L2090.0 920.0L2090.2 920.0L2090.4 920.0L2092.3 919.8L2092.5 919.8L2092.7 919.7L2094.5 919.2L2094.7 919.1L2094.8 919.0L2096.5 918.1L2096.7 918.0L2096.9 917.9L2097.3 917.6L2097.3 917.6L2097.5 917.6L2099.4 917.4L2099.6 917.3L2099.8 917.3L2101.6 916.7L2101.8 916.7L2102.0 916.6L2103.7 915.7L2103.8 915.6L2104.0 915.5L2105.5 914.3L2105.6 914.1L2105.8 914.0L2106.9 912.5L2107.1 912.4L2107.2 912.2L2108.1 910.5L2108.1 910.3L2108.2 910.1L2108.8 908.3L2108.8 908.1L2108.8 907.9L2109.0 906.1L2109.0 905.9L2109.0 905.7L2109.0 905.2L2109.5 904.8L2109.6 904.7L2109.7 904.6L2110.9 903.1L2111.1 902.9L2111.2 902.8L2111.9 901.5L2112.6 901.2L2112.8 901.1L2113.0 901.1L2114.7 900.2L2114.9 900.1L2115.0 899.9L2116.5 898.7L2116.6 898.6L2116.8 898.5L2118.0 897.0L2118.1 896.8L2118.2 896.7L2119.1 895.0L2119.2 894.8L2119.2 894.6L2119.8 892.8L2119.8 892.6L2119.9 892.4L2120.1 890.5L2120.1 890.3L2120.1 890.1L2119.9 888.3L2119.8 888.1L2119.8 887.9L2119.2 886.1L2119.2 885.9L2119.1 885.7L2118.9 885.3L2119.0 884.2L2119.0 883.9L2119.0 883.7L2118.8 881.9L2118.8 881.7L2118.7 881.5L2118.5 880.9L2118.6 880.8L2119.5 879.1L2119.6 878.9L2119.6 878.7L2120.2 876.9L2120.2 876.7L2120.3 876.5L2120.4 874.6L2120.5 874.4L2120.4 874.2L2120.3 872.4L2120.2 872.2L2120.2 872.0L2119.6 870.2L2119.6 870.0L2119.5 869.8L2118.9 868.7L2118.9 868.6L2119.0 868.4L2119.0 868.2L2119.2 866.3L2119.2 866.1L2119.2 865.9L2119.0 864.0L2119.0 863.8L2118.9 863.6L2118.9 863.5L2119.2 863.1L2119.3 862.9L2119.4 862.7L2120.3 861.1L2120.4 860.9L2120.4 860.7L2121.0 858.9L2121.3 858.7L2121.4 858.6L2121.6 858.4L2122.8 856.9L2122.9 856.8L2123.0 856.6L2123.9 854.9L2124.0 854.8L2124.0 854.6L2124.6 852.8L2124.6 852.6L2124.7 852.4L2124.8 850.5L2124.8 850.3L2124.8 850.1L2124.7 848.2L2124.7 848.2L2125.1 847.7L2125.2 847.5L2125.3 847.3L2126.2 845.7L2126.3 845.5L2126.3 845.3L2126.9 843.5L2126.9 843.3L2127.0 843.1L2127.1 841.2L2127.2 841.0L2127.1 840.8L2127.0 839.8L2127.1 839.7L2127.2 839.5L2127.2 839.3L2127.6 838.0L2128.4 837.6L2128.5 837.5L2128.7 837.4L2130.2 836.2L2130.3 836.0L2130.4 835.9L2131.6 834.4L2131.8 834.3L2131.9 834.1L2132.8 832.4L2132.8 832.2L2132.9 832.0L2133.5 830.2L2133.5 830.0L2133.5 829.9L2133.7 829.9L2133.8 829.7L2135.3 828.5L2135.4 828.4L2135.6 828.3L2136.8 826.8L2136.9 826.6L2137.0 826.5L2137.9 824.8L2138.0 824.6L2138.0 824.4L2138.6 822.6L2138.6 822.4L2138.7 822.2L2138.7 821.8L2139.4 821.4L2139.6 821.3L2139.8 821.2L2141.2 820.0L2141.4 819.8L2141.5 819.7L2142.7 818.2L2142.8 818.1L2142.9 817.9L2143.8 816.2L2143.9 816.0L2144.0 815.8L2144.5 814.0L2144.6 813.8L2144.6 813.6L2144.8 811.8L2144.8 811.6L2144.8 811.4L2144.7 810.3L2144.9 809.9L2145.0 809.7L2145.1 809.5L2145.6 807.7L2145.9 807.5L2146.0 807.4L2146.2 807.2L2147.4 805.7L2147.5 805.6L2147.6 805.4L2148.2 804.2L2148.3 804.2L2150.0 803.3L2150.2 803.2L2150.3 803.1L2151.6 802.1L2151.7 802.1L2153.6 802.3L2153.8 802.3L2154.0 802.3L2155.9 802.1L2156.1 802.0L2156.3 802.0L2158.1 801.4L2158.3 801.4L2158.4 801.3L2160.1 800.4L2160.3 800.3L2160.4 800.2L2161.9 799.0L2162.0 798.8L2162.2 798.7L2163.4 797.2L2163.5 797.1L2163.6 796.9L2164.5 795.2L2164.6 795.0L2164.7 794.8L2165.2 793.0L2165.2 792.8L2165.3 792.6L2165.5 790.8L2165.5 790.6L2165.5 790.4L2165.3 788.5L2165.2 788.3L2165.2 788.1L2165.0 787.5L2165.3 787.9L2165.5 788.0L2165.6 788.2L2167.1 789.4L2167.2 789.5L2167.4 789.6L2169.1 790.5L2169.3 790.6L2169.5 790.6L2171.3 791.2L2171.5 791.2L2171.7 791.3L2173.5 791.4L2173.7 791.4L2174.0 791.4L2175.8 791.3L2176.0 791.2L2176.2 791.2L2178.0 790.6L2178.2 790.6L2178.4 790.5L2178.7 790.3L2179.6 790.2L2179.8 790.2L2179.8 790.2L2180.0 790.2L2181.8 790.8L2182.0 790.8L2182.2 790.9L2184.0 791.1L2184.2 791.1L2184.6 791.2L2184.8 791.2L2185.0 791.3L2186.9 791.4L2187.1 791.4L2187.3 791.4L2187.5 791.4L2189.0 791.9L2189.2 791.9L2189.4 791.9L2191.3 792.1L2191.5 792.1L2191.7 792.1L2193.5 791.9L2193.7 791.9L2194.1 792.1L2194.2 792.2L2194.4 792.3L2196.2 792.8L2196.4 792.9L2196.6 792.9L2198.5 793.1L2198.7 793.1L2198.9 793.1L2200.8 792.9L2201.0 792.9L2201.2 792.8L2203.0 792.3L2203.2 792.2L2203.4 792.1L2205.0 791.2L2205.2 791.1L2205.4 791.0L2206.8 789.8L2207.0 789.7L2207.1 789.5L2208.3 788.1L2208.4 787.9L2208.5 787.7L2209.4 786.1L2209.5 785.9L2209.6 785.7L2210.1 783.9L2210.2 783.7L2210.2 783.5L2210.4 781.6L2210.4 781.4L2210.4 781.2L2210.2 779.3L2210.2 779.1L2210.1 778.9L2209.6 777.1L2209.5 776.9L2209.4 776.7L2209.0 775.9L2208.9 775.2L2208.9 775.0L2208.8 774.8L2208.8 774.7L2209.3 773.1L2209.4 772.9L2209.4 772.7L2209.6 770.8L2209.6 770.6L2209.6 770.4L2209.4 768.5L2209.4 768.3L2209.3 768.1L2208.8 766.3L2208.7 766.1L2208.6 765.9L2207.7 764.3L2207.6 764.1L2207.5 763.9L2206.3 762.5L2206.2 762.3L2206.0 762.2L2204.5 761.0L2204.4 760.9L2204.2 760.8L2202.5 759.9L2202.4 759.8L2202.2 759.7L2200.4 759.2L2200.2 759.1L2200.0 759.1L2198.1 758.9L2197.9 758.9L2197.7 758.9L2195.8 759.1L2195.6 759.1L2195.4 759.2L2194.1 759.6L2193.8 759.5L2193.6 759.4L2193.4 759.4L2192.7 759.3L2192.8 759.3L2193.6 757.6L2193.7 757.4L2193.8 757.2L2194.3 755.4L2194.4 755.2L2194.4 755.0L2194.6 753.2L2194.6 753.0L2194.6 752.8L2194.4 750.9L2194.4 750.7L2194.3 750.5L2194.1 749.7L2194.8 748.3L2194.9 748.2L2195.0 748.0L2195.5 746.2L2195.6 746.0L2195.6 745.9L2196.3 745.3L2196.5 745.2L2196.6 745.0L2197.8 743.6L2197.9 743.4L2198.0 743.2L2198.9 741.6L2199.0 741.4L2199.1 741.2L2199.6 739.4L2199.7 739.2L2201.1 739.1L2201.3 739.0L2201.5 739.0L2203.3 738.4L2203.5 738.4L2203.7 738.3L2205.4 737.4L2205.5 737.3L2205.7 737.2L2207.2 736.0L2207.3 735.8L2207.4 735.7L2207.5 735.6L2208.3 735.5L2208.5 735.5L2208.7 735.4L2210.5 734.9L2210.7 734.8L2210.8 734.7L2212.5 733.8L2212.7 733.7L2212.9 733.6L2214.3 732.4L2214.5 732.3L2214.6 732.1L2215.8 730.7L2215.9 730.5L2216.0 730.3L2216.9 728.7L2217.0 728.5L2217.1 728.3L2217.6 726.5L2217.7 726.3L2217.7 726.1L2217.7 725.5L2218.5 724.9L2218.6 724.8L2218.8 724.6L2219.3 724.0L2219.4 724.0L2221.2 724.6L2221.4 724.6L2221.6 724.7L2223.5 724.9L2223.7 724.9L2223.9 724.9L2225.8 724.7L2226.0 724.6L2226.2 724.6L2228.0 724.0L2228.2 724.0L2228.3 723.9L2230.0 723.0L2230.2 722.9L2230.3 722.8L2231.8 721.6L2232.0 721.4L2232.1 721.3L2233.3 719.8L2233.4 719.7L2233.5 719.5L2234.4 717.8L2234.5 717.7L2234.7 717.6L2234.9 717.5L2235.1 717.4L2235.3 717.3L2236.6 717.2L2236.8 717.2L2237.0 717.1L2238.8 716.6L2239.0 716.5L2239.2 716.4L2240.8 715.5L2241.0 715.4L2241.2 715.3L2242.6 714.1L2242.8 714.0L2242.9 713.8L2244.1 712.3L2244.2 712.2L2244.3 712.0L2245.2 710.3L2245.3 710.2L2245.4 710.0L2245.9 708.2L2246.0 708.0L2246.0 707.8L2246.2 705.9L2246.2 705.7L2246.2 705.5L2246.0 703.6L2246.0 703.4L2245.9 703.2L2245.4 701.4L2245.3 701.2L2245.2 701.0L2244.3 699.4L2244.2 699.2L2244.1 699.0L2242.9 697.6L2242.8 697.4L2242.6 697.3L2241.2 696.1L2241.0 696.0L2240.8 695.8L2239.2 695.0L2239.0 694.9L2238.8 694.8L2237.0 694.3L2236.8 694.2L2236.6 694.2L2234.7 694.0L2234.5 694.0L2234.3 694.0L2233.6 694.1L2233.5 693.6L2233.5 693.4L2233.4 693.2L2232.9 691.4L2232.8 691.2L2232.7 691.0L2231.9 689.4L2231.7 689.2L2231.6 689.0L2230.4 687.6L2230.3 687.4L2230.1 687.3L2228.7 686.1L2228.5 686.0L2228.3 685.9L2227.0 685.2L2228.0 684.9L2228.2 684.8L2228.4 684.7L2230.0 683.8L2230.2 683.7L2230.4 683.6L2231.8 682.4L2232.0 682.3L2232.1 682.1L2233.3 680.7L2233.4 680.5L2233.5 680.3L2234.4 678.7L2234.5 678.5L2234.6 678.3L2235.1 676.5L2235.2 676.3L2235.2 676.1L2235.4 674.2L2235.4 674.0L2235.4 673.8L2235.2 671.9L2235.2 671.7L2235.1 671.5L2234.6 669.7L2234.5 669.5L2234.4 669.3L2233.5 667.7L2233.4 667.5L2233.3 667.3L2232.1 665.9L2232.0 665.7L2231.8 665.6L2230.4 664.4L2230.2 664.3L2230.0 664.2L2228.4 663.3L2228.2 663.2L2228.0 663.1L2226.2 662.6L2226.0 662.5L2225.8 662.5L2223.9 662.3L2223.7 662.3L2223.5 662.3L2221.6 662.5L2221.4 662.5L2221.2 662.6L2219.4 663.1L2219.2 663.2L2219.0 663.3L2217.4 664.2L2217.2 664.3L2217.0 664.4L2215.6 665.6L2215.4 665.7L2215.3 665.9L2214.1 667.3L2214.0 667.5L2213.9 667.7L2213.0 669.3L2212.9 669.5L2212.8 669.7L2212.3 671.5L2212.2 671.7L2212.2 671.9L2212.0 673.8L2212.0 674.0L2212.0 674.2L2212.2 676.1L2212.2 676.3L2212.3 676.5L2212.8 678.3L2212.9 678.5L2213.0 678.7L2213.0 678.7L2212.0 678.4L2211.8 678.4L2211.6 678.4L2209.7 678.2L2209.5 678.2L2209.3 678.2L2207.5 678.4L2207.3 678.4L2207.1 678.4L2205.2 679.0L2205.1 679.1L2204.9 679.1L2203.2 680.0L2203.0 680.1L2202.9 680.3L2201.4 681.5L2201.3 681.6L2201.1 681.7L2200.4 682.7L2200.0 682.5L2199.9 682.4L2199.7 682.3L2197.9 681.8L2197.7 681.7L2197.5 681.7L2195.6 681.5L2195.4 681.5L2195.2 681.5L2193.3 681.7L2193.1 681.7L2192.9 681.8L2191.1 682.3L2190.9 682.4L2190.7 682.5L2189.1 683.4L2188.9 683.5L2188.7 683.6L2187.3 684.8L2187.1 684.9L2187.0 685.1L2185.8 686.5L2185.7 686.7L2185.6 686.9L2184.7 688.5L2184.6 688.7L2184.5 688.9L2184.0 690.7L2183.9 690.9L2183.9 691.1L2183.7 693.0L2183.7 693.2L2183.7 693.4L2183.9 695.1L2183.7 695.2L2182.3 696.4L2182.1 696.6L2182.0 696.7L2180.8 698.2L2180.7 698.3L2180.6 698.5L2179.7 700.2L2179.6 700.4L2179.5 700.6L2179.5 700.6L2179.2 700.7L2179.0 700.7L2178.8 700.8L2177.0 701.3L2176.8 701.4L2176.6 701.5L2174.9 702.3L2174.8 702.4L2174.0 702.4L2173.8 702.3L2173.6 702.4L2172.7 702.4L2171.0 701.9L2170.8 701.9L2170.6 701.8L2168.7 701.7L2168.5 701.6L2168.3 701.7L2166.4 701.8L2166.2 701.9L2166.0 701.9L2164.4 702.4L2164.3 702.3L2164.1 702.2L2163.9 702.1L2162.3 701.2L2162.1 701.1L2161.9 701.0L2160.1 700.5L2159.9 700.4L2159.7 700.4L2157.8 700.2L2157.6 700.2L2157.4 700.2L2155.9 700.3L2155.6 700.0L2155.4 699.9L2155.2 699.8L2153.6 698.9L2153.4 698.8L2153.2 698.8L2151.4 698.2L2151.2 698.2L2151.0 698.1L2149.1 698.0L2148.9 697.9L2148.7 698.0L2146.8 698.1L2146.6 698.2L2146.4 698.2L2144.6 698.8L2144.4 698.8L2144.2 698.9L2142.6 699.8L2142.4 699.9L2142.2 700.0L2141.7 700.5L2139.9 700.7L2139.7 700.7L2139.5 700.7L2137.7 701.3L2137.5 701.4L2137.3 701.5L2135.6 702.3L2135.4 702.4L2135.3 702.6L2134.5 703.2L2132.9 703.3L2132.7 703.4L2132.5 703.4L2130.7 704.0L2130.5 704.0L2130.3 704.1L2128.7 705.0L2128.5 705.1L2128.3 705.2L2126.9 706.4L2126.8 706.5L2126.3 706.1L2126.2 705.9L2126.0 705.8L2124.3 704.9L2124.1 704.9L2123.9 704.8L2122.1 704.2L2121.9 704.2L2121.7 704.2L2119.9 704.0L2119.7 704.0L2119.4 704.0L2117.6 704.2L2117.4 704.2L2117.2 704.2L2115.4 704.8L2115.2 704.9L2115.0 704.9L2113.3 705.8L2113.2 705.9L2113.0 706.1L2111.5 707.3L2111.4 707.4L2111.2 707.5L2110.0 709.0L2109.9 709.2L2109.8 709.3L2108.9 711.0L2108.8 711.2L2108.8 711.4L2108.2 713.1L2108.1 713.2L2106.8 713.3L2106.6 713.3L2106.4 713.4L2104.6 713.9L2104.4 714.0L2104.2 714.1L2102.5 715.0L2102.3 715.1L2102.2 715.2L2100.7 716.4L2100.6 716.5L2100.4 716.7L2099.2 718.2L2099.1 718.3L2099.0 718.5L2098.1 720.2L2098.0 720.3L2098.0 720.5L2097.4 722.3L2097.4 722.5L2097.3 722.7L2097.1 724.6L2097.1 724.8L2097.1 725.0L2097.3 726.9L2097.4 727.1L2097.4 727.3L2098.0 729.1L2098.0 729.3L2098.1 729.5L2098.3 729.8L2098.2 730.2L2098.0 730.3L2097.8 730.4L2097.6 730.5L2097.0 731.1L2095.7 731.2L2095.5 731.2L2095.3 731.3L2093.5 731.8L2093.3 731.9L2093.1 732.0L2091.4 732.9L2091.3 733.0L2091.1 733.1L2090.1 733.9L2089.3 733.7L2089.1 733.7L2088.9 733.6L2087.0 733.4L2086.8 733.4L2086.6 733.4L2084.7 733.6L2084.5 733.7L2084.3 733.7L2082.5 734.3L2082.4 734.3L2080.7 734.5L2080.5 734.5L2080.3 734.5L2078.5 735.1L2078.3 735.2L2078.1 735.2L2077.5 735.6L2076.4 734.7L2076.3 734.6L2076.1 734.5L2074.4 733.6L2074.3 733.5L2074.1 733.5L2072.3 732.9L2072.1 732.9L2071.9 732.8L2070.1 732.7L2069.7 732.5L2069.5 732.5L2069.3 732.5L2067.4 732.3L2067.2 732.3L2067.0 732.3L2065.1 732.5L2064.9 732.5L2064.7 732.5L2062.9 733.1L2062.7 733.2L2062.6 733.2L2060.9 734.1L2060.7 734.2L2060.6 734.4L2059.1 735.5L2058.9 735.7L2058.8 735.8L2057.6 737.3L2057.5 737.5L2057.4 737.6L2056.5 739.3L2056.4 739.5L2056.3 739.7L2055.8 741.5L2055.7 741.7L2055.7 741.9L2055.5 743.8L2055.5 744.0L2055.5 744.2L2055.7 746.0L2055.7 746.2L2055.8 746.4L2056.3 748.2L2056.4 748.4L2056.5 748.6L2056.6 748.8L2055.9 749.4L2055.7 749.5L2055.6 749.7L2054.4 751.1L2054.3 751.3L2054.2 751.5L2054.1 751.6L2053.4 751.8L2053.2 751.9L2053.0 752.0L2051.3 752.8L2051.2 753.0L2051.0 753.1L2049.5 754.3L2049.4 754.4L2049.2 754.6L2048.1 754.7L2047.9 754.7L2047.7 754.7L2045.9 755.3L2045.7 755.4L2045.6 755.5L2043.9 756.3L2043.7 756.4L2043.6 756.6L2042.1 757.8L2041.9 757.9L2041.8 758.1L2040.6 759.5L2040.5 759.7L2040.4 759.8L2039.7 761.0L2038.5 761.7L2038.3 761.8L2038.1 762.0L2037.4 762.6L2037.2 762.6L2037.0 762.6L2036.8 762.7L2035.0 763.2L2034.8 763.3L2034.6 763.4L2033.0 764.3L2032.8 764.4L2032.8 764.4L2032.7 764.4L2032.5 764.3L2032.3 764.2L2030.5 763.6L2030.3 763.6L2030.1 763.6L2028.2 763.4L2028.0 763.4L2027.8 763.4L2025.9 763.6L2025.7 763.6L2025.5 763.6L2023.7 764.2L2023.5 764.3L2023.3 764.4L2021.7 765.2L2021.5 765.3L2021.3 765.5L2019.9 766.7L2019.7 766.8L2019.6 767.0L2018.4 768.4L2018.3 768.6L2018.2 768.7L2016.9 769.4L2016.7 769.5L2016.6 769.6L2015.1 770.8L2015.0 770.9L2014.8 771.1L2014.4 771.5L2014.3 771.5L2014.1 771.5L2014.0 771.6L2013.9 771.4L2013.7 771.2L2013.6 771.1L2012.1 769.9L2012.0 769.8L2011.8 769.7L2010.1 768.8L2009.9 768.7L2009.8 768.6L2009.8 768.5L2009.9 768.3L2009.9 768.1L2010.0 766.8L2010.3 766.7L2010.5 766.6L2010.7 766.4L2012.1 765.3L2012.3 765.1L2012.4 765.0L2013.6 763.5L2013.7 763.3L2013.8 763.2L2014.7 761.5L2014.8 761.3L2014.9 761.1L2015.4 759.3L2015.5 759.1L2015.5 758.9L2015.6 758.3L2016.5 757.1L2016.7 756.9L2016.8 756.7L2017.7 755.1L2017.7 754.9L2017.8 754.7L2018.4 752.9L2018.4 752.7L2018.4 752.5L2018.6 750.6L2018.6 750.4L2018.6 750.2L2018.4 748.3L2018.4 748.1L2018.4 747.9L2017.8 746.1L2017.7 745.9L2017.7 745.8L2017.2 745.0L2017.4 743.8L2017.4 743.6L2017.4 743.4L2017.2 741.5L2017.2 741.3L2017.1 741.1L2016.6 739.3L2016.5 739.1L2016.4 738.9L2016.0 738.2L2016.0 738.2L2016.1 738.0L2016.2 736.1L2016.3 735.9L2016.2 735.7L2016.1 733.8L2016.0 733.6L2016.0 733.4L2015.4 731.6L2015.4 731.4L2015.3 731.2L2014.4 729.6L2014.3 729.4L2014.2 729.2L2013.0 727.8L2012.8 727.6L2012.7 727.5L2011.2 726.3L2011.1 726.2L2010.9 726.1L2010.1 725.7L2010.2 725.6L2010.1 725.4L2010.0 723.5L2009.9 723.3L2009.9 723.1L2009.3 721.3L2009.3 721.1L2009.2 720.9L2008.3 719.3L2008.2 719.1L2008.1 718.9L2006.9 717.5L2006.7 717.3L2006.6 717.2L2005.3 716.1L2005.2 715.9L2005.2 715.7L2005.1 715.5L2004.2 713.8L2004.1 713.6L2003.9 713.5L2003.6 713.0L2003.8 711.2L2003.8 711.0L2003.8 710.8L2003.6 709.0L2003.6 708.8L2003.5 708.6L2003.0 706.8L2002.9 706.6L2002.8 706.4L2001.9 704.7L2001.8 704.5L2001.7 704.4L2001.3 703.9L2001.3 703.3L2001.2 703.1L2001.2 702.9L2000.6 701.1L2000.6 700.9L2000.5 700.7L1999.6 699.0L1999.5 698.8L1999.4 698.7L1998.6 697.8L1998.7 697.5L1998.7 697.3L1998.7 697.1L1998.5 695.2L1998.5 695.0L1998.4 694.8L1997.9 693.0L1997.8 692.9L1997.7 692.7L1996.8 691.0L1996.7 690.8L1996.6 690.7L1995.4 689.2L1995.3 689.1L1995.1 688.9L1993.6 687.7L1993.5 687.6L1993.3 687.5L1991.6 686.6L1991.5 686.5L1991.3 686.4L1989.5 685.9L1989.3 685.9L1989.1 685.8L1988.2 685.7L1987.1 684.5L1987.5 684.0L1987.6 683.9L1987.7 683.7L1988.6 682.0L1988.7 681.9L1988.8 681.7L1989.3 679.9L1989.4 679.7L1989.4 679.5L1989.6 677.6L1989.6 677.4L1989.6 677.2L1989.4 675.3L1989.4 675.1L1989.3 674.9L1988.8 673.1L1988.7 672.9L1988.6 672.7L1987.7 671.1L1987.6 670.9L1987.5 670.7L1986.3 669.3L1986.2 669.1L1986.0 669.0L1984.5 667.8L1984.4 667.7L1984.2 667.5L1982.5 666.7L1982.4 666.6L1982.2 666.5L1980.4 666.0L1980.2 665.9L1980.0 665.9L1978.1 665.7L1977.9 665.7L1977.7 665.7L1975.8 665.9L1975.6 665.9L1975.4 666.0L1973.6 666.5L1973.4 666.6L1973.4 666.6L1973.3 666.6L1972.1 665.1L1972.0 664.9L1971.9 664.8L1970.4 663.6L1970.2 663.5L1970.1 663.4L1968.4 662.5L1968.2 662.4L1968.0 662.3L1966.2 661.8L1966.0 661.7L1965.8 661.7L1963.9 661.5L1963.7 661.5L1963.5 661.5L1961.7 661.7L1961.5 661.7L1961.3 661.8L1959.5 662.3L1959.3 662.4L1959.1 662.5L1957.4 663.4L1957.2 663.5L1957.1 663.6L1955.6 664.8L1955.5 664.9L1955.3 665.1L1954.1 666.6L1954.0 666.7L1953.9 666.9L1953.6 667.5L1953.0 666.8L1952.9 666.6L1952.7 666.5L1951.3 665.3L1951.1 665.2L1950.9 665.1L1949.3 664.2L1949.1 664.1L1948.9 664.0L1947.1 663.5L1946.9 663.4L1946.7 663.4L1944.8 663.2L1944.6 663.2L1944.4 663.2L1942.6 663.4L1942.6 663.4L1942.4 663.3L1942.2 663.3L1940.3 663.1L1940.1 663.1L1939.9 663.1L1938.0 663.3L1937.8 663.3L1937.6 663.4L1937.2 663.5L1937.1 663.5L1936.9 663.4L1936.7 663.4L1935.0 663.2L1934.0 662.7L1933.8 662.6L1933.6 662.5L1933.4 662.5L1933.4 662.4L1933.5 662.2L1933.6 662.1L1934.5 660.4L1934.6 660.2L1934.7 660.0L1935.2 658.2L1935.3 658.0L1935.3 657.8L1935.5 656.0L1935.5 655.7L1935.5 655.5L1935.3 653.7L1935.3 653.5L1935.2 653.3L1934.7 651.5L1934.6 651.3L1934.5 651.1L1933.6 649.4L1933.5 649.2L1933.4 649.1L1932.2 647.6L1932.1 647.5L1931.9 647.3L1930.5 646.1L1930.3 646.0L1930.1 645.9L1928.5 645.0L1928.3 644.9L1928.1 644.9L1926.3 644.3L1926.1 644.3L1925.9 644.2L1924.0 644.1L1923.8 644.0L1923.6 644.1L1921.7 644.2L1921.5 644.3L1921.3 644.3L1919.5 644.9L1919.3 644.9L1919.1 645.0L1917.5 645.9L1917.3 646.0L1917.1 646.1L1915.7 647.3L1915.5 647.5L1915.4 647.6L1914.2 649.1L1914.1 649.2L1914.0 649.4L1913.1 651.1L1913.0 651.3L1912.9 651.5L1912.4 653.3L1912.3 653.4L1912.2 653.5L1910.4 654.0L1910.2 654.1L1910.0 654.2L1908.3 655.1L1908.1 655.2L1908.0 655.3L1907.2 655.9L1906.1 656.5L1905.9 656.6L1905.7 656.7L1904.8 657.5L1903.2 657.4L1903.0 657.4L1902.8 657.4L1900.9 657.6L1900.7 657.6L1900.5 657.6L1898.7 658.2L1898.5 658.3L1898.3 658.3L1896.7 659.2L1896.5 659.3L1896.3 659.5L1894.9 660.6L1894.7 660.8L1894.6 660.9L1893.4 662.4L1893.3 662.6L1893.1 662.7L1892.5 664.0L1891.0 663.9L1890.9 663.9L1889.8 663.0L1889.7 662.8L1889.5 662.7L1887.8 661.8L1887.6 661.8L1887.4 661.7L1885.6 661.1L1885.4 661.1L1885.2 661.1L1884.6 661.0L1884.6 660.9L1884.4 660.7L1883.2 659.3L1883.1 659.1L1883.1 659.1L1883.6 658.7L1883.8 658.5L1883.9 658.4L1885.1 656.9L1885.2 656.8L1885.4 656.6L1886.2 654.9L1886.3 654.7L1886.4 654.7L1887.5 655.0L1887.7 655.1L1887.9 655.1L1889.8 655.3L1890.0 655.3L1890.2 655.3L1892.1 655.1L1892.3 655.1L1892.5 655.0L1894.3 654.5L1894.5 654.4L1894.7 654.3L1896.3 653.4L1896.5 653.3L1896.7 653.2L1898.1 652.0L1898.3 651.9L1898.4 651.7L1899.6 650.3L1899.7 650.1L1899.8 649.9L1900.7 648.3L1900.8 648.1L1900.9 647.9L1901.4 646.1L1901.5 645.9L1901.5 645.7L1901.7 643.8L1901.7 643.6L1901.7 643.4L1901.5 641.5L1901.5 641.3L1901.4 641.1L1900.9 639.3L1900.8 639.1L1900.7 638.9L1899.8 637.3L1899.7 637.1L1899.6 636.9L1898.4 635.5L1898.3 635.3L1898.1 635.2L1896.7 634.0L1896.5 633.9L1896.3 633.8L1894.7 632.9L1894.5 632.8L1894.3 632.7L1892.5 632.2L1892.3 632.1L1892.1 632.1L1890.2 631.9L1890.0 631.9L1889.8 631.9L1887.9 632.1L1887.7 632.1L1887.5 632.2L1885.7 632.7L1885.5 632.8L1885.3 632.9L1883.7 633.8L1883.5 633.9L1883.3 634.0L1881.9 635.2L1881.7 635.3L1881.6 635.5L1880.4 636.9L1880.3 637.1L1880.2 637.3L1879.3 638.9L1879.2 639.1L1879.2 639.2L1878.0 638.8L1877.8 638.8L1877.6 638.7L1875.7 638.6L1874.7 638.3L1874.5 638.2L1874.3 638.2L1872.5 638.0L1872.3 638.0L1872.0 638.0L1870.2 638.2L1870.0 638.2L1869.8 638.3L1868.0 638.8L1867.8 638.9L1867.6 639.0L1867.4 639.0L1867.2 639.0L1867.0 638.9L1866.8 638.9L1866.7 638.9L1866.4 638.7L1866.2 638.5L1866.0 638.4L1864.4 637.5L1864.2 637.4L1864.0 637.4L1862.2 636.8L1862.0 636.8L1861.8 636.8L1859.9 636.6L1859.7 636.6L1859.5 636.6L1857.6 636.8L1857.4 636.8L1857.2 636.8L1855.4 637.4L1855.2 637.4L1855.0 637.5L1854.3 637.9L1854.2 637.9L1854.0 638.0L1853.8 638.0L1852.0 638.6L1851.8 638.6L1851.6 638.7L1850.7 639.2L1850.5 639.1L1850.4 639.0L1850.1 638.9L1850.5 638.3L1850.5 638.1L1850.6 637.9L1851.2 636.1L1851.2 635.9L1851.2 635.7L1851.4 633.8L1851.4 633.6L1851.4 633.4L1851.2 631.5L1851.2 631.3L1851.2 631.1L1850.6 629.3L1850.5 629.1L1850.5 628.9L1849.6 627.3L1849.5 627.1L1849.3 626.9L1848.1 625.5L1848.0 625.3L1847.9 625.2L1846.4 624.0L1846.2 623.9L1846.1 623.8L1844.4 622.9L1844.2 622.8L1844.0 622.7L1842.2 622.2L1842.0 622.1L1841.8 622.1L1839.9 621.9L1839.7 621.9L1839.5 621.9L1837.7 622.1L1837.5 622.1L1837.3 622.2L1835.5 622.7L1835.3 622.8L1835.2 622.8L1835.3 622.4L1835.4 622.2L1835.4 622.0L1835.6 620.2L1835.6 620.0L1835.6 619.8L1835.4 617.9L1835.4 617.7L1835.3 617.5L1834.8 615.7L1834.7 615.5L1834.6 615.3L1833.8 613.6L1833.6 613.5L1833.5 613.3L1832.3 611.8L1832.2 611.7L1832.0 611.5L1830.6 610.4L1830.4 610.2L1830.2 610.1L1828.6 609.2L1828.4 609.2L1828.2 609.1L1826.4 608.5L1826.2 608.5L1826.0 608.5L1824.1 608.3L1823.9 608.3L1823.7 608.3L1821.8 608.5L1821.6 608.5L1821.4 608.5L1819.6 609.1L1819.4 609.2L1819.3 609.2L1817.6 610.1L1817.4 610.2L1817.3 610.4L1816.2 611.2L1816.0 611.2L1815.8 611.1L1815.6 611.1L1813.7 610.9L1813.5 610.9L1813.3 610.9L1811.4 611.1L1811.2 611.1L1811.0 611.2L1809.2 611.7L1809.0 611.8L1808.9 611.9L1808.8 611.9L1807.5 611.5L1807.3 611.5L1807.1 611.4L1805.2 611.3L1805.0 611.2L1804.8 611.3L1802.9 611.4L1802.7 611.5L1802.5 611.5L1800.7 612.1L1800.5 612.1L1800.3 612.2L1800.3 612.2L1800.3 612.2L1800.1 612.2L1798.2 612.0L1798.0 612.0L1797.8 612.0L1795.9 612.2L1795.7 612.2L1795.5 612.3L1794.4 612.6L1794.3 612.5L1794.1 612.4L1793.9 612.4L1792.1 611.8L1791.9 611.8L1791.7 611.7L1789.8 611.5L1789.6 611.5L1789.4 611.5L1787.5 611.7L1787.3 611.8L1787.1 611.8L1785.3 612.4L1785.1 612.4L1784.9 612.5L1784.6 612.7L1782.9 612.2L1782.7 612.1L1782.5 612.1L1780.7 611.9L1780.5 611.9L1780.3 611.9L1778.4 612.1L1778.2 612.1L1778.0 612.2L1776.3 612.7L1774.8 612.2L1774.6 612.2L1774.4 612.2L1772.5 612.0L1772.3 612.0L1772.1 612.0L1770.2 612.2L1770.0 612.2L1769.8 612.2L1768.5 612.7L1767.9 612.3L1767.7 612.2L1767.5 612.2L1765.7 611.6L1765.5 611.6L1765.3 611.6L1763.4 611.4L1763.2 611.4L1763.0 611.4L1761.1 611.6L1760.9 611.6L1760.7 611.6L1758.9 612.2L1758.7 612.2L1758.5 612.3L1757.5 612.9L1755.9 612.4L1755.7 612.4L1755.5 612.3L1753.6 612.1L1753.4 612.1L1753.2 612.1L1751.3 612.3L1751.1 612.4L1750.9 612.4L1750.4 612.6L1749.2 612.2L1749.0 612.2L1748.8 612.1L1746.9 612.0L1746.7 611.9L1746.5 612.0L1744.7 612.1L1744.5 612.2L1744.3 612.2L1743.1 612.6L1743.0 612.5L1741.2 612.0L1741.0 611.9L1740.8 611.9L1739.1 611.7L1739.0 611.7L1738.8 611.6L1737.0 611.0L1736.8 611.0L1736.6 611.0L1734.7 610.8L1734.5 610.8L1734.3 610.8L1732.4 611.0L1732.2 611.0L1732.0 611.0L1730.2 611.6L1730.0 611.7L1729.8 611.7L1729.4 612.0L1727.8 612.2L1727.6 612.2L1727.4 612.2L1726.4 612.5L1725.0 611.7L1724.8 611.7L1724.6 611.6L1722.8 611.0L1722.6 611.0L1722.4 611.0L1720.5 610.8L1720.3 610.8L1720.1 610.8L1718.3 611.0L1718.1 611.0L1717.9 611.0L1716.1 611.6L1715.9 611.7L1715.7 611.7L1714.2 612.5L1713.5 612.3L1713.3 612.3L1713.1 612.2L1711.2 612.0L1711.0 612.0L1710.9 612.0L1710.3 611.9L1710.1 611.8L1709.9 611.8L1708.1 611.6L1707.9 611.6L1707.7 611.6L1705.8 611.8L1705.6 611.8L1705.4 611.9L1704.4 612.2L1703.8 612.0L1703.6 611.9L1703.4 611.9L1701.5 611.7L1701.3 611.7L1701.1 611.7L1700.0 611.8L1698.4 610.9L1698.2 610.8L1698.0 610.8L1696.2 610.2L1696.0 610.2L1695.8 610.1L1693.9 609.9L1693.7 609.9L1693.5 609.9L1691.6 610.1L1691.4 610.2L1691.2 610.2L1689.4 610.8L1689.2 610.8L1689.0 610.9L1687.4 611.8L1687.2 611.9L1687.0 612.0L1685.6 613.2L1685.4 613.4L1685.3 613.5L1684.1 615.0L1684.0 615.1L1683.9 615.3L1683.7 615.7L1682.6 615.1L1682.4 615.0L1682.2 614.9L1680.4 614.4L1680.2 614.3L1680.0 614.3L1678.1 614.1L1677.9 614.1L1677.7 614.1L1675.8 614.3L1675.6 614.3L1675.4 614.4L1673.6 614.9L1673.4 615.0L1673.2 615.1L1672.4 615.5L1672.2 615.2L1672.0 615.0L1671.9 614.9L1670.4 613.7L1670.2 613.6L1670.1 613.5L1668.4 612.6L1668.2 612.5L1668.0 612.4L1666.2 611.9L1666.0 611.8L1665.8 611.8L1664.0 611.6L1663.7 611.6L1663.5 611.6L1661.7 611.8L1661.5 611.8L1661.3 611.9L1659.5 612.4L1659.3 612.5L1659.1 612.6L1657.4 613.5L1657.2 613.6L1657.1 613.7L1655.6 614.9L1655.5 615.0L1655.3 615.2L1654.1 616.6L1654.0 616.8L1653.9 617.0L1653.0 618.6L1652.9 618.8L1652.9 619.0L1652.3 620.8L1652.3 621.0L1652.2 621.2L1652.1 623.1L1652.1 623.2L1650.4 622.7L1650.2 622.6L1650.0 622.6L1648.1 622.4L1647.9 622.4L1647.7 622.4L1645.9 622.6L1645.7 622.6L1645.5 622.7L1643.7 623.2L1643.5 623.3L1643.3 623.4L1641.6 624.3L1641.4 624.4L1641.3 624.5L1639.8 625.7L1639.7 625.8L1639.5 626.0L1638.3 627.5L1638.2 627.6L1638.1 627.8L1637.3 629.2L1637.2 629.1L1636.0 627.7L1635.9 627.5L1635.8 627.4L1634.3 626.2L1634.1 626.1L1634.0 626.0L1632.3 625.1L1632.1 625.0L1631.9 624.9L1630.1 624.4L1629.9 624.3L1629.7 624.3L1627.8 624.1L1627.6 624.1L1627.4 624.1L1625.6 624.3L1625.3 624.3L1625.1 624.4L1623.3 624.9L1623.2 625.0L1623.0 625.1L1621.7 625.7L1621.5 625.3L1621.4 625.1L1621.3 625.0L1620.1 623.5L1619.9 623.4L1619.8 623.2L1618.3 622.0L1618.2 621.9L1618.0 621.8L1616.3 620.9L1616.1 620.8L1615.9 620.7L1614.1 620.2L1613.9 620.1L1613.7 620.1L1611.9 619.9L1611.7 619.9L1611.4 619.9L1609.6 620.1L1609.4 620.1L1609.2 620.2L1607.4 620.7L1607.2 620.8L1607.0 620.9L1605.3 621.8L1605.2 621.9L1605.0 622.0L1604.4 622.5L1603.7 621.1L1603.6 621.0L1603.4 620.8L1602.3 619.3L1602.1 619.2L1602.0 619.1L1600.5 617.9L1600.3 617.7L1600.2 617.6L1598.5 616.7L1598.3 616.7L1598.1 616.6L1596.3 616.0L1596.1 616.0L1595.9 616.0L1594.0 615.8L1593.8 615.8L1593.6 615.8L1591.8 616.0L1591.6 616.0L1591.4 616.0L1589.6 616.6L1589.4 616.7L1589.2 616.7L1588.0 617.4L1586.9 616.7L1586.7 616.7L1586.5 616.6L1584.7 616.0L1584.5 616.0L1584.3 616.0L1582.4 615.8L1582.2 615.8L1582.0 615.8L1580.1 616.0L1579.9 616.0L1579.7 616.0L1578.1 616.5L1576.7 615.4L1576.5 615.2L1576.4 615.1L1574.7 614.2L1574.5 614.2L1574.3 614.1L1572.5 613.5L1572.3 613.5L1572.1 613.5L1570.2 613.3L1570.0 613.3L1569.8 613.3L1568.0 613.5L1567.8 613.5L1567.6 613.5L1565.8 614.1L1565.6 614.2L1565.4 614.2L1563.7 615.1L1563.5 615.2L1563.4 615.4L1561.9 616.6L1561.8 616.7L1561.6 616.8L1560.5 618.2L1560.1 617.7L1560.0 617.5L1559.9 617.4L1558.4 616.2L1558.2 616.1L1558.1 616.0L1556.4 615.1L1556.2 615.0L1556.0 614.9L1554.2 614.4L1554.0 614.3L1553.8 614.3L1551.9 614.1L1551.7 614.1L1551.5 614.1L1549.7 614.3L1549.4 614.3L1549.2 614.4L1547.4 614.9L1547.3 615.0L1547.1 615.1L1545.4 616.0L1545.2 616.1L1545.1 616.2L1543.6 617.4L1543.5 617.5L1543.3 617.7L1542.1 619.1L1542.0 619.3L1541.9 619.5L1541.0 621.1L1540.9 621.3L1540.9 621.5L1540.3 623.3L1540.3 623.5L1540.2 623.5L1538.6 622.6L1538.4 622.5L1538.2 622.4L1536.4 621.9L1536.2 621.8L1536.0 621.8L1534.1 621.6L1533.9 621.6L1533.7 621.6L1531.8 621.8L1531.6 621.8L1531.4 621.9L1529.6 622.4L1529.4 622.5L1529.3 622.6L1527.6 623.5L1527.4 623.6L1527.3 623.7L1525.8 624.9L1525.6 625.0L1525.6 625.1L1525.5 625.0L1524.6 623.3L1524.5 623.1L1524.4 623.0L1523.2 621.5L1523.1 621.4L1522.9 621.2L1521.4 620.0L1521.3 619.9L1521.1 619.8L1519.4 618.9L1519.3 618.8L1519.1 618.7L1517.3 618.2L1517.1 618.2L1516.9 618.1L1515.0 617.9L1514.8 617.9L1514.6 617.9L1512.7 618.1L1512.5 618.2L1512.3 618.2L1511.1 618.6L1510.7 617.0L1510.6 616.8L1510.5 616.6L1509.6 615.0L1509.5 614.8L1509.4 614.6L1508.2 613.2L1508.1 613.0L1507.9 612.9L1506.5 611.7L1506.3 611.6L1506.1 611.5L1504.5 610.6L1504.3 610.5L1504.1 610.4L1502.3 609.9L1502.1 609.8L1501.9 609.8L1500.0 609.6L1499.8 609.6L1499.6 609.6L1497.7 609.8L1497.5 609.8L1497.3 609.9L1495.5 610.4L1495.3 610.5L1495.1 610.6L1493.5 611.5L1493.3 611.6L1493.1 611.7L1491.7 612.9L1491.5 613.0L1491.4 613.2L1490.2 614.6L1490.1 614.8L1490.0 615.0L1489.5 615.9L1488.4 615.8L1488.1 615.8L1487.9 615.8L1486.1 616.0L1485.9 616.0L1485.7 616.0L1483.9 616.6L1483.7 616.7L1483.5 616.7L1481.8 617.6L1481.6 617.7L1481.5 617.9L1480.0 619.1L1479.9 619.2L1479.7 619.3L1479.7 619.3L1479.6 619.3L1479.4 619.3L1477.5 619.1L1477.3 619.1L1477.1 619.1L1475.3 619.3L1475.0 619.3L1474.8 619.4L1473.0 619.9L1472.9 620.0L1472.7 620.1L1471.8 620.5L1470.7 620.2L1470.5 620.1L1470.3 620.1L1468.4 619.9L1468.2 619.9L1468.0 619.9L1466.1 620.1L1465.9 620.1L1465.7 620.2L1463.9 620.7L1463.7 620.8L1463.5 620.9L1461.9 621.8L1461.7 621.9L1461.5 622.0L1460.1 623.2L1459.9 623.4L1459.8 623.5L1459.7 623.3L1459.6 623.1L1459.5 623.0L1458.3 621.5L1458.1 621.4L1458.0 621.2L1456.5 620.0L1456.4 619.9L1456.2 619.8L1454.5 618.9L1454.3 618.8L1454.2 618.7L1452.3 618.2L1452.1 618.2L1451.9 618.1L1450.1 617.9L1449.9 617.9L1449.7 617.9L1447.8 618.1L1447.6 618.2L1447.4 618.2L1445.6 618.7L1445.4 618.8L1445.2 618.9L1443.5 619.8L1443.4 619.9L1443.2 620.0L1441.7 621.2L1441.6 621.4L1441.5 621.5L1440.3 623.0L1440.1 623.1L1440.0 623.3L1439.1 625.0L1439.1 625.1L1439.0 625.3L1438.4 627.1L1438.4 627.3L1438.4 627.5L1438.2 629.4L1438.2 629.6L1438.2 629.8L1438.2 630.0L1437.6 629.9L1437.4 629.9L1437.2 629.9L1435.3 630.1L1435.1 630.1L1434.9 630.2L1433.1 630.7L1432.9 630.8L1432.7 630.9L1431.1 631.8L1430.9 631.9L1430.7 632.0L1429.3 633.2L1429.1 633.3L1429.0 633.5L1427.9 634.8L1426.6 633.7L1426.4 633.5L1426.2 633.4L1424.6 632.6L1424.4 632.5L1424.2 632.4L1423.8 632.3L1424.2 632.2L1424.4 632.1L1424.6 632.0L1426.2 631.1L1426.4 631.0L1426.6 630.9L1428.0 629.7L1428.2 629.6L1428.3 629.4L1429.5 628.0L1429.6 627.8L1429.7 627.6L1430.6 626.0L1430.7 625.8L1430.8 625.6L1431.3 623.8L1431.4 623.6L1431.4 623.4L1431.6 621.5L1431.6 621.3L1431.6 621.1L1431.4 619.2L1431.4 619.0L1431.3 618.8L1430.8 617.0L1430.7 616.8L1430.6 616.6L1429.7 615.0L1429.6 614.8L1429.5 614.6L1428.3 613.2L1428.2 613.0L1428.0 612.9L1426.6 611.7L1426.4 611.6L1426.2 611.5L1424.6 610.6L1424.4 610.5L1424.2 610.4L1422.4 609.9L1422.2 609.8L1422.0 609.8L1420.1 609.6L1419.9 609.6L1419.7 609.6L1417.8 609.8L1417.6 609.8L1417.4 609.9L1415.6 610.4L1415.4 610.5L1415.2 610.6L1413.6 611.5L1413.4 611.6L1413.2 611.7L1411.8 612.9L1411.6 613.0L1411.5 613.2L1410.3 614.6L1410.2 614.8L1410.1 615.0L1409.6 615.8L1408.3 615.1L1408.1 615.0L1407.9 614.9L1406.1 614.4L1405.9 614.3L1405.7 614.3L1403.8 614.1L1403.6 614.1L1403.4 614.1L1401.5 614.3L1401.3 614.3L1401.1 614.4L1399.3 614.9L1399.1 615.0L1398.9 615.1L1397.3 616.0L1397.1 616.1L1396.9 616.2L1395.5 617.4L1395.3 617.5L1395.2 617.7L1394.0 619.1L1393.9 619.3L1393.8 619.5L1392.9 621.1L1392.8 621.3L1392.7 621.5L1392.2 623.3L1392.1 623.5L1392.1 623.7L1391.9 625.6L1391.9 625.8L1391.9 626.0L1392.1 627.9L1392.1 628.1L1392.2 628.3L1392.7 630.0L1392.5 629.8L1392.4 629.7L1392.2 629.5L1390.8 628.3L1390.6 628.2L1390.4 628.1L1388.8 627.2L1388.6 627.1L1388.4 627.1L1386.6 626.5L1386.4 626.5L1386.2 626.4L1384.3 626.3L1384.1 626.2L1383.9 626.3L1382.0 626.4L1381.8 626.5L1381.6 626.5L1379.8 627.1L1379.6 627.1L1379.5 627.2L1377.8 628.1L1377.6 628.2L1377.5 628.3L1376.0 629.5L1375.8 629.7L1375.7 629.8L1374.5 631.3L1374.4 631.4L1374.3 631.6L1373.4 633.3L1373.3 633.5L1373.2 633.7L1372.7 635.5L1372.6 635.7L1372.6 635.9L1372.4 637.7L1372.4 637.9L1372.4 638.2L1372.6 640.0L1372.6 640.2L1372.7 640.4L1373.2 642.2L1373.3 642.4L1373.4 642.6L1374.3 644.3L1374.4 644.4L1374.5 644.6L1375.7 646.1L1375.8 646.2L1376.0 646.4L1377.5 647.6L1377.6 647.7L1377.8 647.8L1379.5 648.7L1379.6 648.8L1379.8 648.8L1381.6 649.4L1381.8 649.4L1382.0 649.5L1382.3 649.5L1381.1 650.1L1380.9 650.2L1380.8 650.3L1379.3 651.5L1379.2 651.6L1379.0 651.8L1377.8 653.3L1377.7 653.4L1377.6 653.6L1376.7 655.3L1376.6 655.4L1376.6 655.6L1376.0 657.4L1376.0 657.6L1375.9 657.8L1375.8 659.7L1375.8 659.9L1375.8 660.1L1375.9 662.0L1376.0 662.2L1376.0 662.4L1376.6 664.2L1376.6 664.4L1376.7 664.6L1377.6 666.2L1377.7 666.4L1377.8 666.6L1379.0 668.0L1379.2 668.2L1379.3 668.3L1380.6 669.4L1380.2 670.8L1380.1 671.0L1380.1 671.2L1379.9 673.0L1379.9 673.2L1379.9 673.4L1380.1 675.3L1380.1 675.5L1380.2 675.7L1380.7 677.5L1380.8 677.7L1380.9 677.9L1381.5 679.1L1380.9 680.2L1380.8 680.4L1380.7 680.6L1380.2 682.4L1380.1 682.6L1380.1 682.8L1379.9 684.7L1379.9 684.9L1379.9 685.1L1380.1 687.0L1380.1 687.2L1380.2 687.4L1380.7 689.2L1380.8 689.4L1380.9 689.6L1381.0 689.8L1381.0 689.8L1380.8 689.9L1380.7 690.1L1379.5 691.5L1379.4 691.7L1379.3 691.9L1378.4 693.5L1378.3 693.7L1378.2 693.9L1377.7 695.7L1377.6 695.9L1377.6 696.1L1377.4 698.0L1377.4 698.2L1377.4 698.4L1377.6 700.3L1377.6 700.5L1377.7 700.7L1378.2 702.5L1378.3 702.7L1378.4 702.9L1379.3 704.5L1379.4 704.7L1379.5 704.9L1379.8 705.2L1379.3 705.6L1379.2 705.7L1379.0 705.9L1377.8 707.3L1377.7 707.5L1377.6 707.7L1376.7 709.4L1376.6 709.5L1376.6 709.7L1376.0 711.5L1376.0 711.7L1375.9 711.9L1375.8 713.8L1375.8 714.0L1375.8 714.2L1375.9 716.1L1376.0 716.3L1376.0 716.5L1376.6 718.3L1376.6 718.5L1376.7 718.7L1377.6 720.3L1377.7 720.5L1377.8 720.7L1379.0 722.1L1379.2 722.3L1379.3 722.4L1380.8 723.6L1380.9 723.7L1381.1 723.8L1382.8 724.7L1383.0 724.8L1383.2 724.9L1385.0 725.4L1385.2 725.5L1385.4 725.5L1387.2 725.7L1387.5 725.7L1387.7 725.7L1389.5 725.5L1389.7 725.5L1389.9 725.4L1391.3 725.0L1391.8 725.9L1391.8 726.1L1391.6 728.0L1391.6 728.2L1391.6 728.4L1391.8 730.2L1391.8 730.4L1391.8 730.6L1392.4 732.4L1392.5 732.6L1392.5 732.8L1393.2 734.1L1393.2 734.2L1392.1 735.5L1391.6 735.9L1390.8 735.2L1390.6 735.1L1390.4 735.0L1388.8 734.1L1388.6 734.0L1388.4 733.9L1386.6 733.4L1386.4 733.3L1386.2 733.3L1384.3 733.1L1384.1 733.1L1383.9 733.1L1382.0 733.3L1381.8 733.3L1381.6 733.4L1379.8 733.9L1379.6 734.0L1379.5 734.1L1377.8 735.0L1377.6 735.1L1377.5 735.2L1376.0 736.4L1375.8 736.5L1375.7 736.7L1374.5 738.1L1374.4 738.3L1374.3 738.5L1373.4 740.1L1373.3 740.3L1373.2 740.5L1372.7 742.3L1372.6 742.5L1372.6 742.7L1372.4 744.6L1372.4 744.8L1372.4 745.0L1372.6 746.9L1372.6 747.1L1372.7 747.3L1373.2 749.1L1373.3 749.3L1373.4 749.5ZM2162.5 782.8L2162.2 782.4L2162.0 782.3L2161.9 782.2L2160.4 781.0L2160.3 780.8L2160.1 780.7L2158.4 779.8L2158.3 779.8L2158.1 779.7L2156.3 779.1L2156.1 779.1L2155.9 779.1L2154.0 778.9L2154.0 778.9L2154.0 778.9L2153.9 778.8L2154.3 777.6L2154.3 777.4L2154.4 777.1L2154.4 776.9L2154.4 776.9L2154.6 777.0L2156.4 777.5L2156.6 777.6L2156.8 777.6L2158.7 777.8L2158.9 777.8L2159.1 777.8L2161.0 777.6L2161.2 777.6L2161.4 777.5L2162.3 777.2L2162.3 777.3L2162.3 777.5L2162.2 777.7L2162.1 779.5L2162.0 779.7L2162.1 780.0L2162.2 781.8L2162.3 782.0L2162.3 782.2ZM1930.4 973.5L1930.4 973.4L1929.8 971.6L1929.7 971.4L1929.7 971.2L1928.8 969.5L1928.7 969.3L1928.5 969.2L1928.1 968.7L1928.3 968.1L1928.4 967.9L1928.4 967.7L1928.6 965.8L1928.6 965.6L1928.6 965.4L1928.4 963.5L1928.4 963.3L1928.3 963.1L1928.2 962.7L1928.7 961.7L1928.8 961.5L1928.8 961.4L1929.4 959.6L1929.4 959.4L1929.4 959.1L1929.6 957.3L1929.6 957.1L1929.6 956.9L1929.5 956.0L1929.9 955.4L1929.9 955.2L1930.0 955.0L1930.6 953.2L1930.6 953.0L1930.6 952.8L1930.8 950.9L1930.8 950.7L1930.8 950.5L1930.6 948.7L1930.6 948.5L1930.6 948.3L1930.0 946.5L1929.9 946.3L1929.9 946.1L1929.3 945.1L1929.7 944.3L1929.8 944.1L1929.9 943.9L1930.4 942.1L1930.5 941.9L1930.5 941.7L1930.7 939.8L1930.7 939.6L1930.7 939.4L1930.6 938.8L1931.1 937.1L1931.2 936.9L1931.2 936.7L1931.4 934.9L1931.4 934.7L1931.4 934.5L1931.2 932.6L1931.2 932.4L1931.1 932.2L1930.8 931.3L1930.8 931.3L1931.4 929.5L1931.4 929.3L1931.5 929.1L1931.7 927.2L1931.7 927.0L1931.7 926.8L1931.5 924.9L1931.4 924.7L1931.4 924.5L1931.0 923.3L1931.4 922.8L1931.6 922.7L1931.7 922.5L1932.6 920.8L1932.7 920.6L1932.7 920.5L1933.3 918.7L1933.3 918.5L1933.3 918.2L1933.5 916.5L1933.5 916.5L1934.4 914.9L1934.5 914.7L1934.6 914.5L1935.1 912.7L1935.2 912.5L1935.2 912.3L1935.2 911.7L1935.3 911.8L1937.2 911.9L1937.4 911.9L1937.6 911.9L1939.5 911.8L1939.7 911.7L1939.9 911.7L1941.7 911.1L1941.9 911.1L1942.1 911.0L1942.2 910.9L1942.3 911.0L1942.5 911.1L1942.7 911.2L1944.5 911.7L1944.7 911.8L1944.9 911.8L1946.8 912.0L1947.0 912.0L1947.2 912.0L1949.0 911.8L1949.2 911.8L1949.4 911.7L1950.0 911.5L1951.5 912.0L1951.7 912.0L1951.9 912.1L1953.8 912.2L1954.0 912.2L1954.4 912.6L1954.5 912.7L1954.7 912.8L1954.7 912.8L1954.7 913.0L1954.9 914.9L1955.0 915.1L1955.0 915.3L1955.6 917.1L1955.6 917.3L1955.7 917.4L1956.5 919.0L1956.5 919.5L1956.5 919.7L1956.5 919.9L1956.7 921.8L1956.7 922.0L1956.8 922.2L1957.3 924.0L1957.4 924.2L1957.5 924.4L1958.3 926.1L1958.5 926.2L1958.6 926.4L1959.2 927.2L1959.0 928.0L1958.9 928.2L1958.9 928.4L1958.7 930.3L1958.7 930.5L1958.7 930.7L1958.9 932.6L1958.9 932.8L1959.0 933.0L1959.5 934.8L1959.6 935.0L1959.7 935.2L1959.9 935.7L1959.8 936.1L1959.7 936.3L1959.7 936.5L1959.5 938.4L1959.5 938.6L1959.5 938.8L1959.7 940.7L1959.7 940.9L1959.8 941.1L1960.3 942.9L1960.4 943.1L1960.5 943.3L1960.7 943.8L1960.6 944.8L1960.6 945.0L1960.6 945.2L1960.8 947.1L1960.8 947.3L1960.9 947.5L1961.4 949.3L1961.5 949.5L1961.6 949.6L1962.4 951.1L1962.3 951.5L1962.2 951.7L1962.2 951.9L1962.0 953.7L1962.0 954.0L1962.0 954.2L1962.1 954.8L1961.5 955.5L1961.3 955.7L1961.2 955.9L1960.3 957.5L1960.3 957.7L1960.2 957.9L1959.6 959.7L1959.6 959.9L1959.6 960.1L1959.4 962.0L1959.4 962.2L1959.4 962.4L1959.6 964.3L1959.6 964.5L1959.6 964.7L1960.1 966.1L1959.7 967.3L1959.7 967.4L1959.2 967.3L1959.0 967.3L1958.8 967.3L1956.9 967.5L1956.7 967.5L1956.5 967.6L1954.7 968.1L1954.5 968.2L1954.3 968.3L1954.0 968.4L1952.7 968.0L1952.5 968.0L1952.3 967.9L1950.4 967.7L1950.2 967.7L1950.0 967.7L1948.1 967.9L1947.9 968.0L1947.7 968.0L1945.9 968.6L1945.7 968.6L1945.5 968.7L1945.4 968.8L1945.1 968.6L1944.9 968.6L1944.7 968.5L1942.9 967.9L1942.7 967.9L1942.5 967.9L1940.6 967.7L1940.4 967.7L1940.2 967.7L1938.4 967.9L1938.2 967.9L1938.0 967.9L1936.2 968.5L1936.0 968.6L1935.8 968.6L1934.1 969.5L1933.9 969.6L1933.8 969.8L1932.3 971.0L1932.2 971.1L1932.0 971.2L1930.8 972.7L1930.7 972.9L1930.6 973.0ZM1628.5 885.0L1629.9 883.9L1630.1 883.7L1630.2 883.6L1631.4 882.1L1631.5 882.0L1631.6 881.8L1632.5 880.1L1632.6 879.9L1632.7 879.7L1632.8 879.4L1632.9 879.7L1633.0 879.9L1633.1 880.1L1633.9 881.8L1634.0 882.0L1634.2 882.1L1634.6 882.7L1634.2 883.3L1634.0 883.4L1633.9 883.6L1633.1 885.3L1633.0 885.5L1632.9 885.7L1632.3 887.5L1632.3 887.7L1632.3 887.7L1632.2 887.6L1632.1 887.5L1631.9 887.3L1630.5 886.2L1630.3 886.0L1630.1 885.9ZM1654.5 742.7L1654.5 742.6L1653.6 741.0L1653.5 740.8L1653.4 740.6L1652.2 739.2L1652.0 739.0L1651.9 738.9L1650.6 737.9L1652.2 737.4L1652.4 737.3L1652.6 737.2L1654.3 736.3L1654.4 736.2L1654.6 736.1L1656.1 734.9L1656.2 734.8L1656.3 734.6L1657.5 733.2L1657.7 733.0L1657.8 732.8L1658.3 731.8L1659.1 732.2L1659.3 732.3L1659.5 732.4L1661.3 732.9L1661.5 733.0L1661.7 733.0L1663.5 733.2L1663.7 733.2L1664.0 733.2L1665.8 733.0L1666.0 733.0L1666.2 732.9L1666.3 732.9L1666.4 733.6L1666.4 733.8L1666.5 734.0L1667.0 735.8L1667.1 736.0L1667.2 736.2L1668.1 737.8L1668.2 738.0L1668.3 738.2L1669.2 739.2L1669.1 739.4L1668.4 739.1L1668.2 739.0L1668.0 738.9L1666.2 738.4L1666.0 738.3L1665.8 738.3L1664.0 738.1L1663.7 738.1L1663.5 738.1L1661.7 738.3L1661.5 738.3L1661.3 738.4L1659.5 738.9L1659.3 739.0L1659.1 739.1L1657.4 740.0L1657.2 740.1L1657.1 740.2L1655.6 741.4L1655.5 741.5L1655.3 741.7ZM1606.6 743.9L1606.4 743.7L1606.3 743.5L1606.1 743.4L1604.7 742.2L1604.5 742.1L1604.3 742.0L1602.7 741.1L1602.5 741.0L1602.3 740.9L1600.5 740.4L1600.3 740.3L1600.1 740.3L1598.2 740.1L1598.0 740.1L1597.8 740.1L1595.9 740.3L1595.7 740.3L1595.5 740.4L1593.7 740.9L1593.5 741.0L1593.3 741.1L1591.7 742.0L1591.5 742.1L1591.3 742.2L1589.9 743.4L1589.7 743.5L1589.6 743.7L1588.4 745.1L1588.3 745.3L1588.2 745.5L1587.3 747.1L1587.2 747.3L1587.1 747.5L1586.7 748.8L1586.4 748.5L1586.2 748.4L1586.0 748.3L1584.7 747.6L1587.1 738.9L1587.8 739.0L1588.0 739.0L1588.2 739.0L1590.1 738.8L1590.3 738.8L1590.5 738.8L1592.3 738.2L1592.5 738.1L1592.7 738.1L1594.3 737.2L1594.5 737.1L1594.7 736.9L1596.1 735.7L1596.3 735.6L1596.4 735.5L1597.6 734.0L1597.7 733.8L1597.9 733.7L1598.7 732.0L1598.8 731.8L1598.9 731.6L1599.4 729.8L1599.5 729.6L1599.5 729.4L1599.5 729.3L1599.7 729.4L1599.8 729.6L1600.0 729.7L1601.7 730.6L1601.8 730.6L1602.0 730.7L1603.8 731.3L1604.0 731.3L1604.2 731.3L1606.1 731.5L1606.3 731.5L1606.3 731.7L1606.5 733.6L1606.5 733.8L1606.6 734.0L1607.1 735.8L1607.2 736.0L1607.3 736.2L1608.1 737.8L1608.2 738.0L1608.4 738.2L1609.0 739.0L1608.4 739.8L1608.2 740.0L1608.1 740.1L1607.3 741.8L1607.2 742.0L1607.1 742.2ZM1594.8 717.8L1594.7 717.7L1594.5 717.6L1594.3 717.5L1592.7 716.6L1592.5 716.5L1592.3 716.5L1590.5 715.9L1590.3 715.9L1590.1 715.8L1588.2 715.6L1588.0 715.6L1587.8 715.6L1587.3 715.7L1587.2 715.6L1587.2 715.4L1587.1 715.2L1586.2 713.5L1586.1 713.3L1586.0 713.2L1584.8 711.7L1584.6 711.6L1584.5 711.4L1583.0 710.2L1582.9 710.1L1582.7 710.0L1581.4 709.3L1582.3 709.1L1582.5 709.0L1582.7 708.9L1584.4 708.0L1584.5 707.9L1584.7 707.8L1586.1 706.6L1586.3 706.5L1586.4 706.3L1587.6 704.9L1587.8 704.7L1587.9 704.5L1588.0 704.4L1588.9 704.6L1589.1 704.7L1589.3 704.7L1591.1 704.9L1591.3 704.9L1591.6 704.9L1593.4 704.7L1593.6 704.7L1593.8 704.6L1595.6 704.1L1595.8 704.0L1596.0 703.9L1597.7 703.0L1597.8 702.9L1598.0 702.8L1598.6 702.4L1599.1 704.2L1599.2 704.3L1599.3 704.5L1600.2 706.2L1600.3 706.4L1600.4 706.5L1601.6 708.0L1601.7 708.1L1601.9 708.3L1602.5 708.8L1602.0 709.0L1601.8 709.0L1601.7 709.1L1600.0 710.0L1599.8 710.1L1599.7 710.2L1598.2 711.4L1598.1 711.6L1597.9 711.7L1596.7 713.2L1596.6 713.3L1596.5 713.5L1595.6 715.2L1595.5 715.4L1595.4 715.6L1594.9 717.4L1594.8 717.6L1594.8 717.8ZM1613.8 710.9L1614.3 710.7L1614.5 710.7L1614.7 710.6L1615.1 710.3L1614.7 711.0L1614.7 711.2L1614.6 711.4L1614.5 711.5L1614.4 711.4ZM1620.4 705.2L1620.7 704.5L1620.8 704.3L1620.9 704.2L1621.4 702.3L1621.5 702.1L1621.5 701.9L1621.7 700.1L1621.7 699.9L1621.7 699.7L1621.7 699.4L1625.5 698.6L1625.6 698.7L1626.5 700.4L1626.6 700.5L1626.7 700.7L1627.9 702.2L1628.0 702.3L1628.2 702.5L1629.6 703.6L1629.8 703.8L1630.0 703.9L1631.6 704.8L1631.8 704.9L1632.0 704.9L1632.9 705.2L1632.5 705.7L1632.4 705.9L1632.3 706.0L1632.2 706.1L1632.1 706.1L1632.0 706.0L1631.8 705.8L1630.1 705.0L1629.9 704.9L1629.7 704.8L1627.9 704.3L1627.7 704.2L1627.5 704.2L1625.7 704.0L1625.5 704.0L1625.3 704.0L1623.4 704.2L1623.2 704.2L1623.0 704.3L1621.2 704.8L1621.0 704.9L1620.8 705.0ZM1645.5 701.2L1645.9 700.7L1646.0 700.5L1646.1 700.4L1647.0 698.7L1647.1 698.5L1647.2 698.3L1647.7 696.5L1647.8 696.3L1647.8 696.1L1647.8 695.7L1647.9 695.8L1648.1 695.7L1650.0 695.6L1650.2 695.5L1650.4 695.5L1650.8 695.4L1650.7 695.7L1650.6 695.9L1650.6 696.1L1650.4 698.0L1650.4 698.2L1650.4 698.4L1650.6 700.3L1650.6 700.5L1650.7 700.7L1651.2 702.5L1651.3 702.7L1651.4 702.9L1652.2 704.5L1652.4 704.7L1652.5 704.9L1653.7 706.3L1653.8 706.5L1654.0 706.6L1655.4 707.8L1655.6 707.9L1655.8 708.0L1657.4 708.9L1657.6 709.0L1657.8 709.1L1659.6 709.6L1659.8 709.7L1660.0 709.7L1661.9 709.9L1662.1 709.9L1662.3 709.9L1664.2 709.7L1664.4 709.7L1664.6 709.6L1666.4 709.1L1666.6 709.0L1666.7 708.9L1668.4 708.0L1668.6 707.9L1668.7 707.8L1670.2 706.6L1670.4 706.5L1670.5 706.3L1671.7 704.9L1671.7 704.8L1672.6 705.3L1671.6 705.8L1671.4 706.0L1671.2 706.1L1669.8 707.3L1669.6 707.4L1669.5 707.6L1668.3 709.0L1668.2 709.2L1668.1 709.4L1667.5 710.5L1666.2 710.1L1666.0 710.0L1665.8 710.0L1664.0 709.8L1663.7 709.8L1663.5 709.8L1661.7 710.0L1661.5 710.0L1661.3 710.1L1659.5 710.6L1659.3 710.7L1659.1 710.8L1657.4 711.7L1657.2 711.8L1657.1 711.9L1655.6 713.1L1655.5 713.2L1655.3 713.4L1654.1 714.8L1654.0 715.0L1653.9 715.2L1653.4 716.2L1653.2 716.1L1653.5 714.8L1653.6 714.6L1653.6 714.4L1653.8 712.6L1653.8 712.4L1653.8 712.1L1653.6 710.3L1653.6 710.1L1653.5 709.9L1653.0 708.1L1652.9 707.9L1652.8 707.7L1651.9 706.0L1651.8 705.9L1651.7 705.7L1650.5 704.2L1650.4 704.1L1650.2 703.9L1648.8 702.7L1648.6 702.6L1648.4 702.5L1646.8 701.6L1646.6 701.5L1646.4 701.5ZM1659.3 686.9L1659.4 686.5L1659.4 686.3L1659.4 686.1L1659.6 684.3L1659.6 684.1L1659.6 683.8L1659.4 682.0L1659.4 681.8L1659.4 681.6L1658.8 679.8L1658.7 679.6L1658.7 679.4L1657.8 677.7L1657.7 677.6L1657.5 677.4L1656.3 675.9L1656.2 675.8L1656.1 675.6L1654.6 674.4L1654.4 674.3L1654.3 674.2L1652.6 673.3L1652.4 673.2L1652.2 673.2L1650.4 672.6L1650.2 672.6L1650.0 672.5L1648.1 672.4L1647.9 672.4L1647.7 672.4L1645.9 672.5L1645.7 672.6L1645.5 672.6L1644.8 672.8L1643.8 672.0L1643.6 671.8L1643.4 671.7L1641.8 670.8L1641.6 670.7L1641.4 670.7L1639.6 670.1L1639.4 670.1L1639.2 670.1L1637.3 669.9L1637.1 669.9L1636.9 669.9L1635.0 670.1L1634.8 670.1L1634.6 670.1L1632.8 670.7L1632.6 670.7L1632.5 670.8L1631.8 669.7L1631.1 668.6L1631.0 668.4L1630.9 668.2L1630.3 667.5L1630.4 667.4L1630.5 667.2L1631.7 665.8L1631.9 665.6L1632.0 665.4L1632.9 663.8L1632.9 663.7L1632.9 663.7L1633.1 663.8L1633.3 663.9L1635.0 664.8L1635.1 664.9L1635.3 665.0L1637.1 665.5L1637.3 665.6L1637.5 665.6L1639.4 665.8L1639.6 665.8L1639.8 665.8L1641.7 665.6L1641.9 665.6L1642.1 665.5L1643.9 665.0L1644.1 664.9L1644.3 664.8L1645.9 663.9L1646.1 663.8L1646.3 663.7L1647.7 662.5L1647.9 662.4L1648.0 662.2L1649.2 660.8L1649.3 660.6L1649.4 660.4L1650.3 658.8L1650.4 658.6L1650.5 658.4L1651.0 656.6L1651.1 656.4L1651.1 656.2L1651.1 656.1L1652.0 657.2L1652.1 657.4L1652.3 657.5L1653.8 658.7L1653.9 658.8L1654.1 658.9L1654.7 659.3L1654.1 659.9L1654.0 660.1L1653.9 660.3L1653.0 661.9L1652.9 662.1L1652.9 662.3L1652.3 664.1L1652.3 664.3L1652.2 664.5L1652.1 666.4L1652.0 666.6L1652.1 666.8L1652.2 668.7L1652.3 668.9L1652.3 669.1L1652.9 670.9L1652.9 671.1L1653.0 671.2L1653.9 672.9L1654.0 673.1L1654.1 673.2L1655.3 674.7L1655.5 674.9L1655.6 675.0L1657.1 676.2L1657.2 676.3L1657.4 676.4L1659.1 677.3L1659.3 677.4L1659.5 677.5L1661.3 678.0L1661.5 678.1L1661.7 678.1L1662.9 678.2L1662.9 678.2L1662.9 678.4L1663.1 680.3L1663.1 680.5L1663.1 680.7L1663.7 682.5L1663.8 682.7L1663.8 682.9L1664.7 684.6L1664.8 684.7L1665.0 684.9L1666.2 686.3L1666.3 686.5L1666.4 686.6L1667.9 687.8L1668.1 688.0L1668.2 688.1L1668.4 688.1L1668.3 688.2L1668.2 688.3L1666.7 687.5L1666.6 687.4L1666.4 687.3L1664.6 686.8L1664.4 686.7L1664.2 686.7L1662.3 686.5L1662.1 686.5L1661.9 686.5L1660.0 686.7L1659.8 686.7L1659.6 686.8ZM1648.9 647.1L1648.0 646.0L1647.9 645.8L1647.9 645.8L1647.9 645.8L1648.1 645.8L1649.3 645.7L1649.0 646.6L1648.9 646.8L1648.9 647.0ZM1659.1 637.5L1659.4 636.6L1659.4 636.4L1659.4 636.2L1659.6 634.3L1659.6 634.2L1661.3 634.7L1661.5 634.8L1661.7 634.8L1662.2 634.9L1662.2 635.4L1662.3 635.6L1662.3 635.8L1662.9 637.6L1662.9 637.7L1662.7 637.6L1662.5 637.6L1660.6 637.4L1660.4 637.4L1660.2 637.4ZM1639.7 642.4L1639.6 642.4L1639.4 642.4L1637.5 642.6L1637.3 642.6L1637.1 642.7L1637.0 642.7L1637.2 642.5L1637.4 642.3L1637.5 642.1L1638.2 640.7L1638.3 640.8L1639.5 642.2L1639.7 642.4ZM1630.2 647.2L1630.0 647.4L1629.9 647.6L1629.8 647.8L1628.9 649.4L1628.8 649.5L1628.8 649.5L1628.6 649.4L1628.5 649.3L1626.8 648.4L1626.6 648.3L1626.4 648.2L1624.6 647.7L1624.4 647.6L1624.2 647.6L1622.3 647.4L1622.1 647.4L1621.9 647.4L1620.1 647.6L1619.9 647.6L1619.7 647.7L1617.9 648.2L1617.7 648.3L1617.5 648.4L1615.8 649.3L1615.6 649.4L1615.5 649.5L1614.6 650.2L1613.9 649.3L1613.8 649.2L1613.6 649.0L1612.2 647.8L1612.0 647.7L1611.8 647.6L1610.2 646.7L1610.0 646.6L1609.8 646.5L1608.0 646.0L1607.8 645.9L1607.6 645.9L1605.7 645.7L1605.5 645.7L1605.3 645.7L1603.4 645.9L1603.2 645.9L1603.0 646.0L1601.5 646.5L1601.5 646.4L1601.5 646.2L1601.7 644.3L1601.7 644.1L1601.7 643.9L1601.5 642.0L1601.5 641.8L1601.4 641.6L1600.9 639.8L1600.8 639.6L1600.7 639.4L1599.8 637.8L1599.7 637.6L1599.7 637.5L1600.2 637.3L1600.3 637.2L1600.5 637.1L1601.1 636.6L1601.8 637.9L1601.9 638.1L1602.0 638.3L1603.2 639.7L1603.4 639.9L1603.5 640.0L1605.0 641.2L1605.2 641.4L1605.3 641.5L1607.0 642.3L1607.2 642.4L1607.4 642.5L1609.2 643.0L1609.4 643.1L1609.6 643.1L1611.4 643.3L1611.7 643.3L1611.9 643.3L1613.7 643.1L1613.9 643.1L1614.1 643.0L1615.9 642.5L1616.1 642.4L1616.3 642.3L1617.6 641.7L1617.8 642.1L1617.9 642.3L1618.0 642.5L1619.2 643.9L1619.4 644.1L1619.5 644.2L1621.0 645.4L1621.1 645.5L1621.3 645.6L1623.0 646.5L1623.2 646.6L1623.3 646.7L1625.1 647.2L1625.3 647.3L1625.6 647.3L1627.4 647.5L1627.6 647.5L1627.8 647.5L1629.7 647.3L1629.9 647.3L1630.1 647.2ZM1572.9 708.7L1572.1 709.0L1571.9 709.0L1572.6 708.5ZM1569.1 710.7L1568.2 711.4L1568.1 711.6L1568.0 711.7L1567.3 711.3L1569.0 710.7ZM1551.7 715.5L1551.0 716.8L1550.9 717.0L1550.8 717.2L1550.3 719.0L1550.2 719.2L1550.2 719.4L1550.2 719.9L1549.1 719.8L1548.9 719.8L1548.7 719.8L1546.8 720.0L1546.6 720.0L1546.4 720.1L1544.6 720.6L1544.4 720.7L1544.2 720.8L1543.8 721.0L1543.8 720.3L1543.7 720.1L1543.7 719.9L1543.1 718.1L1543.1 717.9L1543.0 717.7L1542.1 716.0L1542.0 715.8L1542.0 715.8L1542.0 715.8L1542.2 715.6L1542.3 715.5L1543.5 714.0L1543.6 714.0L1545.1 714.7L1545.3 714.8L1545.5 714.9L1547.3 715.5L1547.5 715.5L1547.7 715.5L1549.5 715.7L1549.7 715.7L1549.9 715.7ZM1598.7 816.9L1597.9 817.2L1597.8 817.2L1597.8 817.0L1597.9 816.8L1597.9 816.4ZM1493.5 744.0L1493.5 744.0L1493.5 743.8L1493.3 741.9L1493.3 741.7L1493.2 741.5L1492.7 739.7L1492.7 739.7L1492.7 739.7L1494.6 739.9L1494.8 739.9L1495.0 739.9L1495.2 739.8L1496.4 741.3L1496.4 741.3L1496.6 741.9L1495.5 742.5L1495.3 742.6L1495.1 742.7L1493.7 743.9L1493.5 744.0ZM1468.9 710.0L1468.3 709.2L1468.1 709.1L1468.0 708.9L1466.5 707.7L1466.4 707.6L1466.2 707.5L1464.5 706.6L1464.3 706.5L1464.1 706.5L1462.3 705.9L1462.1 705.9L1461.9 705.8L1460.1 705.7L1459.9 705.6L1459.6 705.7L1457.8 705.8L1457.6 705.9L1457.4 705.9L1455.6 706.5L1455.4 706.5L1455.2 706.6L1453.5 707.5L1453.4 707.6L1453.0 706.9L1452.9 706.7L1452.8 706.5L1453.0 706.6L1453.2 706.6L1453.4 706.6L1455.3 706.4L1455.5 706.3L1455.7 706.3L1457.5 705.8L1457.7 705.7L1457.9 705.6L1459.5 704.7L1459.7 704.6L1459.9 704.5L1461.1 703.4L1461.4 703.8L1461.6 704.0L1461.7 704.1L1463.2 705.3L1463.3 705.4L1463.5 705.5L1465.2 706.4L1465.4 706.5L1465.6 706.6L1467.4 707.1L1467.6 707.2L1467.8 707.2L1469.6 707.4L1469.8 707.4L1470.0 707.4L1470.2 707.4L1470.1 707.5L1470.0 707.7L1469.1 709.4L1469.0 709.5L1468.9 709.7ZM1479.5 702.3L1479.6 702.2L1479.7 702.0L1480.1 701.3L1480.1 701.4L1480.2 701.5L1480.9 702.4L1480.0 702.3L1479.8 702.3L1479.6 702.3ZM1545.4 635.6L1545.4 635.6L1547.1 636.5L1547.3 636.6L1547.4 636.7L1549.2 637.2L1549.4 637.3L1549.7 637.3L1551.5 637.5L1551.6 637.5L1551.5 637.8L1551.4 638.0L1551.3 638.2L1550.8 640.0L1550.7 640.2L1550.7 640.4L1550.5 642.2L1550.5 642.4L1550.5 642.6L1550.7 644.5L1550.7 644.7L1550.8 644.9L1551.3 646.7L1551.4 646.9L1551.4 647.0L1551.4 647.0L1549.9 648.2L1549.8 648.3L1549.6 648.5L1548.9 649.3L1548.1 648.7L1547.9 648.5L1547.7 648.4L1546.4 647.7L1546.3 646.2L1546.2 646.0L1546.2 645.8L1545.6 644.0L1545.6 643.8L1545.5 643.6L1544.6 641.9L1544.5 641.8L1544.4 641.6L1543.3 640.3L1543.5 640.0L1543.6 639.8L1543.8 639.6L1544.6 638.0L1544.7 637.8L1544.8 637.6L1545.3 635.8ZM2201.9 702.9L2202.1 702.8L2203.5 701.6L2203.7 701.5L2203.8 701.3L2204.5 700.4L2204.9 700.6L2205.1 700.7L2205.2 700.7L2207.1 701.3L2207.3 701.3L2207.5 701.4L2209.3 701.6L2209.5 701.6L2209.7 701.6L2211.6 701.4L2211.8 701.3L2211.8 701.3L2212.2 702.0L2212.3 702.2L2212.4 702.4L2213.6 703.8L2213.7 704.0L2213.9 704.1L2214.2 704.3L2214.1 704.5L2213.7 705.3L2212.8 705.1L2212.6 705.0L2212.4 705.0L2210.6 704.8L2210.4 704.8L2210.2 704.8L2208.3 705.0L2208.1 705.0L2207.9 705.1L2206.3 705.6L2206.1 705.6L2205.9 705.6L2205.7 705.7L2204.2 706.1L2203.2 705.8L2203.0 705.0L2202.9 704.9L2202.8 704.7L2201.9 703.0L2201.9 703.0ZM1938.6 750.0L1939.1 749.1L1939.2 749.0L1939.3 748.8L1939.8 747.0L1939.9 746.8L1939.9 746.6L1940.1 744.7L1940.1 744.5L1940.1 744.3L1939.9 742.4L1939.9 742.2L1939.8 742.0L1939.3 740.2L1939.2 740.1L1939.3 740.0L1939.4 739.8L1940.3 738.2L1940.4 738.0L1940.5 737.8L1941.0 736.0L1941.1 735.8L1941.1 735.6L1941.3 733.7L1941.3 733.5L1941.3 733.3L1941.2 732.7L1941.3 732.6L1941.4 732.4L1941.5 732.2L1942.4 730.6L1942.5 730.4L1942.6 730.2L1942.8 729.6L1943.0 730.2L1943.0 730.4L1943.1 730.6L1943.9 732.0L1943.7 732.8L1943.6 733.0L1943.6 733.3L1943.4 735.1L1943.4 735.3L1943.4 735.5L1943.6 737.4L1943.6 737.6L1943.7 737.8L1944.2 739.6L1944.3 739.8L1944.4 740.0L1944.7 740.6L1944.6 740.8L1944.6 741.0L1944.6 741.2L1944.4 743.1L1944.4 743.3L1944.4 743.5L1944.6 745.4L1944.6 745.6L1944.6 745.8L1945.2 747.6L1945.3 747.8L1945.3 748.0L1946.2 749.6L1946.3 749.8L1946.5 750.0L1946.9 750.6L1946.9 751.3L1946.9 751.5L1946.9 751.7L1947.1 753.5L1947.1 753.8L1947.1 754.0L1947.6 755.5L1947.5 756.7L1947.4 756.7L1945.9 757.9L1945.8 758.1L1945.6 758.2L1944.4 759.7L1944.3 759.8L1944.2 760.0L1943.3 761.7L1943.2 761.9L1943.2 762.1L1943.1 762.3L1942.2 763.0L1942.1 763.1L1941.9 763.3L1941.3 764.0L1940.7 762.9L1940.6 762.7L1940.5 762.5L1939.4 761.1L1939.4 761.1L1939.6 759.2L1939.6 759.0L1939.6 758.8L1939.4 756.9L1939.4 756.7L1939.3 756.5L1939.0 755.6L1939.2 753.8L1939.2 753.6L1939.2 753.4L1939.0 751.5L1939.0 751.3L1938.9 751.1ZM1944.7 718.6L1944.6 717.6L1945.3 716.4L1945.4 716.2L1945.5 716.0L1946.0 714.2L1946.1 714.0L1946.1 713.8L1946.3 711.9L1946.3 711.7L1946.3 711.5L1946.1 709.6L1946.1 709.6L1946.4 709.2L1946.5 709.0L1946.6 708.9L1947.5 707.2L1947.6 707.0L1947.7 706.8L1948.2 705.0L1948.3 704.8L1948.3 704.6L1948.3 704.4L1948.4 704.3L1949.6 702.9L1949.7 702.7L1949.8 702.5L1950.7 700.9L1950.8 700.7L1950.8 700.5L1951.1 699.7L1951.2 699.9L1951.4 700.0L1951.4 700.0L1951.4 700.2L1951.4 700.4L1951.4 700.6L1951.5 702.2L1950.6 703.4L1950.5 703.5L1950.4 703.7L1949.5 705.4L1949.4 705.5L1949.3 705.7L1948.8 707.5L1948.7 707.7L1948.7 707.9L1948.5 709.8L1948.5 710.0L1948.5 710.2L1948.6 710.7L1948.3 711.1L1948.1 711.2L1948.0 711.4L1947.1 713.1L1947.1 713.3L1947.0 713.5L1946.4 715.3L1946.4 715.5L1946.4 715.7L1946.2 717.1L1945.7 717.5L1945.6 717.6L1945.4 717.8ZM1833.8 912.8L1833.8 912.8L1834.0 912.7L1834.1 912.5L1835.0 910.8L1835.0 910.6L1835.1 910.5L1835.7 908.6L1835.7 908.4L1835.7 908.2L1835.9 906.4L1835.9 906.2L1835.9 906.0L1835.7 904.1L1835.7 903.9L1835.7 903.7L1835.5 903.2L1835.6 903.1L1835.7 902.9L1835.7 902.7L1836.3 900.9L1836.3 900.7L1836.4 900.5L1836.6 898.7L1836.6 898.5L1836.6 898.2L1836.6 898.2L1837.1 897.1L1837.2 896.9L1837.3 896.7L1837.9 894.9L1837.9 894.7L1837.9 894.5L1838.1 892.7L1838.1 892.5L1838.1 892.3L1837.9 890.4L1838.0 890.3L1838.1 890.1L1838.3 890.0L1839.1 888.3L1839.2 888.1L1839.3 887.9L1839.8 886.1L1839.9 885.9L1839.9 885.7L1840.0 884.6L1840.3 884.6L1840.5 884.6L1840.7 884.5L1842.5 884.0L1842.7 883.9L1842.9 883.8L1844.2 883.1L1845.8 883.6L1846.0 883.7L1846.2 883.7L1848.1 883.9L1848.3 883.9L1848.5 883.9L1850.4 883.7L1850.6 883.7L1850.8 883.6L1852.6 883.1L1852.8 883.0L1853.4 883.2L1853.6 883.3L1853.8 883.3L1855.7 883.5L1855.9 883.5L1856.1 883.5L1858.0 883.3L1858.2 883.3L1858.4 883.2L1860.2 882.7L1860.4 882.6L1860.5 882.6L1861.0 882.7L1861.2 882.8L1861.4 882.8L1863.3 883.0L1863.5 883.0L1863.7 883.0L1865.5 882.8L1865.8 882.8L1866.0 882.7L1867.8 882.2L1867.9 882.1L1868.1 882.0L1868.5 881.8L1868.6 881.8L1868.8 881.9L1870.6 882.4L1870.8 882.5L1871.0 882.5L1872.9 882.7L1873.1 882.7L1873.3 882.7L1875.1 882.5L1875.3 882.5L1875.5 882.4L1876.9 882.0L1877.9 882.6L1878.0 882.7L1878.2 882.7L1880.0 883.3L1880.2 883.3L1880.4 883.4L1882.3 883.5L1882.5 883.5L1882.7 883.5L1884.6 883.4L1884.8 883.3L1885.0 883.3L1886.0 883.0L1887.1 883.6L1887.3 883.7L1887.5 883.7L1888.4 884.0L1888.9 884.6L1888.8 885.3L1888.8 885.5L1888.8 885.8L1889.0 887.6L1889.0 887.8L1889.1 888.0L1889.5 889.5L1889.4 890.0L1889.3 890.2L1889.3 890.4L1889.1 892.3L1889.1 892.5L1889.1 892.7L1889.3 894.6L1889.3 894.8L1889.4 895.0L1889.5 895.4L1889.0 896.0L1888.9 896.2L1888.8 896.4L1887.9 898.0L1887.9 898.1L1886.4 898.8L1886.3 898.9L1886.1 899.1L1884.7 900.2L1884.5 900.4L1884.4 900.5L1883.2 902.0L1883.0 902.2L1882.9 902.3L1882.1 904.0L1882.0 904.2L1881.9 904.4L1881.3 906.2L1881.3 906.4L1881.3 906.4L1880.2 907.8L1880.1 907.9L1879.9 908.1L1879.1 909.8L1879.0 910.0L1878.9 910.2L1878.4 912.0L1878.3 912.2L1878.3 912.4L1878.1 913.7L1877.4 914.1L1877.2 914.2L1877.0 914.4L1875.6 915.6L1875.4 915.7L1875.3 915.8L1874.1 917.3L1874.0 917.5L1873.9 917.6L1873.0 919.3L1872.9 919.5L1872.8 919.7L1872.3 921.5L1872.2 921.7L1872.2 921.9L1872.0 923.8L1872.0 924.0L1872.0 924.2L1872.2 926.0L1872.2 926.3L1872.3 926.4L1872.6 927.4L1872.1 928.8L1872.1 929.0L1872.1 929.2L1871.9 930.8L1870.9 930.9L1870.7 931.0L1870.5 931.0L1868.7 931.6L1868.5 931.6L1868.4 931.7L1866.7 932.6L1866.6 932.6L1866.4 932.5L1864.6 932.3L1864.4 932.3L1864.2 932.3L1862.3 932.5L1862.1 932.6L1861.9 932.6L1861.0 932.9L1860.8 932.8L1859.0 932.3L1858.8 932.2L1858.6 932.2L1856.7 932.0L1856.5 932.0L1856.3 932.0L1854.5 932.2L1854.3 932.2L1854.1 932.3L1852.6 932.7L1851.8 932.5L1851.6 932.4L1851.4 932.4L1849.5 932.2L1849.3 932.2L1849.1 932.2L1847.2 932.4L1847.0 932.4L1846.8 932.5L1845.0 933.0L1844.8 933.1L1844.6 933.2L1844.1 933.5L1843.6 932.0L1843.6 931.8L1843.5 931.6L1842.6 929.9L1842.5 929.7L1842.4 929.6L1841.2 928.1L1841.0 928.0L1840.9 927.8L1840.2 927.3L1840.0 926.5L1839.9 926.3L1839.8 926.1L1838.9 924.5L1838.8 924.3L1838.7 924.1L1837.5 922.7L1837.4 922.5L1837.2 922.4L1835.8 921.2L1835.6 921.1L1835.6 920.9L1835.6 920.7L1835.5 920.5L1835.0 918.7L1834.9 918.5L1834.8 918.4L1834.5 917.7L1834.5 917.0L1834.6 916.8L1834.5 916.6L1834.4 914.7L1834.3 914.5L1834.3 914.3ZM1651.5 936.3L1651.5 935.8L1651.4 935.6L1651.4 935.4L1650.8 933.6L1650.8 933.4L1650.7 933.2L1649.8 931.5L1649.7 931.4L1649.6 931.2L1648.9 930.4L1650.1 929.7L1650.3 929.6L1650.4 929.5L1651.9 928.3L1652.0 928.2L1652.2 928.0L1652.2 928.0L1652.2 928.1L1652.3 928.3L1652.3 928.5L1652.9 930.3L1652.9 930.5L1653.0 930.7L1653.9 932.4L1654.0 932.6L1654.1 932.7L1655.3 934.2L1655.5 934.3L1655.6 934.5L1655.7 934.5L1655.6 934.6L1655.4 934.6L1653.6 935.1L1653.4 935.2L1653.3 935.3L1651.6 936.2ZM1666.0 937.5L1666.0 937.5L1666.2 937.5L1668.0 936.9L1668.2 936.9L1668.4 936.8L1670.1 935.9L1670.2 935.8L1670.4 935.7L1670.5 935.6L1670.6 936.1L1670.6 936.3L1670.6 936.5L1671.2 938.3L1671.2 938.5L1671.3 938.7L1672.2 940.4L1672.3 940.5L1668.9 942.0L1668.8 941.7L1668.7 941.5L1668.6 941.4L1667.8 939.7L1667.7 939.5L1667.5 939.4L1666.3 937.9L1666.2 937.8L1666.0 937.6ZM1500.9 698.5L1501.2 697.4L1501.3 697.2L1501.3 697.0L1501.5 695.1L1501.5 694.9L1501.5 694.7L1501.4 693.6L1501.9 693.5L1502.4 694.5L1502.6 694.7L1502.7 694.9L1503.9 696.3L1504.0 696.5L1504.2 696.6L1505.6 697.8L1505.8 697.9L1506.0 698.0L1507.6 698.9L1507.8 699.0L1508.0 699.1L1509.8 699.6L1510.0 699.7L1510.2 699.7L1512.1 699.9L1512.3 699.9L1512.5 699.9L1514.4 699.7L1514.6 699.7L1514.8 699.6L1516.6 699.1L1516.8 699.0L1516.9 698.9L1518.6 698.0L1518.8 697.9L1518.9 697.8L1520.4 696.6L1520.6 696.5L1520.7 696.3L1521.9 694.9L1522.0 694.7L1522.1 694.5L1523.0 692.9L1523.1 692.7L1523.2 692.5L1523.7 690.7L1523.8 690.5L1523.8 690.3L1523.8 689.9L1524.1 690.4L1524.2 690.6L1524.3 690.7L1525.5 692.2L1525.6 692.3L1525.8 692.5L1527.3 693.7L1527.4 693.8L1527.6 693.9L1529.3 694.8L1529.4 694.9L1529.6 694.9L1531.4 695.5L1531.6 695.5L1531.8 695.6L1531.8 695.9L1531.6 695.9L1531.4 695.9L1529.6 696.5L1529.4 696.5L1529.3 696.6L1527.6 697.5L1527.4 697.6L1527.3 697.8L1525.8 698.9L1525.6 699.1L1525.5 699.2L1524.3 700.7L1524.2 700.9L1524.1 701.0L1523.2 702.7L1523.1 702.9L1523.0 703.1L1522.5 704.9L1522.4 705.1L1522.4 705.3L1522.2 707.1L1522.1 706.9L1522.0 706.7L1521.9 706.5L1520.7 705.1L1520.6 704.9L1520.4 704.8L1518.9 703.6L1518.8 703.5L1518.6 703.3L1516.9 702.5L1516.8 702.4L1516.6 702.3L1514.8 701.8L1514.6 701.7L1514.4 701.7L1512.5 701.5L1512.3 701.5L1512.1 701.5L1510.2 701.7L1510.0 701.7L1509.8 701.8L1508.0 702.3L1507.8 702.4L1507.6 702.5L1507.3 702.6L1506.5 701.7L1506.4 701.6L1506.3 701.4L1504.8 700.2L1504.6 700.1L1504.5 700.0L1502.8 699.1L1502.6 699.0L1502.4 699.0ZM1522.4 682.4L1522.1 681.9L1522.0 681.7L1521.9 681.6L1520.9 680.3L1521.9 679.1L1522.0 678.9L1522.1 678.7L1523.0 677.1L1523.1 676.9L1523.2 676.7L1523.7 674.9L1523.8 674.7L1523.8 674.5L1524.0 672.6L1524.0 672.4L1524.0 672.2L1523.9 671.6L1525.2 671.4L1525.4 671.4L1525.6 671.3L1527.4 670.8L1527.6 670.7L1527.8 670.6L1529.4 669.8L1529.6 669.6L1529.8 669.5L1531.2 668.3L1531.4 668.2L1531.5 668.0L1532.7 666.6L1532.8 666.4L1532.9 666.3L1533.0 666.4L1533.1 666.5L1533.3 666.7L1534.7 667.9L1534.9 668.0L1535.1 668.1L1536.7 669.0L1536.9 669.1L1537.1 669.1L1538.9 669.7L1539.1 669.7L1539.3 669.8L1541.2 669.9L1541.4 670.0L1541.6 669.9L1543.5 669.8L1543.6 669.7L1543.7 669.9L1543.4 670.1L1543.2 670.2L1543.1 670.3L1541.6 671.5L1541.5 671.6L1541.3 671.8L1540.1 673.2L1540.0 673.4L1539.9 673.6L1539.7 673.9L1538.6 673.3L1538.4 673.2L1538.2 673.2L1536.4 672.6L1536.2 672.6L1536.0 672.5L1534.1 672.4L1533.9 672.4L1533.7 672.4L1531.8 672.5L1531.6 672.6L1531.4 672.6L1529.6 673.2L1529.4 673.2L1529.3 673.3L1527.6 674.2L1527.4 674.3L1527.3 674.4L1525.8 675.6L1525.6 675.8L1525.5 675.9L1524.3 677.4L1524.2 677.6L1524.1 677.7L1523.2 679.4L1523.1 679.6L1523.0 679.8L1522.5 681.6L1522.4 681.8L1522.4 682.0ZM1524.0 713.5L1524.1 713.7L1524.2 713.9L1524.2 713.9L1524.1 713.9L1524.0 714.1L1523.9 714.2ZM1520.6 721.4L1520.6 722.0L1520.5 721.8L1520.4 721.6L1520.4 721.6L1520.6 721.5ZM1521.5 726.8L1521.5 727.0L1522.0 727.9L1521.4 727.6ZM1415.2 678.7L1415.6 677.9L1415.7 677.7L1415.8 677.5L1416.4 675.7L1416.4 675.5L1416.4 675.3L1416.6 673.4L1416.6 673.2L1416.6 673.0L1416.4 671.2L1416.4 671.0L1416.4 670.8L1416.1 669.9L1416.4 669.9L1416.6 670.0L1416.8 669.9L1418.7 669.8L1418.9 669.7L1419.1 669.7L1420.9 669.1L1421.1 669.1L1421.2 669.0L1422.9 668.1L1423.1 668.0L1423.2 667.9L1424.7 666.7L1424.9 666.5L1425.0 666.4L1425.6 665.7L1425.8 666.2L1425.0 667.7L1424.9 667.9L1424.8 668.1L1424.3 669.9L1424.2 670.1L1424.2 670.3L1424.0 672.2L1424.0 672.4L1424.0 672.6L1424.2 674.5L1424.2 674.7L1424.3 674.9L1424.8 676.7L1424.9 676.9L1425.0 677.1L1425.9 678.7L1426.0 678.9L1426.1 679.0L1426.0 679.1L1425.9 679.0L1424.1 678.5L1423.9 678.4L1423.6 678.4L1421.8 678.2L1421.6 678.2L1421.4 678.2L1419.5 678.4L1419.3 678.4L1419.1 678.5L1417.3 679.0L1417.1 679.1L1416.9 679.2L1416.0 679.6ZM1519.7 808.2L1519.5 808.2L1519.3 808.3L1517.5 808.8L1517.3 808.9L1517.1 809.0L1515.4 809.9L1515.3 810.0L1515.1 810.1L1513.7 811.3L1513.5 811.4L1513.4 811.6L1512.2 813.0L1512.0 813.2L1511.9 813.4L1511.0 815.0L1511.0 815.2L1510.9 815.4L1510.3 817.2L1510.3 817.4L1510.3 817.6L1510.1 819.5L1510.1 819.7L1510.1 819.9L1510.3 821.8L1510.3 822.0L1510.3 822.2L1510.9 824.0L1511.0 824.2L1511.0 824.4L1511.9 826.0L1512.0 826.2L1512.2 826.4L1513.4 827.8L1513.5 828.0L1513.7 828.1L1515.1 829.3L1515.3 829.4L1515.4 829.5L1517.1 830.4L1517.3 830.5L1517.5 830.6L1519.3 831.1L1519.5 831.2L1519.7 831.2L1521.6 831.4L1521.8 831.4L1522.0 831.4L1523.8 831.2L1524.1 831.2L1524.3 831.1L1526.1 830.6L1526.2 830.5L1526.4 830.4L1528.1 829.5L1528.3 829.4L1528.4 829.3L1529.9 828.1L1530.0 828.0L1530.2 827.8L1531.4 826.4L1531.5 826.2L1531.6 826.0L1532.5 824.4L1532.6 824.2L1532.6 824.0L1533.2 822.2L1533.2 822.0L1533.3 821.8L1533.5 819.9L1533.5 819.7L1533.5 819.5L1533.3 817.6L1533.2 817.4L1533.2 817.2L1532.6 815.4L1532.6 815.2L1532.5 815.0L1531.6 813.4L1531.5 813.2L1531.4 813.0L1530.2 811.6L1530.0 811.4L1529.9 811.3L1528.4 810.1L1528.3 810.0L1528.1 809.9L1526.4 809.0L1526.2 808.9L1526.1 808.8L1524.3 808.3L1524.1 808.2L1523.8 808.2L1522.0 808.0L1521.8 808.0L1521.6 808.0ZM1516.0 874.3L1515.8 874.3L1515.6 874.3L1513.8 874.9L1513.6 875.0L1513.4 875.1L1511.8 875.9L1511.6 876.0L1511.4 876.2L1510.0 877.4L1509.8 877.5L1509.7 877.7L1508.5 879.1L1508.4 879.3L1508.3 879.4L1507.4 881.1L1507.3 881.3L1507.2 881.5L1506.7 883.3L1506.6 883.5L1506.6 883.7L1506.4 885.6L1506.4 885.8L1506.4 886.0L1506.6 887.9L1506.6 888.1L1506.7 888.3L1507.2 890.1L1507.3 890.2L1507.4 890.4L1508.3 892.1L1508.4 892.3L1508.5 892.4L1509.7 893.9L1509.8 894.0L1510.0 894.2L1511.4 895.4L1511.6 895.5L1511.8 895.6L1513.4 896.5L1513.6 896.6L1513.8 896.7L1515.6 897.2L1515.8 897.2L1516.0 897.3L1517.9 897.5L1518.1 897.5L1518.3 897.5L1520.2 897.3L1520.4 897.2L1520.6 897.2L1522.4 896.7L1522.6 896.6L1522.8 896.5L1524.4 895.6L1524.6 895.5L1524.8 895.4L1526.2 894.2L1526.4 894.0L1526.5 893.9L1527.7 892.4L1527.8 892.3L1527.9 892.1L1528.8 890.4L1528.9 890.2L1529.0 890.1L1529.5 888.3L1529.6 888.1L1529.6 887.9L1529.8 886.0L1529.8 885.8L1529.8 885.6L1529.6 883.7L1529.6 883.5L1529.5 883.3L1529.0 881.5L1528.9 881.3L1528.8 881.1L1527.9 879.4L1527.8 879.3L1527.7 879.1L1526.5 877.7L1526.4 877.5L1526.2 877.4L1524.8 876.2L1524.6 876.0L1524.4 875.9L1522.8 875.1L1522.6 875.0L1522.4 874.9L1520.6 874.3L1520.4 874.3L1520.2 874.3L1518.3 874.1L1518.1 874.1L1517.9 874.1ZM1442.8 824.9L1442.3 825.5L1442.1 825.7L1442.0 825.9L1441.1 827.5L1441.1 827.7L1441.0 827.9L1440.4 829.7L1440.4 829.9L1440.4 830.1L1440.2 832.0L1440.2 832.2L1440.2 832.4L1440.4 834.3L1440.4 834.5L1440.4 834.7L1441.0 836.5L1441.1 836.7L1441.1 836.9L1442.0 838.5L1442.1 838.7L1442.3 838.9L1443.5 840.3L1443.6 840.5L1443.7 840.6L1445.2 841.8L1445.4 841.9L1445.5 842.0L1447.2 842.9L1447.4 843.0L1447.6 843.1L1449.4 843.6L1449.6 843.7L1449.8 843.7L1451.7 843.9L1451.9 843.9L1452.1 843.9L1453.9 843.7L1454.1 843.7L1454.3 843.6L1456.1 843.1L1456.3 843.0L1456.5 842.9L1458.2 842.0L1458.4 841.9L1458.5 841.8L1460.0 840.6L1460.1 840.5L1460.3 840.3L1460.8 839.7L1460.8 840.1L1460.9 840.3L1460.9 840.5L1461.5 842.3L1461.5 842.5L1461.6 842.7L1462.5 844.3L1462.6 844.5L1462.7 844.7L1463.9 846.1L1464.1 846.3L1464.2 846.4L1465.7 847.6L1465.8 847.7L1466.0 847.9L1467.7 848.7L1467.9 848.8L1468.1 848.9L1468.4 849.0L1468.4 849.0L1468.3 849.3L1468.1 851.1L1468.1 851.3L1468.1 851.5L1468.3 853.4L1468.4 853.6L1468.4 853.8L1468.9 855.6L1469.0 855.8L1469.1 856.0L1470.0 857.7L1470.1 857.8L1470.2 858.0L1471.4 859.5L1471.6 859.6L1471.7 859.7L1473.2 860.9L1473.3 861.1L1473.5 861.2L1475.2 862.1L1475.3 862.1L1475.5 862.2L1477.3 862.8L1477.5 862.8L1477.7 862.8L1479.6 863.0L1479.8 863.0L1480.0 863.0L1481.9 862.8L1482.1 862.8L1482.3 862.8L1484.1 862.2L1484.3 862.1L1484.5 862.1L1486.2 861.2L1486.3 861.1L1486.5 860.9L1487.4 860.2L1488.3 861.8L1488.4 862.0L1488.5 862.2L1489.7 863.6L1489.9 863.8L1490.0 863.9L1491.5 865.1L1491.6 865.2L1491.8 865.3L1493.5 866.2L1493.7 866.3L1493.9 866.4L1495.7 866.9L1495.9 867.0L1496.1 867.0L1497.9 867.2L1498.1 867.2L1498.3 867.2L1500.2 867.0L1500.4 867.0L1500.6 866.9L1502.4 866.4L1502.6 866.3L1502.8 866.2L1504.5 865.3L1504.6 865.2L1504.8 865.1L1506.3 863.9L1506.4 863.8L1506.5 863.6L1507.7 862.2L1507.9 862.0L1508.0 861.8L1508.9 860.2L1508.9 860.0L1509.0 859.8L1509.6 858.0L1509.6 857.8L1509.6 857.6L1509.8 855.7L1509.8 855.5L1509.8 855.3L1509.6 853.4L1509.6 853.2L1509.6 853.0L1509.0 851.2L1508.9 851.0L1508.9 850.8L1508.0 849.2L1507.9 849.0L1507.7 848.8L1506.5 847.4L1506.4 847.2L1506.3 847.1L1504.8 845.9L1504.6 845.8L1504.5 845.7L1502.8 844.8L1502.6 844.7L1502.4 844.6L1500.6 844.1L1500.4 844.0L1500.2 844.0L1498.3 843.8L1498.1 843.8L1497.9 843.8L1496.1 844.0L1495.9 844.0L1495.7 844.1L1493.9 844.6L1493.7 844.7L1493.5 844.8L1491.8 845.7L1491.6 845.8L1491.5 845.9L1490.5 846.7L1489.7 845.0L1489.6 844.8L1489.4 844.7L1488.2 843.2L1488.1 843.1L1487.9 842.9L1486.5 841.7L1486.3 841.6L1486.2 841.5L1484.5 840.6L1484.3 840.5L1484.1 840.5L1483.8 840.4L1483.8 840.3L1483.8 840.1L1484.0 838.2L1484.0 838.0L1484.0 837.8L1483.8 835.9L1483.8 835.7L1483.8 835.5L1483.2 833.7L1483.1 833.5L1483.1 833.4L1482.2 831.7L1482.1 831.5L1481.9 831.4L1480.7 829.9L1480.6 829.7L1480.5 829.6L1479.0 828.4L1478.8 828.3L1478.7 828.2L1478.4 828.0L1478.7 827.9L1478.8 827.8L1479.0 827.6L1480.5 826.5L1480.6 826.3L1480.7 826.2L1481.9 824.7L1482.1 824.5L1482.2 824.4L1483.1 822.7L1483.1 822.5L1483.2 822.3L1483.8 820.5L1483.8 820.3L1483.8 820.1L1484.0 818.2L1484.0 818.0L1484.0 817.8L1485.1 818.4L1485.3 818.5L1485.5 818.6L1487.3 819.1L1487.5 819.2L1487.7 819.2L1489.6 819.4L1489.8 819.4L1490.0 819.4L1491.9 819.2L1492.1 819.2L1492.3 819.1L1494.1 818.6L1494.3 818.5L1494.5 818.4L1496.1 817.6L1496.3 817.5L1496.5 817.3L1497.6 816.4L1499.3 817.0L1499.5 817.0L1499.7 817.1L1501.6 817.2L1501.8 817.3L1502.0 817.2L1503.9 817.1L1504.1 817.0L1504.3 817.0L1506.1 816.4L1506.3 816.4L1506.5 816.3L1508.1 815.4L1508.3 815.3L1508.5 815.2L1509.9 814.0L1510.1 813.8L1510.2 813.7L1511.4 812.2L1511.5 812.1L1511.6 811.9L1512.5 810.2L1512.6 810.0L1512.7 809.8L1513.2 808.0L1513.3 807.8L1513.3 807.6L1513.5 805.8L1513.5 805.6L1513.5 805.4L1513.3 803.5L1513.3 803.3L1513.2 803.1L1512.7 801.3L1512.6 801.1L1512.5 800.9L1511.6 799.2L1511.6 799.2L1511.7 799.2L1511.9 799.3L1513.7 799.4L1513.9 799.4L1514.2 799.4L1516.0 799.3L1516.2 799.2L1516.4 799.2L1518.2 798.6L1518.4 798.6L1518.6 798.5L1520.3 797.6L1520.4 797.5L1520.6 797.4L1522.1 796.2L1522.2 796.0L1522.4 795.9L1523.6 794.4L1523.7 794.2L1523.8 794.1L1524.7 792.4L1524.8 792.2L1524.8 792.0L1525.4 790.2L1525.4 790.0L1525.5 789.8L1525.6 788.0L1525.6 787.7L1525.6 787.5L1525.5 785.7L1525.4 785.5L1525.4 785.3L1524.8 783.5L1524.8 783.3L1524.7 783.1L1523.8 781.4L1523.7 781.2L1523.6 781.1L1522.4 779.6L1522.2 779.5L1522.1 779.3L1520.6 778.1L1520.4 778.0L1520.3 777.9L1518.6 777.0L1518.4 776.9L1518.2 776.9L1516.4 776.3L1516.2 776.3L1516.0 776.2L1514.2 776.1L1513.9 776.0L1513.7 776.1L1511.9 776.2L1511.7 776.3L1511.5 776.3L1509.7 776.9L1509.5 776.9L1509.3 777.0L1507.6 777.9L1507.4 778.0L1507.3 778.1L1505.8 779.3L1505.7 779.5L1505.5 779.6L1504.3 781.1L1504.2 781.2L1504.1 781.4L1503.2 783.1L1503.1 783.3L1503.1 783.5L1502.5 785.3L1502.5 785.5L1502.4 785.7L1502.3 787.5L1502.2 787.7L1502.3 788.0L1502.4 789.8L1502.5 790.0L1502.5 790.2L1503.1 792.0L1503.1 792.2L1503.2 792.4L1504.1 794.1L1504.1 794.1L1504.1 794.1L1503.9 794.1L1502.0 793.9L1501.8 793.9L1501.6 793.9L1499.7 794.1L1499.5 794.1L1499.3 794.1L1497.5 794.7L1497.3 794.7L1497.1 794.8L1495.5 795.7L1495.3 795.8L1495.1 796.0L1494.1 796.8L1492.3 796.3L1492.1 796.2L1491.9 796.2L1490.0 796.0L1489.8 796.0L1489.6 796.0L1487.7 796.2L1487.5 796.2L1487.3 796.3L1485.5 796.8L1485.3 796.9L1485.1 797.0L1483.8 797.7L1483.8 797.7L1483.8 797.5L1483.8 797.3L1483.2 795.5L1483.1 795.3L1483.1 795.1L1482.2 793.4L1482.1 793.2L1481.9 793.1L1481.5 792.5L1482.1 792.0L1482.3 791.9L1482.4 791.7L1483.6 790.3L1483.7 790.1L1483.8 789.9L1484.7 788.3L1484.8 788.1L1484.9 787.9L1485.4 786.1L1485.5 785.9L1485.5 785.7L1485.7 783.8L1485.7 783.6L1485.7 783.4L1485.5 781.5L1485.5 781.3L1485.4 781.1L1484.9 779.3L1484.8 779.1L1484.7 778.9L1483.8 777.3L1483.7 777.1L1483.6 776.9L1482.4 775.5L1482.3 775.3L1482.1 775.2L1480.7 774.0L1480.5 773.9L1480.3 773.8L1478.7 772.9L1478.5 772.8L1478.3 772.7L1476.5 772.2L1476.3 772.1L1476.1 772.1L1474.2 771.9L1474.0 771.9L1473.8 771.9L1471.9 772.1L1471.7 772.1L1471.5 772.2L1469.7 772.7L1469.5 772.8L1469.3 772.9L1467.7 773.8L1467.5 773.9L1467.3 774.0L1465.9 775.2L1465.7 775.3L1465.6 775.5L1464.4 776.9L1464.3 777.1L1464.2 777.3L1463.3 778.9L1463.2 779.1L1463.1 779.3L1462.6 781.1L1462.5 781.3L1462.5 781.5L1462.3 783.4L1462.3 783.6L1462.3 783.8L1462.5 785.7L1462.5 785.9L1462.6 786.1L1463.1 787.9L1463.2 788.1L1463.3 788.3L1464.2 789.9L1464.3 790.1L1464.4 790.3L1464.8 790.8L1464.2 791.3L1464.1 791.5L1463.9 791.6L1463.1 792.7L1462.7 791.6L1462.7 791.4L1462.6 791.2L1461.7 789.6L1461.6 789.4L1461.5 789.2L1460.3 787.8L1460.1 787.6L1460.0 787.5L1458.5 786.3L1458.4 786.2L1458.2 786.1L1456.5 785.2L1456.3 785.1L1456.1 785.0L1454.3 784.5L1454.1 784.4L1453.9 784.4L1452.1 784.2L1451.9 784.2L1451.7 784.2L1449.8 784.4L1449.6 784.4L1449.4 784.5L1447.6 785.0L1447.4 785.1L1447.2 785.2L1445.5 786.1L1445.4 786.2L1445.2 786.3L1443.7 787.5L1443.6 787.6L1443.5 787.8L1442.3 789.2L1442.1 789.4L1442.0 789.6L1441.1 791.2L1441.1 791.4L1441.0 791.6L1440.4 793.4L1440.4 793.6L1440.4 793.8L1440.2 795.7L1440.2 795.9L1440.2 796.1L1440.4 798.0L1440.4 798.2L1440.4 798.4L1441.0 800.2L1441.1 800.4L1441.1 800.6L1442.0 802.2L1442.1 802.4L1442.3 802.6L1443.5 804.0L1443.6 804.2L1443.7 804.3L1445.2 805.5L1445.4 805.6L1445.5 805.7L1447.2 806.6L1447.4 806.7L1447.6 806.8L1449.4 807.3L1449.6 807.4L1449.8 807.4L1451.7 807.6L1451.9 807.6L1452.1 807.6L1453.9 807.4L1454.1 807.4L1454.3 807.3L1456.1 806.8L1456.3 806.7L1456.5 806.6L1458.2 805.7L1458.4 805.6L1458.5 805.5L1460.0 804.3L1460.1 804.2L1460.3 804.0L1461.1 803.0L1461.5 804.0L1461.5 804.2L1461.6 804.4L1462.5 806.1L1462.6 806.2L1462.7 806.4L1463.9 807.9L1464.1 808.0L1464.2 808.1L1465.1 808.9L1464.2 809.6L1464.1 809.8L1463.9 809.9L1462.7 811.4L1462.6 811.5L1462.5 811.7L1462.2 812.3L1461.6 811.6L1461.5 811.4L1461.3 811.3L1459.9 810.1L1459.7 810.0L1459.5 809.9L1457.9 809.0L1457.7 808.9L1457.5 808.8L1455.7 808.3L1455.5 808.2L1455.3 808.2L1453.4 808.0L1453.2 808.0L1453.0 808.0L1451.1 808.2L1450.9 808.2L1450.7 808.3L1448.9 808.8L1448.7 808.9L1448.5 809.0L1446.9 809.9L1446.7 810.0L1446.5 810.1L1445.1 811.3L1444.9 811.4L1444.8 811.6L1443.6 813.0L1443.5 813.2L1443.4 813.4L1442.5 815.0L1442.4 815.2L1442.3 815.4L1441.8 817.2L1441.7 817.4L1441.7 817.6L1441.5 819.5L1441.5 819.7L1441.5 819.9L1441.7 821.8L1441.7 822.0L1441.8 822.2L1442.3 824.0L1442.4 824.2L1442.5 824.4ZM1466.3 828.0L1466.0 828.2L1465.8 828.3L1465.7 828.4L1464.2 829.6L1464.1 829.7L1463.9 829.9L1463.4 830.5L1463.4 830.1L1463.3 829.9L1463.3 829.7L1462.7 827.9L1462.7 827.7L1462.6 827.5L1462.3 827.0L1462.8 826.4L1462.9 826.2L1463.0 826.0L1463.3 825.5L1463.9 826.2L1464.1 826.3L1464.2 826.5L1465.7 827.6L1465.8 827.8L1466.0 827.9ZM909.9 1154.4L909.7 1154.4L909.5 1154.5L907.7 1155.0L907.5 1155.1L907.3 1155.2L905.7 1156.1L905.5 1156.2L905.3 1156.3L903.9 1157.5L903.7 1157.6L903.6 1157.8L902.4 1159.2L902.3 1159.4L902.2 1159.6L901.3 1161.2L901.2 1161.4L901.1 1161.6L900.6 1163.4L900.5 1163.6L900.5 1163.8L900.3 1165.7L900.3 1165.9L900.3 1166.1L900.5 1168.0L900.5 1168.2L900.6 1168.4L901.1 1170.2L901.2 1170.4L901.3 1170.6L902.2 1172.2L902.3 1172.4L902.4 1172.6L903.6 1174.0L903.7 1174.2L903.9 1174.3L905.3 1175.5L905.5 1175.6L905.7 1175.7L907.3 1176.6L907.5 1176.7L907.7 1176.8L909.5 1177.3L909.7 1177.4L909.9 1177.4L911.8 1177.6L912.0 1177.6L912.2 1177.6L914.1 1177.4L914.3 1177.4L914.5 1177.3L916.3 1176.8L916.5 1176.7L916.7 1176.6L918.3 1175.7L918.5 1175.6L918.7 1175.5L920.1 1174.3L920.3 1174.2L920.4 1174.0L921.6 1172.6L921.7 1172.4L921.8 1172.2L922.7 1170.6L922.8 1170.4L922.9 1170.2L923.4 1168.4L923.5 1168.2L923.5 1168.0L923.7 1166.1L923.7 1165.9L923.7 1165.7L923.5 1163.8L923.5 1163.6L923.4 1163.4L922.9 1161.6L922.8 1161.4L922.7 1161.2L921.8 1159.6L921.7 1159.4L921.6 1159.2L920.4 1157.8L920.3 1157.6L920.1 1157.5L918.7 1156.3L918.5 1156.2L918.3 1156.1L916.7 1155.2L916.5 1155.1L916.3 1155.0L914.5 1154.5L914.3 1154.4L914.1 1154.4L912.2 1154.2L912.0 1154.2L911.8 1154.2ZM867.2 1126.1L867.0 1126.2L866.8 1126.3L865.4 1127.5L865.2 1127.6L865.1 1127.8L863.9 1129.2L863.8 1129.4L863.7 1129.6L862.8 1131.2L862.7 1131.4L862.6 1131.6L862.1 1133.4L862.0 1133.6L862.0 1133.8L861.8 1135.7L861.8 1135.9L861.8 1136.1L862.0 1138.0L862.0 1138.2L862.1 1138.4L862.6 1140.2L862.7 1140.4L862.8 1140.6L863.7 1142.2L863.8 1142.4L863.9 1142.6L865.1 1144.0L865.2 1144.2L865.4 1144.3L866.8 1145.5L867.0 1145.6L867.2 1145.7L868.8 1146.6L869.0 1146.7L869.2 1146.8L871.0 1147.3L871.2 1147.4L871.4 1147.4L873.3 1147.6L873.5 1147.6L873.7 1147.6L875.6 1147.4L875.8 1147.4L876.0 1147.3L877.8 1146.8L878.0 1146.7L878.2 1146.6L879.5 1145.9L879.6 1145.9L879.7 1146.1L879.8 1146.3L881.0 1147.7L881.1 1147.9L881.3 1148.0L882.7 1149.2L882.9 1149.3L883.1 1149.4L884.7 1150.3L884.9 1150.4L885.1 1150.5L886.9 1151.0L887.1 1151.1L887.3 1151.1L889.2 1151.3L889.4 1151.3L889.6 1151.3L889.7 1151.3L890.0 1151.8L890.1 1152.0L890.2 1152.2L891.4 1153.6L891.5 1153.8L891.7 1153.9L893.1 1155.1L893.3 1155.2L893.5 1155.3L895.1 1156.2L895.3 1156.3L895.5 1156.4L897.3 1156.9L897.5 1157.0L897.7 1157.0L899.6 1157.2L899.8 1157.2L900.0 1157.2L901.9 1157.0L902.1 1157.0L902.3 1156.9L904.1 1156.4L904.3 1156.3L904.5 1156.2L906.1 1155.3L906.3 1155.2L906.5 1155.1L907.9 1153.9L908.1 1153.8L908.2 1153.6L909.4 1152.2L909.5 1152.0L909.6 1151.8L910.5 1150.2L910.6 1150.0L910.7 1149.8L911.2 1148.0L911.3 1147.8L911.3 1147.6L911.5 1145.7L911.5 1145.5L911.5 1145.3L911.3 1143.4L911.3 1143.2L911.2 1143.0L910.7 1141.2L910.6 1141.0L910.5 1140.8L909.6 1139.2L909.5 1139.0L909.4 1138.8L908.2 1137.4L908.1 1137.2L907.9 1137.1L906.5 1135.9L906.3 1135.8L906.1 1135.7L904.5 1134.8L904.3 1134.7L904.1 1134.6L902.3 1134.1L902.1 1134.0L901.9 1134.0L900.0 1133.8L899.8 1133.8L899.6 1133.8L899.5 1133.8L899.2 1133.3L899.1 1133.1L899.0 1132.9L897.8 1131.5L897.7 1131.3L897.5 1131.2L896.1 1130.0L895.9 1129.9L895.7 1129.8L894.1 1128.9L893.9 1128.8L893.7 1128.7L891.9 1128.2L891.7 1128.1L891.5 1128.1L889.6 1127.9L889.4 1127.9L889.2 1127.9L887.3 1128.1L887.1 1128.1L886.9 1128.2L885.1 1128.7L884.9 1128.8L884.7 1128.9L883.4 1129.6L883.3 1129.6L883.2 1129.4L883.1 1129.2L881.9 1127.8L881.8 1127.6L881.6 1127.5L880.2 1126.3L880.0 1126.2L879.8 1126.1L878.2 1125.2L878.0 1125.1L877.8 1125.0L876.0 1124.5L875.8 1124.4L875.6 1124.4L873.7 1124.2L873.5 1124.2L873.3 1124.2L871.4 1124.4L871.2 1124.4L871.0 1124.5L869.2 1125.0L869.0 1125.1L868.8 1125.2ZM847.8 1114.1L847.6 1114.1L847.4 1114.2L845.6 1114.7L845.4 1114.8L845.2 1114.9L843.6 1115.8L843.4 1115.9L843.2 1116.0L841.8 1117.2L841.6 1117.3L841.5 1117.5L840.3 1118.9L840.2 1119.1L840.1 1119.3L839.2 1120.9L839.1 1121.1L839.0 1121.3L838.5 1123.1L838.4 1123.3L838.4 1123.5L838.2 1125.4L838.2 1125.6L838.2 1125.8L838.4 1127.7L838.4 1127.9L838.5 1128.1L839.0 1129.9L839.1 1130.1L839.2 1130.3L840.1 1131.9L840.2 1132.1L840.3 1132.3L841.5 1133.7L841.6 1133.9L841.8 1134.0L843.2 1135.2L843.4 1135.3L843.6 1135.4L845.2 1136.3L845.4 1136.4L845.6 1136.5L847.4 1137.0L847.6 1137.1L847.8 1137.1L849.7 1137.3L849.9 1137.3L850.1 1137.3L852.0 1137.1L852.2 1137.1L852.4 1137.0L854.2 1136.5L854.4 1136.4L854.6 1136.3L856.2 1135.4L856.4 1135.3L856.6 1135.2L858.0 1134.0L858.2 1133.9L858.3 1133.7L859.5 1132.3L859.6 1132.1L859.7 1131.9L860.6 1130.3L860.7 1130.1L860.8 1129.9L861.3 1128.1L861.4 1127.9L861.4 1127.7L861.6 1125.8L861.6 1125.6L861.6 1125.4L861.4 1123.5L861.4 1123.3L861.3 1123.1L860.8 1121.3L860.7 1121.1L860.6 1120.9L859.7 1119.3L859.6 1119.1L859.5 1118.9L858.3 1117.5L858.2 1117.3L858.0 1117.2L856.6 1116.0L856.4 1115.9L856.2 1115.8L854.6 1114.9L854.4 1114.8L854.2 1114.7L852.4 1114.2L852.2 1114.1L852.0 1114.1L850.1 1113.9L849.9 1113.9L849.7 1113.9Z" fill="#eeeeee" fill-rule="evenodd"/>
<g fill="#447aad">
<path d="M1690.2 619.4L1690.2 639.7L1695.2 689.3L1695.2 689.9L1695.2 756.1L1699.7 786.1L1705.3 788.5L1713.8 791.8L1714.3 792.0L1714.7 792.3L1715.2 792.6L1715.6 792.9L1715.9 793.3L1716.3 793.7L1716.5 794.2L1716.8 794.7L1716.9 795.2L1717.1 795.7L1717.2 796.2L1717.2 796.7L1717.2 851.0L1717.2 851.5L1717.1 852.0L1717.0 852.5L1716.8 853.0L1716.6 853.5L1716.3 853.9L1716.0 854.3L1715.6 854.7L1715.2 855.1L1714.8 855.4L1714.4 855.7L1713.9 855.9L1713.4 856.0L1712.9 856.2L1712.4 856.2L1711.9 856.3L1711.4 856.2L1708.0 855.9L1711.1 949.6L1712.7 978.9L1720.9 985.8L1721.3 986.2L1721.7 986.6L1726.7 993.3L1731.7 1000.0L1736.7 1006.6L1737.0 1007.0L1737.2 1007.4L1737.4 1007.9L1737.6 1008.3L1737.7 1008.8L1737.7 1009.3L1737.8 1009.8L1737.8 1016.3L1740.8 1020.4L1749.5 1024.1L1750.0 1024.3L1750.4 1024.6L1750.8 1024.9L1751.2 1025.2L1751.6 1025.6L1751.9 1026.0L1752.1 1026.5L1752.4 1027.0L1752.5 1027.5L1752.7 1028.0L1754.3 1037.1L1755.8 1044.3L1761.3 1052.7L1766.2 1056.4L1775.0 1057.8L1775.5 1058.0L1776.0 1058.1L1776.5 1058.4L1777.0 1058.6L1777.4 1059.0L1777.8 1059.3L1781.9 1063.4L1784.0 1064.1L1786.8 1063.0L1787.9 1060.7L1784.4 1053.8L1784.2 1053.3L1784.0 1052.9L1783.9 1052.4L1783.8 1051.9L1783.8 1051.4L1783.8 1039.7L1783.8 1039.2L1783.9 1038.7L1784.0 1038.2L1784.2 1037.7L1784.4 1037.3L1784.7 1036.8L1785.0 1036.4L1785.3 1036.0L1792.0 1029.4L1792.6 1028.9L1798.0 1024.8L1799.9 1019.6L1800.1 1019.1L1800.4 1018.6L1800.7 1018.2L1801.0 1017.8L1801.4 1017.5L1801.8 1017.1L1802.3 1016.8L1802.7 1016.6L1803.2 1016.4L1803.7 1016.3L1809.3 1015.0L1813.1 1009.9L1813.5 1009.6L1813.8 1009.2L1814.2 1008.9L1814.6 1008.6L1815.0 1008.4L1815.5 1008.2L1816.0 1008.0L1816.4 1007.9L1816.9 1007.9L1825.5 1007.1L1832.5 1002.3L1837.3 998.2L1837.7 997.9L1838.1 997.7L1838.6 997.4L1839.1 997.3L1839.6 997.1L1840.1 997.1L1840.6 997.0L1841.1 997.0L1841.6 997.1L1842.1 997.2L1842.6 997.4L1843.0 997.6L1847.8 1000.0L1854.1 998.1L1854.6 998.0L1855.1 997.9L1855.6 997.8L1856.1 997.9L1856.6 997.9L1857.0 998.0L1857.5 998.2L1862.6 1000.1L1867.7 998.8L1868.2 998.7L1868.7 998.7L1869.2 998.7L1869.7 998.7L1870.2 998.8L1870.7 999.0L1871.1 999.1L1871.6 999.4L1872.0 999.6L1879.5 1004.9L1884.3 1006.1L1891.4 1005.4L1899.9 1003.3L1904.6 999.8L1907.3 992.8L1907.5 992.4L1907.8 991.9L1908.1 991.5L1908.4 991.1L1908.8 990.8L1909.2 990.5L1909.7 990.2L1910.1 990.0L1910.6 989.8L1911.1 989.7L1917.5 988.2L1921.3 985.5L1923.2 981.1L1923.4 980.6L1923.7 980.2L1924.0 979.8L1924.4 979.4L1924.8 979.0L1925.2 978.7L1925.6 978.5L1925.9 978.3L1925.7 978.2L1925.3 977.8L1924.9 977.5L1924.6 977.1L1924.3 976.6L1924.1 976.2L1923.9 975.7L1921.4 968.2L1921.2 967.7L1921.1 967.2L1921.1 966.7L1921.1 966.2L1921.2 965.6L1922.8 956.0L1923.6 936.3L1923.6 936.0L1925.3 919.4L1925.4 918.9L1925.5 918.5L1927.9 909.4L1928.1 908.9L1928.3 908.4L1928.6 908.0L1928.8 907.6L1929.2 907.2L1929.5 906.8L1929.9 906.5L1930.3 906.2L1930.8 906.0L1931.3 905.8L1931.7 905.6L1932.2 905.5L1932.7 905.5L1953.6 904.3L1954.1 904.3L1954.6 904.4L1955.1 904.5L1955.6 904.6L1956.0 904.8L1956.5 905.0L1956.9 905.3L1957.3 905.6L1957.7 906.0L1958.0 906.4L1958.3 906.8L1961.7 912.1L1961.9 912.6L1962.1 913.1L1962.3 913.6L1964.8 923.6L1964.9 924.4L1966.6 940.6L1969.0 950.3L1969.1 950.8L1969.1 951.4L1969.1 951.9L1969.0 952.5L1968.9 953.0L1966.7 960.4L1967.4 968.5L1967.5 969.0L1967.4 969.6L1967.3 970.1L1967.2 970.6L1967.0 971.1L1966.8 971.5L1966.5 972.0L1966.2 972.4L1965.9 972.8L1965.5 973.1L1965.1 973.4L1964.6 973.7L1964.1 973.9L1963.7 974.1L1963.1 974.2L1962.6 974.3L1949.3 975.4L1948.7 975.5L1939.1 975.2L1931.1 978.8L1931.1 978.8L1931.1 978.8L1931.5 979.1L1931.9 979.5L1932.2 979.9L1932.5 980.3L1932.8 980.8L1933.0 981.2L1934.1 984.1L1938.8 986.0L1945.6 984.6L1946.1 984.6L1946.6 984.5L1947.1 984.6L1947.6 984.6L1948.1 984.7L1948.6 984.9L1956.9 988.2L1957.4 988.5L1957.9 988.7L1958.3 989.1L1958.7 989.4L1964.9 995.6L1971.4 999.5L1976.4 999.5L1979.9 996.6L1980.3 996.3L1980.8 996.0L1981.2 995.8L1981.7 995.6L1982.2 995.5L1986.4 994.6L1986.9 994.5L1987.4 994.5L1988.0 994.5L1988.5 994.6L1989.0 994.8L1989.5 995.0L1990.0 995.2L1990.4 995.5L1990.9 995.8L1991.2 996.2L1991.6 996.6L1996.9 1003.4L2004.6 1008.8L2005.0 1009.1L2005.4 1009.4L2005.7 1009.8L2006.0 1010.2L2006.3 1010.7L2006.5 1011.1L2006.6 1011.6L2006.8 1012.1L2006.8 1012.6L2006.9 1013.1L2006.9 1018.1L2006.8 1018.6L2006.7 1019.1L2006.6 1019.6L2006.4 1020.1L2006.2 1020.6L2006.0 1021.0L2005.7 1021.5L2005.3 1021.8L2001.9 1025.3L2001.9 1028.0L2005.8 1033.3L2006.1 1033.7L2006.4 1034.2L2006.6 1034.7L2009.5 1043.6L2015.3 1049.3L2015.6 1049.7L2016.0 1050.1L2020.7 1057.2L2026.1 1062.6L2026.4 1063.0L2026.7 1063.4L2027.0 1063.8L2027.2 1064.3L2027.4 1064.8L2027.5 1065.2L2027.6 1065.7L2028.2 1070.6L2031.8 1074.2L2036.3 1073.7L2041.2 1070.3L2041.2 1066.4L2041.3 1065.9L2041.3 1065.4L2041.4 1065.0L2041.6 1064.5L2043.7 1058.8L2043.7 1051.4L2043.8 1050.9L2043.8 1050.4L2044.0 1049.9L2046.1 1042.8L2044.8 1036.3L2040.8 1026.8L2040.6 1026.3L2040.5 1025.8L2040.4 1025.3L2040.4 1024.8L2040.4 1021.4L2035.5 1014.5L2035.2 1014.0L2035.0 1013.6L2034.8 1013.1L2034.7 1012.6L2032.2 1001.0L2030.0 992.1L2025.6 986.3L2025.3 985.9L2025.1 985.4L2024.9 984.9L2024.7 984.4L2024.6 983.9L2024.6 983.4L2024.6 982.8L2024.7 982.3L2024.8 981.8L2024.9 981.3L2025.1 980.8L2029.0 973.0L2031.4 962.8L2031.5 962.3L2031.7 961.8L2032.0 961.3L2032.3 960.9L2032.6 960.5L2033.0 960.1L2041.2 952.7L2047.5 946.4L2052.3 940.0L2052.6 939.6L2053.0 939.3L2053.4 939.0L2053.8 938.7L2060.8 934.5L2063.4 929.2L2063.7 928.8L2064.0 928.3L2064.3 928.0L2064.7 927.6L2065.0 927.3L2065.5 927.0L2065.9 926.8L2066.4 926.6L2066.9 926.4L2073.1 924.9L2082.6 920.8L2085.1 915.9L2085.3 915.4L2085.6 915.0L2086.0 914.6L2086.4 914.2L2086.8 913.9L2087.3 913.6L2087.8 913.4L2088.3 913.2L2096.2 910.8L2101.8 908.0L2102.9 902.2L2103.0 901.7L2103.2 901.3L2103.4 900.8L2103.7 900.4L2103.9 900.0L2104.3 899.6L2104.6 899.3L2110.7 893.9L2113.9 889.3L2112.3 885.1L2112.2 884.7L2112.1 884.2L2112.0 883.7L2112.0 883.2L2112.0 882.8L2112.8 875.2L2111.2 867.7L2111.2 867.2L2111.1 866.7L2111.2 866.2L2111.2 865.7L2111.3 865.2L2111.5 864.7L2118.2 848.0L2118.4 847.6L2118.7 847.1L2119.0 846.7L2119.3 846.3L2119.7 846.0L2119.7 845.9L2120.0 845.3L2119.4 840.3L2119.4 839.8L2119.4 839.3L2119.4 838.8L2119.5 838.3L2119.7 837.9L2119.9 837.4L2120.1 837.0L2122.6 832.8L2122.9 832.3L2123.3 831.9L2123.7 831.5L2129.4 826.5L2132.3 820.0L2132.6 819.5L2133.0 818.9L2137.9 812.7L2138.5 805.9L2138.6 805.4L2138.7 804.9L2138.9 804.4L2139.1 804.0L2139.3 803.5L2139.6 803.1L2140.0 802.7L2140.3 802.4L2147.0 796.6L2147.4 796.3L2147.8 796.0L2148.2 795.8L2148.7 795.6L2149.2 795.4L2154.2 794.2L2157.6 790.4L2156.5 788.1L2149.5 785.5L2149.0 785.3L2148.6 785.1L2148.1 784.8L2147.8 784.5L2147.4 784.2L2147.1 783.8L2146.8 783.4L2146.5 782.9L2146.3 782.5L2146.2 782.0L2146.1 781.5L2146.0 781.0L2146.0 780.5L2146.0 780.0L2146.9 772.5L2146.9 772.0L2147.1 771.5L2147.2 771.0L2147.5 770.6L2147.7 770.1L2148.0 769.7L2148.4 769.4L2148.7 769.0L2149.2 768.7L2149.6 768.5L2150.0 768.2L2150.5 768.1L2151.0 767.9L2151.5 767.8L2152.0 767.8L2152.5 767.8L2153.0 767.9L2153.5 768.0L2154.0 768.2L2154.5 768.4L2158.0 770.1L2163.1 769.5L2163.6 769.5L2164.2 769.5L2164.7 769.6L2165.2 769.7L2165.7 769.8L2166.2 770.1L2166.6 770.3L2167.1 770.6L2167.5 771.0L2167.8 771.4L2168.1 771.8L2168.4 772.2L2168.6 772.7L2168.8 773.2L2168.9 773.7L2170.2 780.0L2175.4 783.6L2183.7 783.6L2184.3 783.6L2192.6 784.5L2193.1 784.6L2198.8 785.7L2202.3 782.6L2201.2 771.1L2196.6 768.0L2190.1 766.6L2189.6 766.4L2189.1 766.3L2188.6 766.0L2188.1 765.7L2187.7 765.4L2187.3 765.0L2187.0 764.6L2186.7 764.1L2186.4 763.7L2186.2 763.2L2186.1 762.7L2186.0 762.1L2185.9 761.6L2186.0 761.1L2186.8 749.4L2186.8 748.9L2187.0 748.4L2187.1 747.9L2187.3 747.5L2187.5 747.0L2187.8 746.6L2192.0 741.0L2192.7 736.6L2192.8 736.1L2192.9 735.6L2193.1 735.1L2193.3 734.6L2193.6 734.2L2193.9 733.8L2194.3 733.4L2194.7 733.1L2195.1 732.8L2195.5 732.6L2196.0 732.4L2196.5 732.2L2205.1 729.9L2212.5 726.2L2213.6 721.9L2213.7 721.4L2213.9 720.9L2214.2 720.4L2214.4 720.0L2214.8 719.6L2215.1 719.2L2215.5 718.9L2216.0 718.6L2216.4 718.4L2216.9 718.2L2217.4 718.0L2223.0 716.6L2228.8 712.3L2229.3 712.0L2229.8 711.7L2230.3 711.5L2234.5 710.1L2237.8 707.6L2237.3 704.8L2231.0 701.1L2230.4 700.7L2229.9 700.3L2226.6 696.9L2221.0 691.3L2215.7 690.0L2215.2 689.8L2214.7 689.6L2209.2 686.8L2203.4 690.9L2203.0 691.1L2202.5 691.4L2202.1 691.5L2201.6 691.7L2201.1 691.8L2200.6 691.8L2200.1 691.8L2199.6 691.8L2199.1 691.7L2194.9 690.6L2192.0 692.7L2191.5 697.2L2191.4 697.8L2191.2 698.4L2188.7 705.0L2188.5 705.5L2188.2 706.0L2187.9 706.4L2187.6 706.8L2187.2 707.1L2186.9 707.4L2186.4 707.7L2186.0 708.0L2185.5 708.2L2185.0 708.3L2184.5 708.4L2184.0 708.5L2183.5 708.5L2183.0 708.4L2178.6 707.8L2174.2 709.7L2173.7 709.9L2173.2 710.0L2172.6 710.1L2172.1 710.1L2171.6 710.1L2171.0 710.0L2162.7 708.4L2162.2 708.2L2154.7 706.0L2144.8 706.0L2136.0 709.7L2127.8 713.7L2127.4 713.9L2126.9 714.1L2126.4 714.2L2125.9 714.3L2125.4 714.3L2124.9 714.3L2124.4 714.2L2118.9 713.1L2115.1 716.9L2110.9 721.1L2110.5 721.4L2106.7 724.6L2103.9 733.1L2103.7 733.6L2103.4 734.1L2103.2 734.5L2102.8 734.9L2102.5 735.3L2102.1 735.6L2101.7 735.9L2101.2 736.2L2094.6 739.5L2094.1 739.7L2093.7 739.9L2093.2 740.0L2084.9 741.6L2084.4 741.7L2084.0 741.8L2083.5 741.7L2083.0 741.7L2073.4 740.1L2065.9 740.1L2063.0 742.6L2064.1 748.8L2064.2 749.4L2064.2 749.9L2064.1 750.4L2064.0 751.0L2063.9 751.5L2063.7 752.0L2063.5 752.4L2063.2 752.9L2062.8 753.3L2062.5 753.7L2062.1 754.0L2058.7 756.5L2058.3 756.8L2057.9 757.0L2050.2 760.8L2042.5 767.9L2042.0 768.2L2041.6 768.5L2041.1 768.8L2040.6 769.0L2040.0 769.1L2039.5 769.2L2038.9 769.2L2030.2 769.2L2023.4 772.6L2017.1 777.3L2016.7 777.6L2016.3 777.8L2015.8 778.0L2015.3 778.2L2014.8 778.3L2014.3 778.4L2013.8 778.4L2013.3 778.3L2012.8 778.2L2012.3 778.1L2011.9 777.9L2011.4 777.7L2011.0 777.5L2004.9 773.3L2004.5 773.0L2004.1 772.6L2003.7 772.2L2003.4 771.8L2003.1 771.3L2002.9 770.9L2002.8 770.3L2002.6 769.8L2002.6 769.3L2002.6 768.8L2002.6 768.3L2002.7 767.7L2002.8 767.2L2003.0 766.7L2003.3 766.3L2003.6 765.8L2009.8 757.3L2012.0 751.0L2010.2 741.0L2007.8 733.2L2004.9 726.0L1999.7 720.0L1999.4 719.6L1999.1 719.2L1998.9 718.7L1998.7 718.3L1998.6 717.8L1996.1 708.1L1993.1 700.5L1989.1 693.8L1982.8 690.3L1982.4 690.0L1981.9 689.7L1981.5 689.3L1981.2 688.9L1980.9 688.5L1980.6 688.0L1980.4 687.5L1980.3 687.0L1980.2 686.5L1980.1 686.0L1980.1 685.4L1980.2 684.9L1980.3 684.4L1980.4 683.9L1982.1 679.4L1981.4 676.1L1977.6 673.1L1970.9 672.7L1970.4 672.6L1970.0 672.5L1969.5 672.4L1969.1 672.2L1968.7 672.0L1964.2 669.6L1962.7 670.2L1958.6 675.0L1958.2 675.4L1957.8 675.7L1957.4 676.0L1956.9 676.3L1956.4 676.5L1955.9 676.7L1955.4 676.8L1954.9 676.8L1954.4 676.8L1953.8 676.8L1953.3 676.7L1952.8 676.5L1952.3 676.3L1951.9 676.1L1951.4 675.8L1945.9 671.7L1939.1 671.0L1938.6 670.9L1938.2 670.8L1929.1 668.3L1928.6 668.2L1928.1 668.0L1927.6 667.7L1927.2 667.4L1926.8 667.1L1926.5 666.7L1926.1 666.3L1925.9 665.9L1925.6 665.4L1925.4 664.9L1925.3 664.4L1925.2 663.9L1925.2 663.4L1925.2 662.9L1925.2 662.4L1925.3 661.9L1925.5 661.4L1927.7 655.7L1927.0 653.7L1923.2 651.9L1920.2 652.7L1917.9 658.5L1917.7 659.0L1917.4 659.5L1917.1 659.9L1916.7 660.3L1916.3 660.6L1915.9 661.0L1915.5 661.2L1915.0 661.5L1914.5 661.6L1905.7 664.3L1898.3 671.2L1897.9 671.6L1897.4 671.9L1897.0 672.2L1896.5 672.4L1896.0 672.5L1895.4 672.6L1894.9 672.7L1894.4 672.7L1893.8 672.6L1893.3 672.5L1892.8 672.3L1892.3 672.1L1884.0 668.0L1883.5 667.7L1876.9 663.6L1876.5 663.3L1876.1 662.9L1875.7 662.6L1875.4 662.1L1875.1 661.7L1874.9 661.3L1874.7 660.8L1874.5 660.3L1874.4 659.8L1874.4 659.3L1874.4 658.7L1874.5 658.2L1874.6 657.7L1874.7 657.2L1874.9 656.8L1875.2 656.3L1875.5 655.9L1875.8 655.5L1876.2 655.1L1876.6 654.8L1877.0 654.5L1887.0 648.7L1887.4 648.5L1887.8 648.3L1892.4 646.6L1893.9 643.5L1893.0 641.3L1889.7 639.8L1885.2 641.4L1878.1 645.4L1877.6 645.6L1877.1 645.8L1876.6 645.9L1876.1 646.0L1875.5 646.0L1868.0 646.0L1867.6 646.0L1867.1 646.0L1866.7 645.9L1859.6 644.0L1854.1 645.1L1853.6 645.2L1853.0 645.2L1847.2 645.2L1846.7 645.2L1846.2 645.1L1845.7 645.0L1845.2 644.8L1844.7 644.6L1844.2 644.3L1843.8 644.0L1843.4 643.6L1843.1 643.2L1842.8 642.8L1842.5 642.3L1842.3 641.8L1842.1 641.3L1842.0 640.8L1842.0 640.3L1841.9 639.8L1842.0 639.3L1842.1 638.7L1842.2 638.2L1843.8 633.6L1843.0 631.3L1839.7 629.9L1831.8 633.2L1831.3 633.3L1830.8 633.5L1830.3 633.5L1829.7 633.6L1829.2 633.5L1828.7 633.5L1828.2 633.3L1827.7 633.1L1827.2 632.9L1826.8 632.6L1826.4 632.3L1826.0 632.0L1825.6 631.6L1825.3 631.2L1825.1 630.7L1824.8 630.2L1824.7 629.7L1824.6 629.2L1824.5 628.7L1824.5 628.2L1824.5 627.7L1824.6 627.1L1824.7 626.6L1824.9 626.2L1827.8 619.6L1827.1 617.3L1823.9 616.0L1818.4 618.2L1817.9 618.4L1817.4 618.5L1817.0 618.6L1816.5 618.6ZM2196.1 706.1L2196.0 705.6L2195.9 705.1L2195.9 704.5L2196.0 704.0L2196.1 703.5L2196.3 703.0L2196.5 702.5L2199.0 697.5L2199.2 697.0L2199.6 696.6L2199.9 696.2L2200.3 695.8L2200.7 695.5L2201.2 695.2L2201.6 695.0L2202.1 694.8L2202.6 694.7L2203.2 694.6L2203.7 694.6L2204.2 694.6L2212.6 695.4L2213.1 695.5L2213.6 695.6L2214.1 695.8L2214.5 696.0L2215.0 696.3L2215.4 696.6L2215.8 697.0L2219.9 701.1L2220.3 701.5L2220.6 701.9L2220.9 702.4L2221.1 702.9L2221.3 703.4L2221.4 703.9L2221.5 704.4L2221.5 704.9L2221.4 705.5L2221.3 706.0L2221.2 706.5L2221.0 707.0L2220.8 707.5L2220.5 707.9L2220.2 708.3L2219.8 708.7L2219.4 709.1L2218.9 709.3L2218.5 709.6L2218.0 709.8L2208.8 713.1L2208.4 713.3L2208.0 713.4L2207.5 713.4L2207.0 713.5L2202.0 713.5L2201.5 713.4L2201.0 713.4L2200.6 713.2L2200.1 713.1L2199.6 712.9L2199.2 712.6L2198.8 712.3L2198.4 712.0L2198.1 711.7L2197.8 711.3L2197.5 710.8L2197.3 710.4L2197.1 709.9L2196.9 709.5ZM1951.8 691.9L1956.3 694.4L1956.8 694.7L1957.2 695.0L1957.6 695.4L1957.9 695.8L1958.2 696.2L1958.5 696.6L1958.7 697.1L1958.8 697.6L1959.0 698.1L1959.0 698.7L1959.0 699.2L1959.0 699.7L1958.9 700.2L1958.7 700.7L1955.9 709.0L1955.9 709.2L1950.2 724.1L1950.2 738.9L1954.9 753.1L1955.1 753.6L1955.2 754.1L1955.2 754.6L1955.2 755.2L1955.1 755.7L1955.0 756.2L1954.8 756.7L1954.6 757.2L1954.4 757.6L1945.7 771.3L1945.4 771.7L1945.1 772.1L1944.7 772.4L1944.3 772.7L1943.9 773.0L1943.4 773.3L1942.9 773.4L1942.4 773.6L1941.9 773.7L1941.4 773.7L1940.9 773.7L1940.4 773.6L1939.9 773.5L1939.4 773.4L1938.9 773.2L1938.5 772.9L1938.0 772.6L1937.7 772.3L1937.3 771.9L1937.0 771.5L1936.7 771.1L1936.5 770.6L1936.3 770.1L1931.6 756.5L1931.5 755.9L1931.4 755.4L1931.3 754.8L1931.4 754.2L1933.0 739.2L1933.1 738.8L1936.4 722.1L1936.5 721.7L1941.2 705.1L1941.2 705.0L1944.2 695.0L1944.4 694.5L1944.6 694.0L1944.9 693.6L1945.2 693.2L1945.5 692.8L1945.9 692.4L1946.3 692.1L1946.8 691.9L1947.3 691.6L1947.8 691.5L1948.3 691.3L1948.8 691.3L1949.3 691.2L1949.8 691.3L1950.4 691.4L1950.9 691.5L1951.3 691.7ZM1832.1 882.5L1832.1 881.9L1832.2 881.4L1832.3 880.9L1832.5 880.4L1832.7 879.9L1833.0 879.5L1833.3 879.0L1833.7 878.6L1834.1 878.3L1834.5 878.0L1835.0 877.7L1835.5 877.5L1836.0 877.4L1836.5 877.2L1837.0 877.2L1865.3 875.5L1865.8 875.5L1889.1 876.3L1889.6 876.4L1890.1 876.5L1890.6 876.6L1891.1 876.8L1891.6 877.1L1892.0 877.3L1892.4 877.7L1892.8 878.0L1893.1 878.4L1893.4 878.8L1893.7 879.3L1893.9 879.8L1896.4 886.4L1896.5 886.9L1896.7 887.5L1896.7 888.0L1896.7 888.5L1896.7 889.1L1895.0 899.9L1894.9 900.4L1894.7 900.9L1894.5 901.4L1894.3 901.9L1894.0 902.3L1893.6 902.7L1893.2 903.1L1892.8 903.4L1888.3 906.7L1885.5 913.5L1885.3 914.1L1884.9 914.6L1880.0 921.7L1879.2 933.6L1879.2 934.1L1879.1 934.6L1878.9 935.0L1878.7 935.5L1878.5 936.0L1878.2 936.4L1877.9 936.8L1877.5 937.1L1877.1 937.5L1876.7 937.7L1876.2 938.0L1875.8 938.2L1875.3 938.3L1874.8 938.4L1874.3 938.5L1861.0 939.3L1860.9 939.3L1842.6 940.2L1842.1 940.2L1841.5 940.1L1841.0 940.0L1840.5 939.9L1840.1 939.7L1839.6 939.4L1839.2 939.1L1838.8 938.8L1838.4 938.4L1838.1 938.0L1837.8 937.6L1837.6 937.1L1837.4 936.7L1837.2 936.2L1835.9 930.9L1830.3 925.3L1829.9 924.9L1829.6 924.5L1829.3 924.1L1829.1 923.6L1829.0 923.1L1826.5 914.8L1826.3 914.3L1826.3 913.8L1826.2 913.3L1826.3 912.8L1826.3 912.3L1826.4 911.8L1826.6 911.3L1826.8 910.9L1827.0 910.5L1830.2 905.3L1829.6 898.8L1829.6 898.3L1829.6 897.8L1829.7 897.3L1829.8 896.8L1832.1 889.2Z" fill-rule="evenodd"/>
<path d="M1682.9 623.3L1742.0 620.0L1742.0 861.0L1721.2 861.0L1721.2 796.4L1699.5 791.4L1674.6 783.1L1666.2 774.8L1666.2 749.8L1674.6 733.2L1674.6 716.5L1682.9 699.9L1682.9 674.9L1666.2 666.6L1662.9 649.9L1674.6 633.3ZM1403.6 625.8L1419.9 621.3L1421.6 641.6L1416.6 658.3L1404.9 673.2L1406.6 686.6L1436.6 699.9L1419.9 706.5L1408.3 716.5L1403.3 741.5L1403.3 758.1L1381.6 758.1L1384.1 744.8L1398.3 733.2L1387.5 714.0L1389.1 698.2L1391.6 673.2L1387.5 659.9L1384.1 637.9ZM1449.9 629.6L1499.8 621.3L1514.8 629.6L1534.8 648.3L1523.1 659.9L1512.3 672.4L1512.3 688.2L1489.8 694.9L1436.6 699.9L1421.6 689.9L1435.7 672.4L1435.7 659.9L1437.4 641.6ZM1551.7 625.8L1593.8 627.5L1590.0 644.1L1605.5 657.4L1622.1 659.1L1637.1 681.6L1647.9 684.1L1636.3 694.0L1610.0 699.9L1564.7 699.9L1549.7 704.0L1533.9 707.4L1533.9 684.1L1549.7 679.9L1541.4 658.3L1558.1 656.6L1562.2 642.4ZM1494.8 728.2L1498.1 709.9L1512.3 713.2L1516.4 738.1L1548.9 731.5L1561.7 721.5L1576.4 719.8L1588.0 727.3L1579.7 758.1L1584.7 759.8L1588.0 781.4L1599.7 791.4L1603.8 806.4L1586.4 814.7L1583.0 828.0L1581.4 839.7L1566.4 851.3L1563.0 861.0L1541.4 861.0L1546.4 839.7L1549.7 825.5L1553.9 815.5L1549.7 798.1L1551.4 778.1L1527.3 759.8L1523.1 749.8L1501.8 752.3ZM1711.2 840.0L1742.0 840.0L1742.0 1024.8L1732.8 1006.4L1724.5 994.8L1714.5 988.1L1699.5 973.2L1691.2 956.5L1692.9 933.2L1691.2 906.6L1699.5 881.6L1709.5 865.0ZM1643.8 875.5L1676.2 873.3L1699.5 881.6L1691.2 906.6L1674.6 913.2L1646.3 906.6L1629.6 904.1L1623.8 895.8L1643.8 889.9ZM1613.8 956.0L1621.6 947.4L1639.9 937.9L1657.9 946.0L1653.8 963.2L1665.4 969.8L1680.4 969.8L1683.7 981.5L1683.7 994.8L1699.5 996.5L1714.5 988.1L1691.2 956.5L1682.1 949.9L1682.1 934.0L1692.9 933.2L1646.3 954.8L1629.6 954.8ZM1711.6 851.0L1711.6 796.4L1701.6 783.9L1675.8 781.4L1673.3 756.4L1681.6 739.8L1673.3 723.2L1689.9 706.5L1698.3 689.9L1678.3 676.6L1689.9 656.6L1689.9 633.3L1693.6 621.6L1756.5 621.6L1756.5 851.0ZM1710.8 850.0L1707.5 860.0L1699.2 868.3L1697.5 891.6L1690.9 916.6L1692.5 933.2L1690.9 958.2L1697.5 979.8L1722.5 991.5L1740.8 991.5L1740.8 850.0ZM1661.7 875.0L1710.8 866.6L1710.8 983.2L1714.2 988.1L1700.0 996.5L1683.4 994.8L1683.4 981.5L1681.7 969.8L1682.2 949.9L1682.2 933.2L1663.9 925.7L1657.6 908.3L1657.6 894.9ZM1643.9 875.8L1675.9 873.3L1692.5 877.5L1697.5 891.6L1690.9 916.6L1663.9 925.7L1643.9 919.9L1629.3 904.9L1624.0 895.8L1645.9 889.9Z" stroke="#447aad" stroke-width="2.5" stroke-linejoin="round"/>
<circle cx="2240.0" cy="1181.6" r="9.6"/><circle cx="2245.5" cy="1181.6" r="9.6"/><circle cx="2251.0" cy="1181.6" r="9.6"/><circle cx="2256.5" cy="1181.6" r="9.6"/><circle cx="2262.0" cy="1181.6" r="9.6"/><circle cx="2240.0" cy="1186.5" r="9.6"/><circle cx="2245.5" cy="1186.5" r="9.6"/><circle cx="2251.0" cy="1186.5" r="9.6"/><circle cx="2256.5" cy="1186.5" r="9.6"/><circle cx="2262.0" cy="1186.5" r="9.6"/><circle cx="2240.0" cy="1191.4" r="9.6"/><circle cx="2245.5" cy="1191.4" r="9.6"/><circle cx="2251.0" cy="1191.4" r="9.6"/><circle cx="2256.5" cy="1191.4" r="9.6"/><circle cx="2262.0" cy="1191.4" r="9.6"/><circle cx="2267.0" cy="1183.5" r="9.6"/><circle cx="2270.6" cy="1185.5" r="9.6"/><circle cx="2267.0" cy="1189.0" r="9.6"/><circle cx="2270.0" cy="1187.5" r="9.6"/><circle cx="2247.0" cy="1192.2" r="9.6"/><circle cx="1823.9" cy="620.0" r="9.6"/><circle cx="1839.7" cy="633.6" r="9.6"/><circle cx="1823.9" cy="641.6" r="9.6"/><circle cx="1843.9" cy="651.6" r="9.6"/><circle cx="1859.7" cy="648.3" r="9.6"/><circle cx="1875.5" cy="650.3" r="9.6"/><circle cx="1890.0" cy="643.6" r="9.6"/><circle cx="1923.8" cy="655.7" r="9.6"/><circle cx="1914.6" cy="664.9" r="9.6"/><circle cx="1903.0" cy="669.1" r="9.6"/><circle cx="1963.7" cy="673.2" r="9.6"/><circle cx="1977.9" cy="677.4" r="9.6"/><circle cx="1954.6" cy="682.4" r="9.6"/><circle cx="1944.6" cy="674.9" r="9.6"/><circle cx="1934.6" cy="674.9" r="9.6"/><circle cx="1856.4" cy="671.6" r="9.6"/><circle cx="1878.0" cy="671.6" r="9.6"/><circle cx="2195.4" cy="693.2" r="9.6"/><circle cx="2209.5" cy="689.9" r="9.6"/><circle cx="2222.0" cy="695.7" r="9.6"/><circle cx="2234.5" cy="705.7" r="9.6"/><circle cx="2223.7" cy="713.2" r="9.6"/><circle cx="2210.4" cy="716.5" r="9.6"/><circle cx="2190.4" cy="704.8" r="9.6"/><circle cx="2197.9" cy="770.6" r="9.6"/><circle cx="2198.7" cy="781.4" r="9.6"/><circle cx="2187.1" cy="779.7" r="9.6"/><circle cx="2173.7" cy="779.7" r="9.6"/><circle cx="2153.8" cy="790.6" r="9.6"/><circle cx="2119.7" cy="715.7" r="9.6"/><circle cx="2108.8" cy="724.8" r="9.6"/><circle cx="2067.2" cy="744.0" r="9.6"/><circle cx="1696.1" cy="623.8" r="9.6"/><circle cx="1694.4" cy="632.4" r="9.6"/><circle cx="1694.5" cy="640.4" r="9.6"/><circle cx="1695.2" cy="649.7" r="9.6"/><circle cx="1695.8" cy="658.1" r="9.6"/><circle cx="1697.6" cy="665.0" r="9.6"/><circle cx="1698.4" cy="673.0" r="9.6"/><circle cx="1699.0" cy="684.1" r="9.6"/><circle cx="1699.8" cy="691.2" r="9.6"/><circle cx="1699.8" cy="699.4" r="9.6"/><circle cx="1699.0" cy="711.0" r="9.6"/><circle cx="1699.0" cy="717.5" r="9.6"/><circle cx="1699.0" cy="726.7" r="9.6"/><circle cx="1699.1" cy="733.5" r="9.6"/><circle cx="1699.0" cy="743.9" r="9.6"/><circle cx="1700.0" cy="750.5" r="9.6"/><circle cx="1700.7" cy="759.8" r="9.6"/><circle cx="1701.7" cy="770.1" r="9.6"/><circle cx="1703.0" cy="777.4" r="9.6"/><circle cx="1706.3" cy="784.4" r="9.6"/><circle cx="1713.8" cy="786.9" r="9.6"/><circle cx="1719.3" cy="790.8" r="9.6"/><circle cx="1721.3" cy="801.2" r="9.6"/><circle cx="1721.4" cy="808.6" r="9.6"/><circle cx="1722.2" cy="816.3" r="9.6"/><circle cx="1721.0" cy="824.1" r="9.6"/><circle cx="1721.7" cy="835.9" r="9.6"/><circle cx="1721.7" cy="843.3" r="9.6"/><circle cx="1720.8" cy="852.7" r="9.6"/><circle cx="1716.3" cy="859.5" r="9.6"/><circle cx="1712.2" cy="864.1" r="9.6"/><circle cx="1713.0" cy="873.6" r="9.6"/><circle cx="1713.4" cy="880.8" r="9.6"/><circle cx="1713.8" cy="890.3" r="9.6"/><circle cx="1713.8" cy="897.1" r="9.6"/><circle cx="1713.4" cy="908.0" r="9.6"/><circle cx="1713.9" cy="916.1" r="9.6"/><circle cx="1714.9" cy="921.0" r="9.6"/><circle cx="1714.8" cy="930.3" r="9.6"/><circle cx="1715.6" cy="939.5" r="9.6"/><circle cx="1715.5" cy="951.1" r="9.6"/><circle cx="1715.7" cy="957.4" r="9.6"/><circle cx="1716.3" cy="966.0" r="9.6"/><circle cx="1717.0" cy="973.7" r="9.6"/><circle cx="1722.1" cy="980.3" r="9.6"/><circle cx="1726.7" cy="986.1" r="9.6"/><circle cx="1732.6" cy="993.8" r="9.6"/><circle cx="1738.3" cy="1000.6" r="9.6"/><circle cx="1742.3" cy="1007.6" r="9.6"/><circle cx="1744.6" cy="1016.9" r="9.6"/><circle cx="1751.3" cy="1020.3" r="9.6"/><circle cx="1756.7" cy="1027.2" r="9.6"/><circle cx="1758.0" cy="1035.5" r="9.6"/><circle cx="1760.6" cy="1044.1" r="9.6"/><circle cx="1764.5" cy="1050.1" r="9.6"/><circle cx="1770.9" cy="1053.3" r="9.6"/><circle cx="1781.1" cy="1055.5" r="9.6"/><circle cx="1779.8" cy="1046.6" r="9.6"/><circle cx="1779.8" cy="1039.1" r="9.6"/><circle cx="1783.1" cy="1033.1" r="9.6"/><circle cx="1789.3" cy="1025.5" r="9.6"/><circle cx="1794.1" cy="1022.5" r="9.6"/><circle cx="1800.3" cy="1012.6" r="9.6"/><circle cx="1807.3" cy="1010.3" r="9.6"/><circle cx="1812.1" cy="1004.7" r="9.6"/><circle cx="1818.6" cy="1003.1" r="9.6"/><circle cx="1829.9" cy="999.0" r="9.6"/><circle cx="1836.9" cy="993.2" r="9.6"/><circle cx="1841.0" cy="993.0" r="9.6"/><circle cx="1852.5" cy="994.4" r="9.6"/><circle cx="1858.8" cy="994.0" r="9.6"/><circle cx="1865.6" cy="994.8" r="9.6"/><circle cx="1875.2" cy="996.2" r="9.6"/><circle cx="1883.8" cy="1001.6" r="9.6"/><circle cx="1892.6" cy="1001.1" r="9.6"/><circle cx="1897.3" cy="998.8" r="9.6"/><circle cx="1903.9" cy="991.1" r="9.6"/><circle cx="1907.2" cy="986.3" r="9.6"/><circle cx="1918.4" cy="982.6" r="9.6"/><circle cx="1918.9" cy="975.8" r="9.6"/><circle cx="1916.9" cy="965.6" r="9.6"/><circle cx="1917.9" cy="957.1" r="9.6"/><circle cx="1919.1" cy="950.7" r="9.6"/><circle cx="1919.0" cy="939.6" r="9.6"/><circle cx="1919.7" cy="934.7" r="9.6"/><circle cx="1920.0" cy="927.0" r="9.6"/><circle cx="1921.8" cy="916.2" r="9.6"/><circle cx="1923.7" cy="910.2" r="9.6"/><circle cx="1928.2" cy="902.4" r="9.6"/><circle cx="1937.4" cy="900.2" r="9.6"/><circle cx="1947.0" cy="900.3" r="9.6"/><circle cx="1954.0" cy="900.6" r="9.6"/><circle cx="1961.0" cy="903.0" r="9.6"/><circle cx="1966.4" cy="912.8" r="9.6"/><circle cx="1968.2" cy="919.7" r="9.6"/><circle cx="1970.4" cy="930.5" r="9.6"/><circle cx="1971.2" cy="938.6" r="9.6"/><circle cx="1972.3" cy="945.0" r="9.6"/><circle cx="1973.7" cy="954.0" r="9.6"/><circle cx="1971.1" cy="962.2" r="9.6"/><circle cx="1971.0" cy="970.2" r="9.6"/><circle cx="1966.4" cy="976.9" r="9.6"/><circle cx="1959.0" cy="979.0" r="9.6"/><circle cx="1950.2" cy="979.4" r="9.6"/><circle cx="1940.4" cy="979.4" r="9.6"/><circle cx="1941.4" cy="981.5" r="9.6"/><circle cx="1948.8" cy="980.6" r="9.6"/><circle cx="1957.7" cy="983.3" r="9.6"/><circle cx="1963.6" cy="987.3" r="9.6"/><circle cx="1969.4" cy="993.1" r="9.6"/><circle cx="1979.5" cy="991.3" r="9.6"/><circle cx="1985.6" cy="989.8" r="9.6"/><circle cx="1993.4" cy="992.2" r="9.6"/><circle cx="1997.8" cy="998.0" r="9.6"/><circle cx="2005.6" cy="1004.1" r="9.6"/><circle cx="2011.7" cy="1011.1" r="9.6"/><circle cx="2011.1" cy="1017.1" r="9.6"/><circle cx="2006.3" cy="1026.5" r="9.6"/><circle cx="2011.3" cy="1034.0" r="9.6"/><circle cx="2012.9" cy="1040.7" r="9.6"/><circle cx="2019.6" cy="1048.0" r="9.6"/><circle cx="2024.6" cy="1054.6" r="9.6"/><circle cx="2031.0" cy="1062.4" r="9.6"/><circle cx="2031.7" cy="1068.0" r="9.6"/><circle cx="2036.9" cy="1062.9" r="9.6"/><circle cx="2039.6" cy="1055.8" r="9.6"/><circle cx="2040.2" cy="1049.7" r="9.6"/><circle cx="2042.0" cy="1042.0" r="9.6"/><circle cx="2037.5" cy="1031.0" r="9.6"/><circle cx="2034.7" cy="1021.4" r="9.6"/><circle cx="2031.6" cy="1017.0" r="9.6"/><circle cx="2029.6" cy="1008.9" r="9.6"/><circle cx="2027.7" cy="999.7" r="9.6"/><circle cx="2025.0" cy="993.1" r="9.6"/><circle cx="2020.4" cy="984.7" r="9.6"/><circle cx="2022.1" cy="976.9" r="9.6"/><circle cx="2025.8" cy="969.3" r="9.6"/><circle cx="2027.7" cy="959.9" r="9.6"/><circle cx="2032.9" cy="953.9" r="9.6"/><circle cx="2039.5" cy="948.9" r="9.6"/><circle cx="2045.7" cy="941.6" r="9.6"/><circle cx="2049.8" cy="937.4" r="9.6"/><circle cx="2058.5" cy="930.8" r="9.6"/><circle cx="2063.2" cy="922.7" r="9.6"/><circle cx="2070.4" cy="920.7" r="9.6"/><circle cx="2076.8" cy="917.8" r="9.6"/><circle cx="2083.9" cy="909.7" r="9.6"/><circle cx="2090.2" cy="908.3" r="9.6"/><circle cx="2097.3" cy="905.9" r="9.6"/><circle cx="2101.3" cy="896.4" r="9.6"/><circle cx="2108.4" cy="890.3" r="9.6"/><circle cx="2107.3" cy="883.9" r="9.6"/><circle cx="2108.8" cy="874.4" r="9.6"/><circle cx="2107.5" cy="866.1" r="9.6"/><circle cx="2109.6" cy="856.4" r="9.6"/><circle cx="2113.1" cy="850.3" r="9.6"/><circle cx="2115.5" cy="841.0" r="9.6"/><circle cx="2116.4" cy="835.0" r="9.6"/><circle cx="2122.0" cy="827.8" r="9.6"/><circle cx="2127.2" cy="820.1" r="9.6"/><circle cx="2133.1" cy="811.6" r="9.6"/><circle cx="2134.2" cy="805.2" r="9.6"/><circle cx="2137.8" cy="799.1" r="9.6"/><circle cx="2143.7" cy="793.5" r="9.6"/><circle cx="2149.3" cy="789.6" r="9.6"/><circle cx="2142.5" cy="785.2" r="9.6"/><circle cx="2142.9" cy="775.1" r="9.6"/><circle cx="2145.6" cy="766.9" r="9.6"/><circle cx="2149.8" cy="763.7" r="9.6"/><circle cx="2158.9" cy="766.1" r="9.6"/><circle cx="2169.1" cy="766.4" r="9.6"/><circle cx="2173.7" cy="772.5" r="9.6"/><circle cx="2177.5" cy="778.7" r="9.6"/><circle cx="2184.2" cy="779.4" r="9.6"/><circle cx="2191.5" cy="780.4" r="9.6"/><circle cx="2197.4" cy="777.3" r="9.6"/><circle cx="2191.3" cy="770.9" r="9.6"/><circle cx="2184.9" cy="768.7" r="9.6"/><circle cx="2181.2" cy="761.5" r="9.6"/><circle cx="2182.9" cy="753.0" r="9.6"/><circle cx="2184.1" cy="743.7" r="9.6"/><circle cx="2188.2" cy="736.9" r="9.6"/><circle cx="2193.8" cy="729.0" r="9.6"/><circle cx="2199.0" cy="727.6" r="9.6"/><circle cx="2206.2" cy="724.0" r="9.6"/><circle cx="2208.1" cy="717.1" r="9.6"/><circle cx="2200.6" cy="717.2" r="9.6"/><circle cx="2193.1" cy="713.0" r="9.6"/><circle cx="2192.1" cy="709.3" r="9.6"/><circle cx="2181.3" cy="712.2" r="9.6"/><circle cx="2173.8" cy="714.0" r="9.6"/><circle cx="2168.5" cy="713.3" r="9.6"/><circle cx="2157.6" cy="711.9" r="9.6"/><circle cx="2148.9" cy="709.6" r="9.6"/><circle cx="2141.9" cy="712.2" r="9.6"/><circle cx="2135.0" cy="714.8" r="9.6"/><circle cx="2128.1" cy="718.7" r="9.6"/><circle cx="2119.9" cy="718.7" r="9.6"/><circle cx="2113.3" cy="723.7" r="9.6"/><circle cx="2109.9" cy="731.0" r="9.6"/><circle cx="2104.3" cy="740.1" r="9.6"/><circle cx="2097.8" cy="742.7" r="9.6"/><circle cx="2086.8" cy="745.1" r="9.6"/><circle cx="2082.7" cy="746.0" r="9.6"/><circle cx="2069.8" cy="744.3" r="9.6"/><circle cx="2068.4" cy="750.3" r="9.6"/><circle cx="2064.0" cy="757.8" r="9.6"/><circle cx="2057.7" cy="762.7" r="9.6"/><circle cx="2050.2" cy="766.2" r="9.6"/><circle cx="2044.8" cy="771.6" r="9.6"/><circle cx="2039.3" cy="774.1" r="9.6"/><circle cx="2028.0" cy="775.1" r="9.6"/><circle cx="2023.2" cy="779.2" r="9.6"/><circle cx="2014.3" cy="783.2" r="9.6"/><circle cx="2005.5" cy="779.5" r="9.6"/><circle cx="1999.3" cy="774.6" r="9.6"/><circle cx="1998.4" cy="766.0" r="9.6"/><circle cx="2004.0" cy="756.8" r="9.6"/><circle cx="2006.9" cy="750.4" r="9.6"/><circle cx="2005.7" cy="743.6" r="9.6"/><circle cx="2004.6" cy="735.9" r="9.6"/><circle cx="1998.5" cy="725.6" r="9.6"/><circle cx="1994.3" cy="720.1" r="9.6"/><circle cx="1992.1" cy="711.0" r="9.6"/><circle cx="1989.8" cy="705.3" r="9.6"/><circle cx="1987.0" cy="697.3" r="9.6"/><circle cx="1978.6" cy="692.4" r="9.6"/><circle cx="1975.5" cy="683.5" r="9.6"/><circle cx="1976.3" cy="678.4" r="9.6"/><circle cx="1965.5" cy="676.2" r="9.6"/><circle cx="1959.3" cy="679.3" r="9.6"/><circle cx="1952.4" cy="680.4" r="9.6"/><circle cx="1944.0" cy="675.5" r="9.6"/><circle cx="1940.1" cy="674.8" r="9.6"/><circle cx="1929.3" cy="673.4" r="9.6"/><circle cx="1921.2" cy="666.7" r="9.6"/><circle cx="1920.9" cy="662.3" r="9.6"/><circle cx="1912.4" cy="666.4" r="9.6"/><circle cx="1906.0" cy="670.4" r="9.6"/><circle cx="1898.3" cy="676.2" r="9.6"/><circle cx="1890.8" cy="675.6" r="9.6"/><circle cx="1883.2" cy="672.6" r="9.6"/><circle cx="1874.8" cy="667.4" r="9.6"/><circle cx="1870.6" cy="662.5" r="9.6"/><circle cx="1871.9" cy="654.4" r="9.6"/><circle cx="1872.3" cy="649.7" r="9.6"/><circle cx="1864.8" cy="650.4" r="9.6"/><circle cx="1856.3" cy="649.5" r="9.6"/><circle cx="1844.0" cy="648.9" r="9.6"/><circle cx="1838.5" cy="643.3" r="9.6"/><circle cx="1837.6" cy="638.2" r="9.6"/><circle cx="1832.8" cy="638.1" r="9.6"/><circle cx="1825.7" cy="637.2" r="9.6"/><circle cx="1821.0" cy="629.7" r="9.6"/><circle cx="1822.1" cy="622.1" r="9.6"/><circle cx="1813.5" cy="622.6" r="9.6"/><circle cx="1805.0" cy="622.9" r="9.6"/><circle cx="1798.0" cy="623.7" r="9.6"/><circle cx="1789.6" cy="623.2" r="9.6"/><circle cx="1780.5" cy="623.6" r="9.6"/><circle cx="1772.3" cy="623.7" r="9.6"/><circle cx="1763.2" cy="623.1" r="9.6"/><circle cx="1753.4" cy="623.8" r="9.6"/><circle cx="1746.7" cy="623.6" r="9.6"/><circle cx="1738.7" cy="623.4" r="9.6"/><circle cx="1729.8" cy="623.7" r="9.6"/><circle cx="1720.8" cy="623.0" r="9.6"/><circle cx="1711.0" cy="623.7" r="9.6"/><circle cx="1701.3" cy="623.4" r="9.6"/><circle cx="1952.8" cy="687.6" r="9.6"/><circle cx="1959.5" cy="691.6" r="9.6"/><circle cx="1963.1" cy="700.4" r="9.6"/><circle cx="1960.2" cy="710.0" r="9.6"/><circle cx="1957.9" cy="717.7" r="9.6"/><circle cx="1953.8" cy="725.9" r="9.6"/><circle cx="1955.1" cy="735.3" r="9.6"/><circle cx="1956.1" cy="743.3" r="9.6"/><circle cx="1958.6" cy="751.5" r="9.6"/><circle cx="1959.1" cy="757.4" r="9.6"/><circle cx="1954.1" cy="766.3" r="9.6"/><circle cx="1950.4" cy="771.4" r="9.6"/><circle cx="1941.7" cy="777.7" r="9.6"/><circle cx="1935.9" cy="776.2" r="9.6"/><circle cx="1930.9" cy="769.2" r="9.6"/><circle cx="1927.9" cy="759.0" r="9.6"/><circle cx="1927.5" cy="753.6" r="9.6"/><circle cx="1928.4" cy="744.5" r="9.6"/><circle cx="1929.6" cy="733.5" r="9.6"/><circle cx="1931.7" cy="725.9" r="9.6"/><circle cx="1933.1" cy="719.6" r="9.6"/><circle cx="1934.6" cy="711.7" r="9.6"/><circle cx="1936.8" cy="702.5" r="9.6"/><circle cx="1940.0" cy="696.2" r="9.6"/><circle cx="1946.9" cy="687.0" r="9.6"/><circle cx="1828.4" cy="883.6" r="9.6"/><circle cx="1830.5" cy="875.2" r="9.6"/><circle cx="1838.2" cy="873.1" r="9.6"/><circle cx="1848.3" cy="872.2" r="9.6"/><circle cx="1855.9" cy="871.8" r="9.6"/><circle cx="1863.5" cy="871.3" r="9.6"/><circle cx="1873.1" cy="871.0" r="9.6"/><circle cx="1882.5" cy="871.8" r="9.6"/><circle cx="1891.8" cy="872.9" r="9.6"/><circle cx="1897.7" cy="876.9" r="9.6"/><circle cx="1900.5" cy="885.5" r="9.6"/><circle cx="1900.8" cy="892.5" r="9.6"/><circle cx="1898.6" cy="902.7" r="9.6"/><circle cx="1892.8" cy="908.7" r="9.6"/><circle cx="1889.8" cy="914.4" r="9.6"/><circle cx="1883.7" cy="924.0" r="9.6"/><circle cx="1883.6" cy="931.3" r="9.6"/><circle cx="1880.4" cy="939.7" r="9.6"/><circle cx="1873.0" cy="942.4" r="9.6"/><circle cx="1864.4" cy="944.0" r="9.6"/><circle cx="1856.5" cy="943.7" r="9.6"/><circle cx="1849.3" cy="943.9" r="9.6"/><circle cx="1837.5" cy="944.1" r="9.6"/><circle cx="1832.8" cy="936.2" r="9.6"/><circle cx="1829.1" cy="930.8" r="9.6"/><circle cx="1824.1" cy="923.0" r="9.6"/><circle cx="1822.9" cy="916.8" r="9.6"/><circle cx="1824.2" cy="906.2" r="9.6"/><circle cx="1824.9" cy="898.5" r="9.6"/><circle cx="1826.4" cy="892.5" r="9.6"/><circle cx="2226.1" cy="703.2" r="9.6"/><circle cx="2223.9" cy="710.8" r="9.6"/><circle cx="2230.4" cy="706.7" r="9.6"/>
<circle cx="1403.6" cy="625.8" r="9.6"/><circle cx="1419.9" cy="621.3" r="9.6"/><circle cx="1384.1" cy="637.9" r="9.6"/><circle cx="1412.4" cy="635.8" r="9.6"/><circle cx="1449.9" cy="629.6" r="9.6"/><circle cx="1468.2" cy="631.6" r="9.6"/><circle cx="1477.3" cy="630.8" r="9.6"/><circle cx="1488.1" cy="627.5" r="9.6"/><circle cx="1499.8" cy="621.3" r="9.6"/><circle cx="1514.8" cy="629.6" r="9.6"/><circle cx="1533.9" cy="633.3" r="9.6"/><circle cx="1551.7" cy="625.8" r="9.6"/><circle cx="1570.0" cy="625.0" r="9.6"/><circle cx="1582.2" cy="627.5" r="9.6"/><circle cx="1593.8" cy="627.5" r="9.6"/><circle cx="1611.7" cy="631.6" r="9.6"/><circle cx="1627.6" cy="635.8" r="9.6"/><circle cx="1647.9" cy="634.1" r="9.6"/><circle cx="1663.7" cy="623.3" r="9.6"/><circle cx="1677.9" cy="625.8" r="9.6"/><circle cx="1693.7" cy="621.6" r="9.6"/><circle cx="1707.9" cy="623.3" r="9.6"/><circle cx="1720.3" cy="622.5" r="9.6"/><circle cx="1734.5" cy="622.5" r="9.6"/><circle cx="1399.9" cy="641.6" r="9.6"/><circle cx="1419.9" cy="643.3" r="9.6"/><circle cx="1437.4" cy="641.6" r="9.6"/><circle cx="1450.7" cy="648.3" r="9.6"/><circle cx="1469.8" cy="649.9" r="9.6"/><circle cx="1483.2" cy="646.6" r="9.6"/><circle cx="1496.5" cy="649.9" r="9.6"/><circle cx="1506.5" cy="644.9" r="9.6"/><circle cx="1519.8" cy="648.3" r="9.6"/><circle cx="1534.8" cy="648.3" r="9.6"/><circle cx="1562.2" cy="642.4" r="9.6"/><circle cx="1590.0" cy="644.1" r="9.6"/><circle cx="1639.6" cy="654.1" r="9.6"/><circle cx="1660.4" cy="649.1" r="9.6"/><circle cx="1676.2" cy="644.9" r="9.6"/><circle cx="1696.2" cy="638.3" r="9.6"/><circle cx="1707.9" cy="638.3" r="9.6"/><circle cx="1673.7" cy="633.3" r="9.6"/><circle cx="1689.5" cy="633.3" r="9.6"/><circle cx="1387.5" cy="659.9" r="9.6"/><circle cx="1403.3" cy="658.3" r="9.6"/><circle cx="1416.6" cy="658.3" r="9.6"/><circle cx="1435.7" cy="659.9" r="9.6"/><circle cx="1453.2" cy="656.6" r="9.6"/><circle cx="1466.5" cy="661.6" r="9.6"/><circle cx="1481.5" cy="659.9" r="9.6"/><circle cx="1496.5" cy="661.6" r="9.6"/><circle cx="1509.8" cy="656.6" r="9.6"/><circle cx="1523.1" cy="659.9" r="9.6"/><circle cx="1541.4" cy="658.3" r="9.6"/><circle cx="1558.1" cy="656.6" r="9.6"/><circle cx="1575.5" cy="657.4" r="9.6"/><circle cx="1589.7" cy="663.2" r="9.6"/><circle cx="1605.5" cy="657.4" r="9.6"/><circle cx="1622.1" cy="659.1" r="9.6"/><circle cx="1663.7" cy="666.6" r="9.6"/><circle cx="1679.6" cy="658.3" r="9.6"/><circle cx="1692.9" cy="654.9" r="9.6"/><circle cx="1699.5" cy="669.9" r="9.6"/><circle cx="1682.9" cy="671.6" r="9.6"/><circle cx="1391.6" cy="673.2" r="9.6"/><circle cx="1404.9" cy="673.2" r="9.6"/><circle cx="1435.7" cy="672.4" r="9.6"/><circle cx="1451.5" cy="678.2" r="9.6"/><circle cx="1466.5" cy="676.6" r="9.6"/><circle cx="1481.5" cy="676.6" r="9.6"/><circle cx="1496.5" cy="674.9" r="9.6"/><circle cx="1512.3" cy="672.4" r="9.6"/><circle cx="1512.3" cy="688.2" r="9.6"/><circle cx="1533.9" cy="684.1" r="9.6"/><circle cx="1549.7" cy="679.9" r="9.6"/><circle cx="1564.7" cy="681.6" r="9.6"/><circle cx="1578.0" cy="674.9" r="9.6"/><circle cx="1591.3" cy="671.6" r="9.6"/><circle cx="1606.3" cy="673.2" r="9.6"/><circle cx="1621.3" cy="674.9" r="9.6"/><circle cx="1637.1" cy="681.6" r="9.6"/><circle cx="1647.9" cy="684.1" r="9.6"/><circle cx="1674.6" cy="678.2" r="9.6"/><circle cx="1691.2" cy="679.9" r="9.6"/><circle cx="1704.5" cy="683.2" r="9.6"/><circle cx="1621.3" cy="686.6" r="9.6"/><circle cx="1606.3" cy="686.6" r="9.6"/><circle cx="1391.6" cy="684.9" r="9.6"/><circle cx="1406.6" cy="686.6" r="9.6"/><circle cx="1421.6" cy="689.9" r="9.6"/><circle cx="1433.2" cy="688.2" r="9.6"/><circle cx="1389.1" cy="698.2" r="9.6"/><circle cx="1403.3" cy="699.9" r="9.6"/><circle cx="1419.9" cy="699.9" r="9.6"/><circle cx="1436.6" cy="699.9" r="9.6"/><circle cx="1453.2" cy="694.9" r="9.6"/><circle cx="1469.8" cy="695.7" r="9.6"/><circle cx="1489.8" cy="694.9" r="9.6"/><circle cx="1533.9" cy="707.4" r="9.6"/><circle cx="1549.7" cy="704.0" r="9.6"/><circle cx="1564.7" cy="699.9" r="9.6"/><circle cx="1578.0" cy="698.2" r="9.6"/><circle cx="1591.3" cy="693.2" r="9.6"/><circle cx="1610.0" cy="699.9" r="9.6"/><circle cx="1636.3" cy="694.0" r="9.6"/><circle cx="1662.1" cy="698.2" r="9.6"/><circle cx="1677.9" cy="694.9" r="9.6"/><circle cx="1692.9" cy="699.9" r="9.6"/><circle cx="1706.2" cy="698.2" r="9.6"/><circle cx="1387.5" cy="714.0" r="9.6"/><circle cx="1399.9" cy="716.5" r="9.6"/><circle cx="1408.3" cy="716.5" r="9.6"/><circle cx="1429.9" cy="714.8" r="9.6"/><circle cx="1443.2" cy="713.2" r="9.6"/><circle cx="1459.9" cy="717.3" r="9.6"/><circle cx="1479.8" cy="714.0" r="9.6"/><circle cx="1498.1" cy="709.9" r="9.6"/><circle cx="1512.3" cy="713.2" r="9.6"/><circle cx="1532.3" cy="722.3" r="9.6"/><circle cx="1561.7" cy="721.5" r="9.6"/><circle cx="1576.4" cy="719.8" r="9.6"/><circle cx="1588.0" cy="727.3" r="9.6"/><circle cx="1606.3" cy="719.8" r="9.6"/><circle cx="1625.5" cy="715.7" r="9.6"/><circle cx="1642.1" cy="712.4" r="9.6"/><circle cx="1663.7" cy="721.5" r="9.6"/><circle cx="1677.9" cy="715.7" r="9.6"/><circle cx="1692.9" cy="713.2" r="9.6"/><circle cx="1703.7" cy="716.5" r="9.6"/><circle cx="1499.8" cy="721.5" r="9.6"/><circle cx="1509.8" cy="726.5" r="9.6"/><circle cx="1403.3" cy="728.2" r="9.6"/><circle cx="1424.1" cy="728.2" r="9.6"/><circle cx="1442.4" cy="724.8" r="9.6"/><circle cx="1494.8" cy="728.2" r="9.6"/><circle cx="1504.8" cy="733.2" r="9.6"/><circle cx="1548.9" cy="731.5" r="9.6"/><circle cx="1563.0" cy="733.2" r="9.6"/><circle cx="1573.0" cy="731.5" r="9.6"/><circle cx="1618.0" cy="731.5" r="9.6"/><circle cx="1631.3" cy="730.7" r="9.6"/><circle cx="1647.9" cy="726.5" r="9.6"/><circle cx="1677.9" cy="731.5" r="9.6"/><circle cx="1692.9" cy="729.8" r="9.6"/><circle cx="1702.9" cy="731.5" r="9.6"/><circle cx="1516.4" cy="738.1" r="9.6"/><circle cx="1533.1" cy="741.5" r="9.6"/><circle cx="1558.1" cy="741.5" r="9.6"/><circle cx="1571.4" cy="741.5" r="9.6"/><circle cx="1384.1" cy="744.8" r="9.6"/><circle cx="1401.6" cy="742.3" r="9.6"/><circle cx="1381.6" cy="758.1" r="9.6"/><circle cx="1391.6" cy="759.8" r="9.6"/><circle cx="1403.3" cy="758.1" r="9.6"/><circle cx="1417.9" cy="751.8" r="9.6"/><circle cx="1435.7" cy="752.3" r="9.6"/><circle cx="1459.9" cy="747.8" r="9.6"/><circle cx="1481.8" cy="744.0" r="9.6"/><circle cx="1501.8" cy="752.3" r="9.6"/><circle cx="1523.1" cy="749.8" r="9.6"/><circle cx="1538.1" cy="749.8" r="9.6"/><circle cx="1553.1" cy="749.8" r="9.6"/><circle cx="1566.4" cy="749.8" r="9.6"/><circle cx="1579.7" cy="758.1" r="9.6"/><circle cx="1598.0" cy="751.8" r="9.6"/><circle cx="1618.0" cy="746.5" r="9.6"/><circle cx="1643.8" cy="747.3" r="9.6"/><circle cx="1663.7" cy="749.8" r="9.6"/><circle cx="1679.6" cy="748.1" r="9.6"/><circle cx="1692.9" cy="749.8" r="9.6"/><circle cx="1527.3" cy="759.8" r="9.6"/><circle cx="1541.4" cy="762.3" r="9.6"/><circle cx="1558.1" cy="759.8" r="9.6"/><circle cx="1571.4" cy="759.8" r="9.6"/><circle cx="1474.0" cy="783.6" r="9.6"/><circle cx="1513.9" cy="787.7" r="9.6"/><circle cx="1551.4" cy="778.1" r="9.6"/><circle cx="1566.4" cy="776.4" r="9.6"/><circle cx="1579.7" cy="779.8" r="9.6"/><circle cx="1588.0" cy="781.4" r="9.6"/><circle cx="1612.2" cy="776.1" r="9.6"/><circle cx="1643.8" cy="773.9" r="9.6"/><circle cx="1662.1" cy="773.9" r="9.6"/><circle cx="1675.4" cy="782.3" r="9.6"/><circle cx="1689.5" cy="783.9" r="9.6"/><circle cx="1702.9" cy="784.8" r="9.6"/><circle cx="1599.7" cy="791.4" r="9.6"/><circle cx="1566.4" cy="788.1" r="9.6"/><circle cx="1583.0" cy="791.4" r="9.6"/><circle cx="1451.9" cy="795.9" r="9.6"/><circle cx="1472.3" cy="799.7" r="9.6"/><circle cx="1489.8" cy="807.7" r="9.6"/><circle cx="1501.8" cy="805.6" r="9.6"/><circle cx="1549.7" cy="798.1" r="9.6"/><circle cx="1566.4" cy="799.7" r="9.6"/><circle cx="1583.0" cy="801.4" r="9.6"/><circle cx="1596.3" cy="799.7" r="9.6"/><circle cx="1603.8" cy="806.4" r="9.6"/><circle cx="1553.9" cy="815.5" r="9.6"/><circle cx="1569.7" cy="814.7" r="9.6"/><circle cx="1586.4" cy="814.7" r="9.6"/><circle cx="1472.3" cy="818.0" r="9.6"/><circle cx="1453.2" cy="819.7" r="9.6"/><circle cx="1451.9" cy="832.2" r="9.6"/><circle cx="1521.8" cy="819.7" r="9.6"/><circle cx="1472.3" cy="838.0" r="9.6"/><circle cx="1549.7" cy="825.5" r="9.6"/><circle cx="1566.4" cy="828.0" r="9.6"/><circle cx="1583.0" cy="828.0" r="9.6"/><circle cx="1602.2" cy="828.0" r="9.6"/><circle cx="1546.4" cy="839.7" r="9.6"/><circle cx="1563.0" cy="839.7" r="9.6"/><circle cx="1581.4" cy="839.7" r="9.6"/><circle cx="1479.8" cy="851.3" r="9.6"/><circle cx="1498.1" cy="855.5" r="9.6"/><circle cx="1521.8" cy="851.3" r="9.6"/><circle cx="1544.7" cy="851.3" r="9.6"/><circle cx="1566.4" cy="851.3" r="9.6"/><circle cx="1599.7" cy="851.3" r="9.6"/><circle cx="1541.4" cy="861.0" r="9.6"/><circle cx="1563.0" cy="861.0" r="9.6"/><circle cx="1574.7" cy="850.0" r="9.6"/><circle cx="1518.1" cy="885.8" r="9.6"/><circle cx="1621.8" cy="875.5" r="9.6"/><circle cx="1643.8" cy="875.5" r="9.6"/><circle cx="1661.3" cy="875.5" r="9.6"/><circle cx="1676.2" cy="873.3" r="9.6"/><circle cx="1693.7" cy="877.5" r="9.6"/><circle cx="1707.0" cy="870.0" r="9.6"/><circle cx="1623.8" cy="895.8" r="9.6"/><circle cx="1643.8" cy="889.9" r="9.6"/><circle cx="1656.3" cy="891.6" r="9.6"/><circle cx="1629.6" cy="904.1" r="9.6"/><circle cx="1646.3" cy="906.6" r="9.6"/><circle cx="1657.9" cy="909.9" r="9.6"/><circle cx="1674.6" cy="913.2" r="9.6"/><circle cx="1674.6" cy="896.6" r="9.6"/><circle cx="1691.2" cy="903.2" r="9.6"/><circle cx="1620.0" cy="923.6" r="9.6"/><circle cx="1643.8" cy="919.9" r="9.6"/><circle cx="1663.7" cy="926.1" r="9.6"/><circle cx="1682.1" cy="934.0" r="9.6"/><circle cx="1639.9" cy="937.9" r="9.6"/><circle cx="1657.9" cy="946.0" r="9.6"/><circle cx="1621.6" cy="947.4" r="9.6"/><circle cx="1613.8" cy="956.0" r="9.6"/><circle cx="1629.6" cy="954.8" r="9.6"/><circle cx="1646.3" cy="954.8" r="9.6"/><circle cx="1682.1" cy="949.9" r="9.6"/><circle cx="1653.8" cy="963.2" r="9.6"/><circle cx="1665.4" cy="969.8" r="9.6"/><circle cx="1680.4" cy="969.8" r="9.6"/><circle cx="1683.7" cy="981.5" r="9.6"/><circle cx="1683.7" cy="994.8" r="9.6"/><circle cx="1699.5" cy="996.5" r="9.6"/><circle cx="1714.5" cy="988.1" r="9.6"/><circle cx="1704.5" cy="978.1" r="9.6"/><circle cx="1731.2" cy="994.8" r="9.6"/><circle cx="1741.1" cy="1016.4" r="9.6"/><circle cx="849.9" cy="1125.6" r="9.6"/><circle cx="873.5" cy="1135.9" r="9.6"/><circle cx="889.4" cy="1139.6" r="9.6"/><circle cx="899.8" cy="1145.5" r="9.6"/><circle cx="912.0" cy="1165.9" r="9.6"/><circle cx="2223.7" cy="674.0" r="9.6"/>
</g>
<rect x="775" y="1422" width="258" height="23" fill="#fafafa" opacity=".9"/>
<text x="780.5" y="1439.5" font-family="Liberation Sans,sans-serif" font-size="16" fill="#555">© 2024 Mapbox © OpenStreetMap</text>
<rect x="2168.2" y="1412" width="171.3" height="27.5" rx="4" fill="#969696" opacity=".88"/>
<text x="2253.8" y="1433" text-anchor="middle" font-family="Liberation Sans,sans-serif" font-weight="bold" font-size="21" fill="#fff" letter-spacing=".35">317 unknown</text>
</svg>
<div style="left:770px;top:362px;width:1580px;height:1088px;border:1.5px solid #e2e2e2;border-right-color:#e8e8e8;pointer-events:none"></div>
<div style="left:0;top:1476.4px;width:2376px;height:61px;background:#e7e7e7;border-top:1.6px solid #d2d2d2;border-bottom:1.6px solid #d2d2d2"></div>
<div style="left:0;top:1538px;width:2376px;height:44px;background:#ebebeb"></div>
<div style="left:267.1px;top:1478px;width:115.6px;height:58.6px;background:#fafafa;border-left:1.6px solid #d2d2d2;border-right:1.6px solid #d2d2d2"></div>
<div style="left:445.5px;top:1478px;width:1.6px;height:57px;background:#d2d2d2"></div>
<div style="left:509.3px;top:1478px;width:1.6px;height:57px;background:#d2d2d2"></div>
<div style="left:573.4px;top:1478px;width:1.6px;height:57px;background:#d2d2d2"></div>
<svg width="24" height="30" style="left:22px;top:1490px"><ellipse cx="11.8" cy="9.6" rx="7" ry="3.3" fill="none" stroke="#777" stroke-width="2"/><path d="M4.8 9.6V22.6a7 3.3 0 0 0 14 0V9.6" fill="none" stroke="#777" stroke-width="2"/></svg>
<div class="lbl" style="left:54.6px;top:1492.2px;color:#666;font-size:24.2px">Data Source</div>
<div class="lbl" style="left:280.4px;top:1491.8px;color:#555;font-weight:bold;font-size:24px">Sheet 1</div>
<svg width="600" height="60" style="left:0;top:1478px" viewBox="0 1478 600 60"><path d="M423.6 1507V1495.2H403.2V1514.4H412.5" fill="none" stroke="#666" stroke-width="2"/><path d="M408.2 1505.5v3.7M413.2 1501v8.2M418.2 1503.5v3.4" stroke="#666" stroke-width="2" fill="none"/><path d="M417.5 1516.4h12.8M423.9 1510.0v12.8" stroke="#666" stroke-width="3.4" fill="none"/><path d="M487.3 1507.5V1495.2H466.9V1514.4H476.5M466.9 1504.8H487M477.1 1495.2V1514.4" fill="none" stroke="#666" stroke-width="2"/><path d="M482.0 1516.4h12.8M488.4 1510.0v12.8" stroke="#666" stroke-width="3.4" fill="none"/><path d="M551.4 1507.5V1495.4L541 1499.6L530.6 1495.4V1512L541 1516M541 1499.6V1510" fill="none" stroke="#666" stroke-width="2"/><path d="M546.1 1516.4h12.8M552.5 1510.0v12.8" stroke="#666" stroke-width="3.4" fill="none"/></svg>
<div class="lbl" style="left:30.5px;top:1542.6px;font-size:21px;letter-spacing:.32px;color:#222">2904 marks</div>
<div class="lbl" style="left:177px;top:1542.6px;font-size:21px;letter-spacing:-.25px;color:#222">1 row by 1 column</div>
<div style="left:1624.5px;top:1538px;width:1.6px;height:40px;background:#d0d0d0"></div>
<div style="left:1878.5px;top:1538px;width:1.6px;height:40px;background:#d0d0d0"></div>
<div style="left:1932.2px;top:1538px;width:1.6px;height:40px;background:#d0d0d0"></div>
<div style="left:1986.2px;top:1538px;width:1.6px;height:40px;background:#d0d0d0"></div>
<div style="left:2080.3px;top:1538px;width:1.6px;height:40px;background:#d0d0d0"></div>
<div style="left:2222.2px;top:1538px;width:1.6px;height:40px;background:#d0d0d0"></div>
<svg width="300" height="44" style="left:2090px;top:1538px" viewBox="2090 1538 300 44"><path d="M2099 1550.3v14" stroke="#bdbdbd" stroke-width="1.8"/><path d="M2110.5 1550.3v14l-9-7z" fill="#bdbdbd"/><path d="M2141 1550.3v14l-9-7z" fill="#bdbdbd"/><path d="M2163.5 1550.3v14l9-7z" fill="#bdbdbd"/><path d="M2206 1550.3v14" stroke="#bdbdbd" stroke-width="1.8"/><path d="M2194.5 1550.3v14l9-7z" fill="#bdbdbd"/><rect x="2240.7" y="1547.0" width="5.9" height="5.9" fill="#c4c4c4"/><rect x="2240.7" y="1555.1" width="5.9" height="5.9" fill="#c4c4c4"/><rect x="2240.7" y="1563.2" width="5.9" height="5.9" fill="#c4c4c4"/><rect x="2248.8" y="1547.0" width="5.9" height="5.9" fill="#c4c4c4"/><rect x="2248.8" y="1555.1" width="5.9" height="5.9" fill="#c4c4c4"/><rect x="2248.8" y="1563.2" width="5.9" height="5.9" fill="#c4c4c4"/><rect x="2256.9" y="1547.0" width="5.9" height="5.9" fill="#c4c4c4"/><rect x="2256.9" y="1555.1" width="5.9" height="5.9" fill="#c4c4c4"/><rect x="2256.9" y="1563.2" width="5.9" height="5.9" fill="#c4c4c4"/><rect x="2283.2" y="1547" width="21.8" height="12.8" fill="#c2c2c2"/><rect x="2283.2" y="1563" width="5.8" height="6" fill="#c2c2c2"/><rect x="2291.2" y="1563" width="5.8" height="6" fill="#c2c2c2"/><rect x="2299.2" y="1563" width="5.8" height="6" fill="#c2c2c2"/><rect x="2325" y="1547" width="22" height="22" fill="#666"/></svg>
</div>
</body>
</html>
